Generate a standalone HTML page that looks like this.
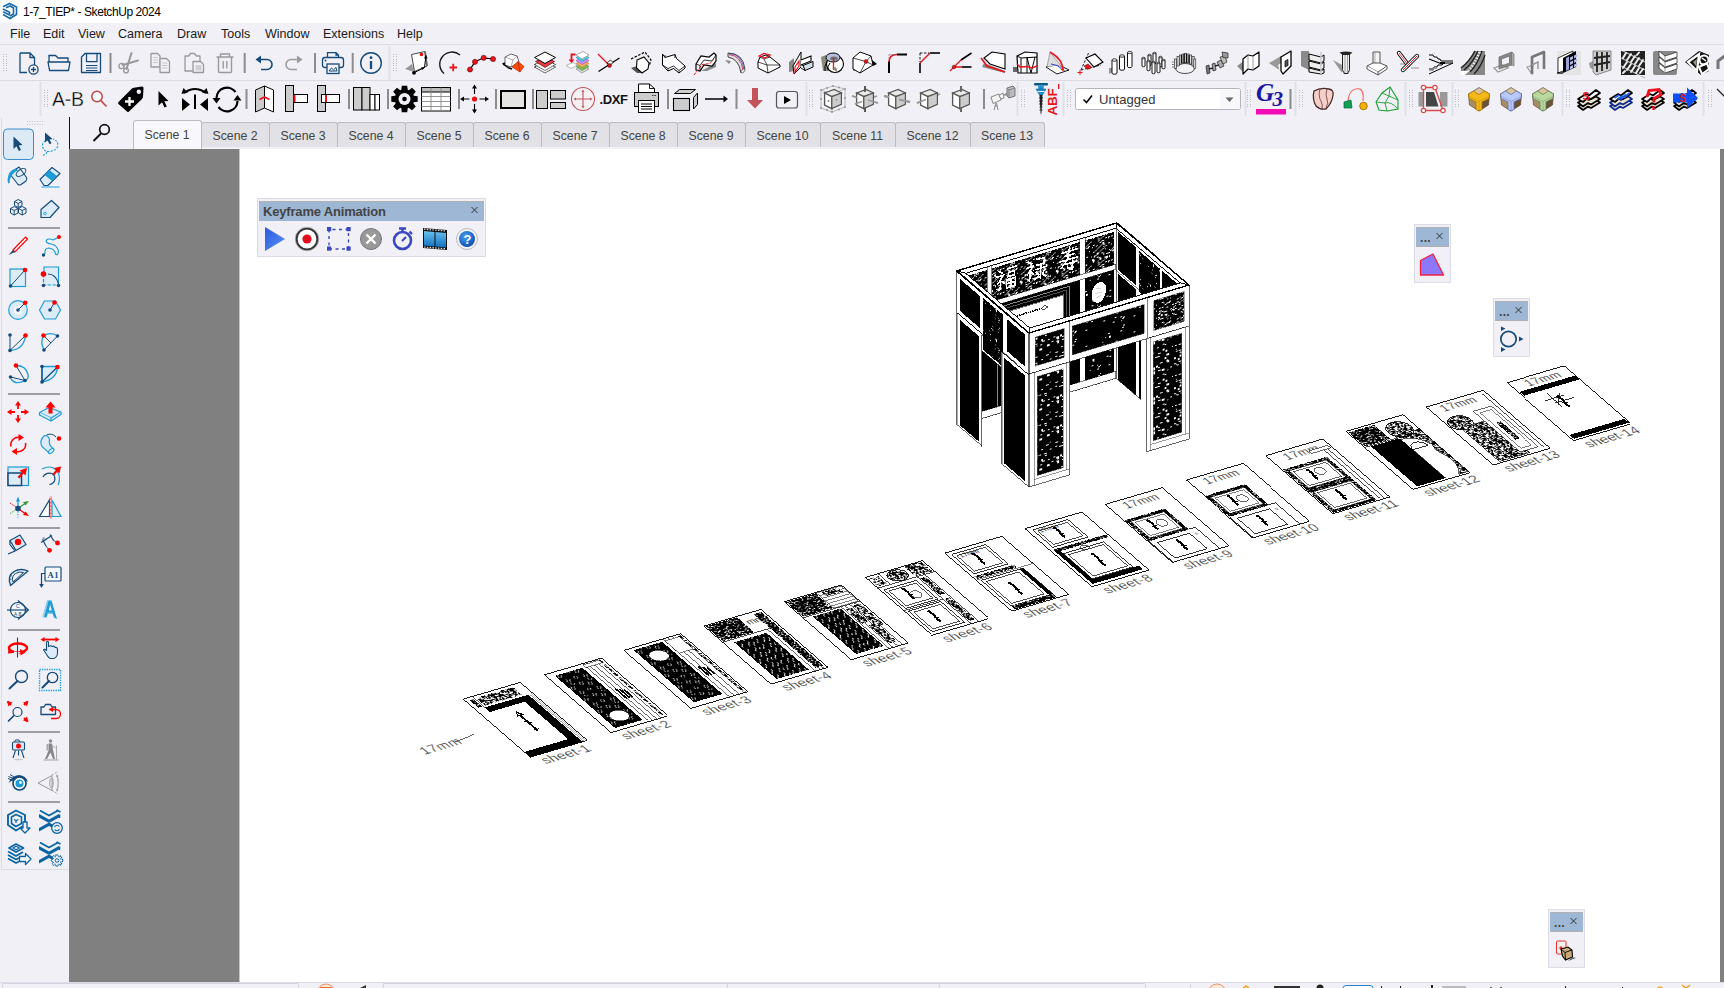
<!DOCTYPE html>
<html><head><meta charset="utf-8"><title>1-7_TIEP* - SketchUp 2024</title>
<style>
*{box-sizing:border-box;margin:0;padding:0}
html,body{width:1724px;height:988px;overflow:hidden;background:#f0f0f6;font-family:"Liberation Sans",sans-serif;}
.abs{position:absolute}
#title{position:absolute;left:0;top:0;width:1724px;height:23px;background:#fff}
#title .t{position:absolute;left:23px;top:5px;font-size:12px;color:#000;white-space:nowrap;letter-spacing:-0.42px}
#menu{position:absolute;left:0;top:23px;width:1724px;height:22px;background:#f0f0f6;border-bottom:1px solid #dcdce4}
#menu span{position:absolute;top:4px;font-size:12.5px;color:#1a1a1a;white-space:nowrap}
#tb1{position:absolute;left:0;top:45px;width:1724px;height:36px;background:#f0f0f6;border-bottom:1px solid #dadae2}
#tb2{position:absolute;left:0;top:81px;width:1724px;height:37px;background:#f0f0f6;border-bottom:1px solid #cbcbd0}
#tabs{position:absolute;left:70px;top:117px;width:1654px;height:32px;background:#f0f0f6}
.tab{position:absolute;top:5px;height:25px;background:#e1e1e6;border:1px solid #bcbcc4;border-bottom:none;border-radius:3px 3px 0 0;font-size:12.3px;color:#444;text-align:center;line-height:26px;white-space:nowrap}
.tab.act{top:3px;height:29px;background:#f8f8fc;line-height:28px;border-color:#bcbcc4}
#left{position:absolute;left:0;top:117px;width:69px;height:852px;background:#f0f0f6}
#vline{position:absolute;left:69px;top:117px;width:1.5px;height:32px;background:#111}
#gray{position:absolute;left:69px;top:149px;width:170px;height:833px;background:#808080;border-right:1px solid #c4c4c4;box-sizing:content-box}
#view{position:absolute;left:240px;top:149px;width:1480px;height:833px;background:#fff}
#rbar{position:absolute;left:1720px;top:149px;width:4px;height:833px;background:#808080}
#status{position:absolute;left:0;top:982px;width:1724px;height:6px;background:#f0f0f6}
.grip{position:absolute;width:5px;height:22px;background-image:radial-gradient(circle,#c4c4cc 0.6px,transparent 0.9px);background-size:2.5px 3px}
.sep{position:absolute;width:2px;background:#8a8a8a}
svg{position:absolute;overflow:visible}
</style></head><body>
<div id="title"><svg width="20" height="22" viewBox="0 0 20 22" style="left:0;top:0"><g fill="none" stroke="#1a6aa8" stroke-width="1.600" stroke-linejoin="round" stroke-linecap="round"><path d="M3.500 6.500L9.500 3.500L16.500 7V14.500L10 18.500"/><path d="M6.500 7.500L10 6L13.500 8V14L10.500 15.800"/><path d="M3.500 9.200L9.500 12.200V14M3.500 12L9.500 15M3.500 14.800L10 18.500"/></g></svg><span class="t">1-7_TIEP* - SketchUp 2024</span></div>
<div id="menu">
<span style="left:10px">File</span><span style="left:43px">Edit</span><span style="left:78px">View</span><span style="left:118px">Camera</span><span style="left:177px">Draw</span><span style="left:221px">Tools</span><span style="left:265px">Window</span><span style="left:323px">Extensions</span><span style="left:397px">Help</span>
</div>
<div id="tb1"></div>
<div id="tb2"></div>
<div id="left"></div>
<div id="vline"></div>
<div id="gray"></div>
<div id="view"></div>
<div id="rbar"></div>
<div id="status"></div>
<svg id="vsvg" width="1724" height="988" viewBox="0 0 1724 988" style="left:0;top:0" shape-rendering="crispEdges">
<defs>
<pattern id="spk" width="30" height="30" patternUnits="userSpaceOnUse"><rect width="30" height="30" fill="#000"/><rect x="9.7" y="4.5" width="1.4" height="1.4" fill="#fff"/><rect x="2.2" y="16.1" width="1.2" height="1.2" fill="#fff"/><rect x="1.7" y="15.2" width="0.9" height="0.9" fill="#fff"/><rect x="13.0" y="2.1" width="1.0" height="1.0" fill="#fff"/><rect x="12.7" y="24.8" width="1.0" height="1.0" fill="#fff"/><rect x="6.7" y="18.8" width="1.7" height="1.7" fill="#fff"/><rect x="17.3" y="11.9" width="1.7" height="1.7" fill="#fff"/><rect x="1.4" y="25.8" width="1.1" height="1.1" fill="#fff"/><rect x="4.3" y="3.5" width="1.1" height="1.1" fill="#fff"/><rect x="24.5" y="5.4" width="1.4" height="1.4" fill="#fff"/><rect x="19.2" y="11.2" width="1.3" height="1.3" fill="#fff"/><rect x="1.9" y="1.8" width="1.1" height="1.1" fill="#fff"/><rect x="20.4" y="12.8" width="1.2" height="1.2" fill="#fff"/><rect x="17.6" y="13.6" width="1.1" height="1.1" fill="#fff"/><rect x="23.8" y="21.0" width="1.1" height="1.1" fill="#fff"/><rect x="17.2" y="15.8" width="1.6" height="1.6" fill="#fff"/><rect x="21.9" y="8.6" width="1.7" height="1.7" fill="#fff"/><rect x="3.5" y="12.5" width="1.5" height="1.5" fill="#fff"/><rect x="4.6" y="14.7" width="0.9" height="0.9" fill="#fff"/><rect x="20.0" y="22.9" width="1.4" height="1.4" fill="#fff"/><rect x="26.3" y="9.4" width="1.5" height="1.5" fill="#fff"/><rect x="17.8" y="17.4" width="1.3" height="1.3" fill="#fff"/><rect x="25.2" y="28.3" width="1.3" height="1.3" fill="#fff"/><rect x="19.9" y="1.8" width="1.5" height="1.5" fill="#fff"/><rect x="19.4" y="29.8" width="1.6" height="1.6" fill="#fff"/><rect x="8.5" y="11.6" width="1.4" height="1.4" fill="#fff"/><rect x="0.7" y="13.9" width="1.0" height="1.0" fill="#fff"/><rect x="3.5" y="1.8" width="1.5" height="1.5" fill="#fff"/><rect x="3.9" y="7.4" width="1.2" height="1.2" fill="#fff"/><rect x="26.1" y="2.4" width="1.3" height="1.3" fill="#fff"/><rect x="16.5" y="26.5" width="1.6" height="1.6" fill="#fff"/><rect x="25.9" y="8.4" width="1.2" height="1.2" fill="#fff"/><rect x="10.8" y="26.5" width="1.7" height="1.7" fill="#fff"/><rect x="4.5" y="5.3" width="1.1" height="1.1" fill="#fff"/><rect x="7.0" y="14.5" width="1.4" height="1.4" fill="#fff"/><rect x="7.9" y="0.1" width="1.2" height="1.2" fill="#fff"/><rect x="11.1" y="17.0" width="1.7" height="1.7" fill="#fff"/><rect x="20.7" y="15.5" width="1.4" height="1.4" fill="#fff"/><rect x="20.3" y="1.6" width="1.6" height="1.6" fill="#fff"/><rect x="23.4" y="26.2" width="1.5" height="1.5" fill="#fff"/><rect x="11.8" y="12.0" width="1.0" height="1.0" fill="#fff"/><rect x="19.0" y="1.9" width="1.0" height="1.0" fill="#fff"/><rect x="6.3" y="4.9" width="1.2" height="1.2" fill="#fff"/><rect x="1.6" y="0.0" width="1.0" height="1.0" fill="#fff"/><rect x="3.0" y="10.9" width="0.9" height="0.9" fill="#fff"/><rect x="26.2" y="18.4" width="1.0" height="1.0" fill="#fff"/><rect x="7.6" y="10.4" width="1.2" height="1.2" fill="#fff"/><rect x="3.7" y="25.5" width="1.7" height="1.7" fill="#fff"/><rect x="14.0" y="14.5" width="1.0" height="1.0" fill="#fff"/><rect x="3.1" y="10.3" width="1.1" height="1.1" fill="#fff"/><rect x="24.9" y="4.8" width="0.9" height="0.9" fill="#fff"/><rect x="28.5" y="15.8" width="1.0" height="1.0" fill="#fff"/><rect x="16.3" y="0.8" width="1.3" height="1.3" fill="#fff"/><rect x="29.4" y="25.9" width="1.5" height="1.5" fill="#fff"/><rect x="7.8" y="11.0" width="1.0" height="1.0" fill="#fff"/><rect x="23.2" y="16.0" width="1.5" height="1.5" fill="#fff"/><rect x="9.9" y="6.7" width="1.5" height="1.5" fill="#fff"/><rect x="29.5" y="25.6" width="1.5" height="1.5" fill="#fff"/><rect x="24.5" y="22.2" width="1.1" height="1.1" fill="#fff"/><rect x="15.5" y="10.7" width="0.9" height="0.9" fill="#fff"/><rect x="0.8" y="8.4" width="1.1" height="1.1" fill="#fff"/><rect x="20.8" y="28.7" width="1.3" height="1.3" fill="#fff"/></pattern>
<pattern id="spk2" width="30" height="30" patternUnits="userSpaceOnUse"><rect width="30" height="30" fill="#000"/><rect x="28.1" y="29.6" width="1.3" height="1.3" fill="#fff"/><rect x="10.9" y="6.6" width="0.8" height="0.8" fill="#fff"/><rect x="5.9" y="6.1" width="1.1" height="1.1" fill="#fff"/><rect x="27.0" y="25.2" width="1.0" height="1.0" fill="#fff"/><rect x="19.6" y="24.0" width="0.8" height="0.8" fill="#fff"/><rect x="19.8" y="27.3" width="1.2" height="1.2" fill="#fff"/><rect x="22.5" y="14.3" width="0.8" height="0.8" fill="#fff"/><rect x="23.7" y="10.0" width="1.2" height="1.2" fill="#fff"/><rect x="29.1" y="11.9" width="0.9" height="0.9" fill="#fff"/><rect x="28.4" y="21.7" width="0.8" height="0.8" fill="#fff"/><rect x="3.8" y="4.5" width="1.2" height="1.2" fill="#fff"/><rect x="24.2" y="4.4" width="1.2" height="1.2" fill="#fff"/><rect x="29.4" y="19.7" width="0.9" height="0.9" fill="#fff"/><rect x="16.5" y="3.9" width="0.7" height="0.7" fill="#fff"/><rect x="29.1" y="19.5" width="1.0" height="1.0" fill="#fff"/><rect x="28.0" y="13.0" width="1.2" height="1.2" fill="#fff"/><rect x="24.8" y="6.3" width="0.9" height="0.9" fill="#fff"/><rect x="8.8" y="7.2" width="1.1" height="1.1" fill="#fff"/><rect x="7.8" y="12.6" width="0.8" height="0.8" fill="#fff"/><rect x="27.3" y="10.6" width="1.0" height="1.0" fill="#fff"/><rect x="17.5" y="27.1" width="1.0" height="1.0" fill="#fff"/><rect x="27.5" y="15.0" width="1.0" height="1.0" fill="#fff"/><rect x="15.7" y="0.6" width="1.0" height="1.0" fill="#fff"/><rect x="5.5" y="0.1" width="1.2" height="1.2" fill="#fff"/><rect x="5.2" y="14.2" width="1.1" height="1.1" fill="#fff"/><rect x="16.7" y="9.8" width="1.0" height="1.0" fill="#fff"/></pattern>
<pattern id="noise" width="20" height="20" patternUnits="userSpaceOnUse"><rect width="20" height="20" fill="#000"/><rect x="11.1" y="15.7" width="0.8" height="0.8" fill="#fff"/><rect x="11.2" y="5.0" width="0.9" height="0.9" fill="#fff"/><rect x="15.4" y="10.2" width="1.0" height="1.0" fill="#fff"/><rect x="15.2" y="18.2" width="1.0" height="1.0" fill="#fff"/><rect x="12.3" y="10.1" width="1.0" height="1.0" fill="#fff"/><rect x="13.9" y="9.0" width="1.0" height="1.0" fill="#fff"/><rect x="9.6" y="18.8" width="1.1" height="1.1" fill="#fff"/><rect x="17.5" y="18.8" width="0.9" height="0.9" fill="#fff"/><rect x="11.2" y="18.9" width="1.2" height="1.2" fill="#fff"/><rect x="2.7" y="2.4" width="1.0" height="1.0" fill="#fff"/><rect x="1.5" y="4.8" width="0.7" height="0.7" fill="#fff"/><rect x="13.4" y="15.7" width="1.2" height="1.2" fill="#fff"/><rect x="3.1" y="14.3" width="1.1" height="1.1" fill="#fff"/><rect x="2.9" y="17.7" width="1.3" height="1.3" fill="#fff"/><rect x="4.4" y="19.1" width="0.9" height="0.9" fill="#fff"/><rect x="9.7" y="19.8" width="1.2" height="1.2" fill="#fff"/><rect x="3.2" y="8.6" width="1.0" height="1.0" fill="#fff"/><rect x="6.8" y="3.9" width="0.9" height="0.9" fill="#fff"/><rect x="14.4" y="0.4" width="1.0" height="1.0" fill="#fff"/><rect x="8.8" y="0.4" width="0.9" height="0.9" fill="#fff"/><rect x="12.5" y="10.2" width="0.7" height="0.7" fill="#fff"/><rect x="19.7" y="15.8" width="1.3" height="1.3" fill="#fff"/><rect x="2.1" y="5.3" width="0.7" height="0.7" fill="#fff"/><rect x="15.6" y="5.4" width="0.8" height="0.8" fill="#fff"/><rect x="8.4" y="18.2" width="1.2" height="1.2" fill="#fff"/><rect x="5.2" y="3.0" width="1.3" height="1.3" fill="#fff"/><rect x="11.4" y="14.0" width="0.8" height="0.8" fill="#fff"/><rect x="1.2" y="13.8" width="1.0" height="1.0" fill="#fff"/><rect x="1.4" y="18.8" width="1.1" height="1.1" fill="#fff"/><rect x="16.0" y="1.7" width="1.2" height="1.2" fill="#fff"/><rect x="1.3" y="17.3" width="1.0" height="1.0" fill="#fff"/><rect x="6.8" y="11.1" width="1.3" height="1.3" fill="#fff"/><rect x="5.4" y="2.6" width="1.0" height="1.0" fill="#fff"/><rect x="4.8" y="2.2" width="0.8" height="0.8" fill="#fff"/><rect x="1.0" y="4.0" width="0.9" height="0.9" fill="#fff"/><rect x="6.1" y="15.2" width="0.9" height="0.9" fill="#fff"/><rect x="10.0" y="3.6" width="0.9" height="0.9" fill="#fff"/><rect x="0.4" y="5.0" width="0.7" height="0.7" fill="#fff"/><rect x="14.7" y="11.0" width="0.8" height="0.8" fill="#fff"/><rect x="9.5" y="18.7" width="0.8" height="0.8" fill="#fff"/><rect x="16.4" y="8.6" width="1.0" height="1.0" fill="#fff"/><rect x="16.7" y="7.9" width="1.0" height="1.0" fill="#fff"/><rect x="13.8" y="19.6" width="0.9" height="0.9" fill="#fff"/><rect x="16.6" y="14.1" width="1.1" height="1.1" fill="#fff"/><rect x="8.1" y="7.0" width="0.7" height="0.7" fill="#fff"/><rect x="2.6" y="1.4" width="1.1" height="1.1" fill="#fff"/><rect x="5.1" y="3.3" width="0.8" height="0.8" fill="#fff"/><rect x="16.8" y="17.4" width="1.1" height="1.1" fill="#fff"/><rect x="5.6" y="4.8" width="0.9" height="0.9" fill="#fff"/><rect x="9.2" y="3.2" width="1.0" height="1.0" fill="#fff"/><rect x="5.3" y="19.2" width="1.3" height="1.3" fill="#fff"/><rect x="10.9" y="4.9" width="1.3" height="1.3" fill="#fff"/><rect x="6.2" y="7.1" width="0.7" height="0.7" fill="#fff"/><rect x="7.6" y="9.5" width="1.0" height="1.0" fill="#fff"/><rect x="4.0" y="10.1" width="0.7" height="0.7" fill="#fff"/><rect x="5.3" y="1.8" width="0.9" height="0.9" fill="#fff"/><rect x="0.8" y="0.4" width="0.9" height="0.9" fill="#fff"/><rect x="4.7" y="11.7" width="1.0" height="1.0" fill="#fff"/><rect x="15.0" y="13.2" width="1.1" height="1.1" fill="#fff"/><rect x="17.6" y="7.8" width="0.9" height="0.9" fill="#fff"/><rect x="19.7" y="3.0" width="1.1" height="1.1" fill="#fff"/><rect x="12.9" y="0.9" width="1.2" height="1.2" fill="#fff"/><rect x="17.8" y="12.5" width="1.1" height="1.1" fill="#fff"/><rect x="16.2" y="2.8" width="1.0" height="1.0" fill="#fff"/><rect x="10.1" y="16.7" width="1.2" height="1.2" fill="#fff"/><rect x="16.5" y="11.7" width="1.2" height="1.2" fill="#fff"/><rect x="13.7" y="13.9" width="0.8" height="0.8" fill="#fff"/><rect x="0.6" y="2.7" width="0.9" height="0.9" fill="#fff"/><rect x="2.1" y="16.7" width="1.0" height="1.0" fill="#fff"/><rect x="12.6" y="12.5" width="1.1" height="1.1" fill="#fff"/><rect x="9.8" y="0.1" width="1.2" height="1.2" fill="#fff"/><rect x="15.0" y="10.1" width="1.0" height="1.0" fill="#fff"/><rect x="13.2" y="1.3" width="1.1" height="1.1" fill="#fff"/><rect x="5.0" y="1.5" width="0.9" height="0.9" fill="#fff"/><rect x="14.6" y="4.1" width="1.1" height="1.1" fill="#fff"/><rect x="19.5" y="9.9" width="0.9" height="0.9" fill="#fff"/><rect x="9.6" y="13.7" width="1.2" height="1.2" fill="#fff"/><rect x="12.3" y="12.9" width="0.7" height="0.7" fill="#fff"/><rect x="2.9" y="5.1" width="1.1" height="1.1" fill="#fff"/><rect x="6.1" y="11.4" width="0.7" height="0.7" fill="#fff"/></pattern>
<pattern id="noise3" width="20" height="20" patternUnits="userSpaceOnUse"><rect width="20" height="20" fill="#fff"/><rect x="1.2" y="5.4" width="1.3" height="1.3" fill="#000"/><rect x="13.8" y="13.5" width="1.0" height="1.0" fill="#000"/><rect x="10.3" y="9.3" width="1.2" height="1.2" fill="#000"/><rect x="2.4" y="17.9" width="1.0" height="1.0" fill="#000"/><rect x="19.6" y="18.7" width="0.8" height="0.8" fill="#000"/><rect x="9.2" y="16.4" width="1.6" height="1.6" fill="#000"/><rect x="9.0" y="5.4" width="1.0" height="1.0" fill="#000"/><rect x="18.9" y="4.2" width="1.3" height="1.3" fill="#000"/><rect x="2.8" y="10.5" width="1.6" height="1.6" fill="#000"/><rect x="2.7" y="16.4" width="1.2" height="1.2" fill="#000"/><rect x="17.7" y="14.1" width="1.0" height="1.0" fill="#000"/><rect x="18.0" y="9.7" width="0.8" height="0.8" fill="#000"/><rect x="0.1" y="9.8" width="1.2" height="1.2" fill="#000"/><rect x="6.0" y="2.8" width="1.1" height="1.1" fill="#000"/><rect x="6.3" y="16.8" width="0.8" height="0.8" fill="#000"/><rect x="15.0" y="16.8" width="0.9" height="0.9" fill="#000"/><rect x="18.5" y="14.3" width="1.5" height="1.5" fill="#000"/><rect x="5.8" y="7.4" width="1.1" height="1.1" fill="#000"/><rect x="20.0" y="11.8" width="1.1" height="1.1" fill="#000"/><rect x="8.6" y="5.5" width="0.8" height="0.8" fill="#000"/><rect x="2.0" y="16.7" width="1.0" height="1.0" fill="#000"/><rect x="18.7" y="5.0" width="1.0" height="1.0" fill="#000"/><rect x="10.2" y="3.8" width="1.1" height="1.1" fill="#000"/><rect x="19.1" y="17.7" width="1.4" height="1.4" fill="#000"/><rect x="12.6" y="18.3" width="1.6" height="1.6" fill="#000"/><rect x="11.0" y="14.4" width="0.8" height="0.8" fill="#000"/><rect x="14.6" y="9.0" width="1.4" height="1.4" fill="#000"/><rect x="12.9" y="5.7" width="0.8" height="0.8" fill="#000"/><rect x="18.5" y="2.5" width="1.2" height="1.2" fill="#000"/><rect x="6.9" y="6.0" width="1.4" height="1.4" fill="#000"/><rect x="19.5" y="5.2" width="1.3" height="1.3" fill="#000"/><rect x="6.0" y="11.1" width="1.1" height="1.1" fill="#000"/><rect x="3.3" y="3.2" width="1.0" height="1.0" fill="#000"/><rect x="18.1" y="9.9" width="1.0" height="1.0" fill="#000"/><rect x="18.1" y="19.9" width="1.2" height="1.2" fill="#000"/><rect x="2.8" y="3.8" width="0.9" height="0.9" fill="#000"/><rect x="6.8" y="1.8" width="1.0" height="1.0" fill="#000"/><rect x="5.2" y="11.4" width="1.5" height="1.5" fill="#000"/><rect x="15.0" y="8.3" width="1.1" height="1.1" fill="#000"/><rect x="10.5" y="7.5" width="1.1" height="1.1" fill="#000"/><rect x="1.2" y="5.6" width="1.6" height="1.6" fill="#000"/><rect x="2.5" y="10.1" width="1.3" height="1.3" fill="#000"/><rect x="17.3" y="4.3" width="1.0" height="1.0" fill="#000"/><rect x="5.0" y="8.0" width="1.2" height="1.2" fill="#000"/><rect x="19.1" y="17.0" width="1.5" height="1.5" fill="#000"/><rect x="0.4" y="0.6" width="1.4" height="1.4" fill="#000"/><rect x="17.9" y="9.5" width="1.3" height="1.3" fill="#000"/><rect x="0.0" y="7.8" width="1.5" height="1.5" fill="#000"/><rect x="16.5" y="17.1" width="1.6" height="1.6" fill="#000"/><rect x="5.0" y="2.2" width="0.9" height="0.9" fill="#000"/><rect x="10.4" y="13.6" width="1.6" height="1.6" fill="#000"/><rect x="14.4" y="12.9" width="1.4" height="1.4" fill="#000"/><rect x="9.1" y="11.0" width="0.8" height="0.8" fill="#000"/><rect x="15.6" y="4.7" width="1.5" height="1.5" fill="#000"/><rect x="12.9" y="6.1" width="0.9" height="0.9" fill="#000"/><rect x="5.0" y="12.7" width="1.4" height="1.4" fill="#000"/><rect x="2.2" y="1.4" width="1.2" height="1.2" fill="#000"/><rect x="11.7" y="7.8" width="1.0" height="1.0" fill="#000"/><rect x="12.0" y="0.2" width="1.0" height="1.0" fill="#000"/><rect x="9.2" y="19.2" width="1.3" height="1.3" fill="#000"/><rect x="17.7" y="9.5" width="1.0" height="1.0" fill="#000"/><rect x="4.9" y="19.2" width="1.4" height="1.4" fill="#000"/><rect x="6.1" y="0.4" width="1.2" height="1.2" fill="#000"/><rect x="13.5" y="8.4" width="1.0" height="1.0" fill="#000"/><rect x="13.3" y="18.5" width="1.0" height="1.0" fill="#000"/><rect x="0.7" y="6.8" width="1.1" height="1.1" fill="#000"/><rect x="13.7" y="4.0" width="1.4" height="1.4" fill="#000"/><rect x="14.8" y="10.1" width="1.0" height="1.0" fill="#000"/><rect x="19.4" y="6.2" width="1.5" height="1.5" fill="#000"/><rect x="4.6" y="4.4" width="1.4" height="1.4" fill="#000"/><rect x="5.9" y="19.0" width="1.2" height="1.2" fill="#000"/><rect x="3.7" y="4.5" width="1.1" height="1.1" fill="#000"/><rect x="13.3" y="19.0" width="0.9" height="0.9" fill="#000"/><rect x="7.9" y="4.3" width="1.6" height="1.6" fill="#000"/><rect x="2.8" y="1.0" width="0.8" height="0.8" fill="#000"/><rect x="7.9" y="18.0" width="1.5" height="1.5" fill="#000"/><rect x="14.7" y="20.0" width="1.5" height="1.5" fill="#000"/><rect x="6.6" y="3.7" width="1.5" height="1.5" fill="#000"/><rect x="14.9" y="0.6" width="1.3" height="1.3" fill="#000"/><rect x="7.6" y="7.5" width="1.1" height="1.1" fill="#000"/><rect x="3.4" y="0.1" width="1.0" height="1.0" fill="#000"/><rect x="7.0" y="19.1" width="0.9" height="0.9" fill="#000"/><rect x="19.3" y="4.1" width="1.1" height="1.1" fill="#000"/><rect x="16.4" y="16.4" width="1.1" height="1.1" fill="#000"/><rect x="1.0" y="9.5" width="1.1" height="1.1" fill="#000"/><rect x="18.4" y="3.9" width="1.1" height="1.1" fill="#000"/><rect x="17.9" y="0.6" width="1.1" height="1.1" fill="#000"/><rect x="16.2" y="15.3" width="0.8" height="0.8" fill="#000"/><rect x="0.7" y="1.3" width="1.5" height="1.5" fill="#000"/><rect x="5.1" y="14.9" width="1.5" height="1.5" fill="#000"/><rect x="6.8" y="5.4" width="1.6" height="1.6" fill="#000"/><rect x="12.3" y="5.2" width="1.4" height="1.4" fill="#000"/><rect x="6.3" y="5.5" width="0.8" height="0.8" fill="#000"/><rect x="15.1" y="18.3" width="1.3" height="1.3" fill="#000"/><rect x="18.9" y="0.5" width="1.0" height="1.0" fill="#000"/><rect x="9.5" y="19.1" width="1.6" height="1.6" fill="#000"/><rect x="7.7" y="5.0" width="1.1" height="1.1" fill="#000"/><rect x="9.9" y="18.6" width="0.9" height="0.9" fill="#000"/><rect x="16.1" y="14.8" width="1.5" height="1.5" fill="#000"/><rect x="15.5" y="12.1" width="1.1" height="1.1" fill="#000"/><rect x="6.4" y="7.2" width="1.4" height="1.4" fill="#000"/><rect x="1.6" y="3.9" width="1.4" height="1.4" fill="#000"/><rect x="4.9" y="1.3" width="0.8" height="0.8" fill="#000"/><rect x="11.1" y="6.5" width="1.6" height="1.6" fill="#000"/><rect x="17.7" y="19.8" width="1.0" height="1.0" fill="#000"/><rect x="1.7" y="1.9" width="1.2" height="1.2" fill="#000"/><rect x="14.2" y="8.9" width="1.0" height="1.0" fill="#000"/><rect x="8.3" y="12.4" width="1.3" height="1.3" fill="#000"/><rect x="15.0" y="16.9" width="1.3" height="1.3" fill="#000"/><rect x="2.4" y="16.8" width="1.0" height="1.0" fill="#000"/><rect x="11.3" y="7.5" width="1.4" height="1.4" fill="#000"/><rect x="4.0" y="4.9" width="1.0" height="1.0" fill="#000"/><rect x="3.1" y="17.7" width="1.3" height="1.3" fill="#000"/><rect x="6.5" y="7.9" width="1.6" height="1.6" fill="#000"/><rect x="10.1" y="4.6" width="1.4" height="1.4" fill="#000"/><rect x="13.1" y="19.8" width="0.9" height="0.9" fill="#000"/><rect x="9.5" y="16.4" width="1.5" height="1.5" fill="#000"/><rect x="18.3" y="0.8" width="1.0" height="1.0" fill="#000"/><rect x="2.4" y="3.8" width="1.6" height="1.6" fill="#000"/><rect x="11.7" y="18.6" width="1.1" height="1.1" fill="#000"/><rect x="17.3" y="9.0" width="1.0" height="1.0" fill="#000"/><rect x="15.6" y="18.9" width="0.9" height="0.9" fill="#000"/><rect x="11.9" y="12.4" width="1.0" height="1.0" fill="#000"/><rect x="7.4" y="2.8" width="1.0" height="1.0" fill="#000"/><rect x="5.1" y="12.0" width="1.3" height="1.3" fill="#000"/><rect x="4.1" y="0.2" width="1.1" height="1.1" fill="#000"/><rect x="13.6" y="3.7" width="1.0" height="1.0" fill="#000"/><rect x="4.1" y="15.9" width="1.2" height="1.2" fill="#000"/><rect x="1.3" y="2.0" width="1.1" height="1.1" fill="#000"/><rect x="11.0" y="12.8" width="0.9" height="0.9" fill="#000"/><rect x="3.3" y="13.9" width="1.1" height="1.1" fill="#000"/><rect x="5.7" y="6.2" width="1.6" height="1.6" fill="#000"/><rect x="6.2" y="11.3" width="1.1" height="1.1" fill="#000"/><rect x="8.3" y="17.3" width="1.6" height="1.6" fill="#000"/><rect x="7.3" y="3.9" width="1.4" height="1.4" fill="#000"/><rect x="4.1" y="0.1" width="1.5" height="1.5" fill="#000"/><rect x="8.5" y="16.4" width="1.1" height="1.1" fill="#000"/><rect x="17.7" y="9.2" width="0.9" height="0.9" fill="#000"/><rect x="0.3" y="11.0" width="1.3" height="1.3" fill="#000"/><rect x="18.2" y="1.8" width="1.3" height="1.3" fill="#000"/><rect x="7.4" y="10.1" width="0.9" height="0.9" fill="#000"/><rect x="5.7" y="10.4" width="1.5" height="1.5" fill="#000"/><rect x="2.2" y="9.8" width="1.4" height="1.4" fill="#000"/><rect x="19.3" y="3.9" width="0.9" height="0.9" fill="#000"/><rect x="18.9" y="19.5" width="1.2" height="1.2" fill="#000"/><rect x="1.1" y="18.5" width="1.1" height="1.1" fill="#000"/><rect x="18.1" y="12.4" width="1.5" height="1.5" fill="#000"/><rect x="3.2" y="15.7" width="1.0" height="1.0" fill="#000"/><rect x="8.1" y="16.9" width="1.5" height="1.5" fill="#000"/><rect x="3.7" y="4.4" width="1.1" height="1.1" fill="#000"/><rect x="10.4" y="7.7" width="0.9" height="0.9" fill="#000"/><rect x="4.9" y="14.5" width="1.5" height="1.5" fill="#000"/><rect x="0.8" y="11.2" width="1.4" height="1.4" fill="#000"/><rect x="0.8" y="16.8" width="0.9" height="0.9" fill="#000"/><rect x="12.0" y="11.0" width="1.3" height="1.3" fill="#000"/><rect x="6.1" y="8.4" width="1.3" height="1.3" fill="#000"/><rect x="8.5" y="13.2" width="1.2" height="1.2" fill="#000"/><rect x="8.8" y="0.5" width="1.3" height="1.3" fill="#000"/><rect x="9.8" y="4.7" width="1.4" height="1.4" fill="#000"/><rect x="15.6" y="9.2" width="0.9" height="0.9" fill="#000"/><rect x="9.5" y="2.1" width="0.9" height="0.9" fill="#000"/><rect x="8.6" y="1.8" width="1.2" height="1.2" fill="#000"/><rect x="10.2" y="0.8" width="1.3" height="1.3" fill="#000"/><rect x="1.6" y="14.7" width="1.4" height="1.4" fill="#000"/><rect x="10.2" y="1.1" width="1.2" height="1.2" fill="#000"/><rect x="7.6" y="19.0" width="0.9" height="0.9" fill="#000"/><rect x="17.1" y="19.9" width="1.4" height="1.4" fill="#000"/><rect x="16.3" y="3.9" width="1.6" height="1.6" fill="#000"/><rect x="9.8" y="19.1" width="1.5" height="1.5" fill="#000"/><rect x="3.3" y="15.8" width="1.5" height="1.5" fill="#000"/><rect x="1.3" y="7.0" width="1.4" height="1.4" fill="#000"/><rect x="3.2" y="17.9" width="1.0" height="1.0" fill="#000"/><rect x="16.3" y="2.9" width="1.2" height="1.2" fill="#000"/><rect x="18.4" y="4.2" width="1.0" height="1.0" fill="#000"/><rect x="10.1" y="6.4" width="0.8" height="0.8" fill="#000"/><rect x="3.6" y="3.2" width="1.5" height="1.5" fill="#000"/><rect x="13.6" y="17.9" width="0.9" height="0.9" fill="#000"/><rect x="15.7" y="2.3" width="1.2" height="1.2" fill="#000"/><rect x="12.7" y="7.2" width="1.5" height="1.5" fill="#000"/><rect x="11.1" y="11.6" width="1.5" height="1.5" fill="#000"/><rect x="2.1" y="19.9" width="1.3" height="1.3" fill="#000"/><rect x="7.9" y="16.0" width="1.0" height="1.0" fill="#000"/><rect x="19.8" y="11.5" width="1.1" height="1.1" fill="#000"/><rect x="15.3" y="8.8" width="0.9" height="0.9" fill="#000"/><rect x="14.9" y="1.0" width="1.5" height="1.5" fill="#000"/><rect x="5.1" y="12.8" width="1.6" height="1.6" fill="#000"/><rect x="11.7" y="13.3" width="1.1" height="1.1" fill="#000"/><rect x="0.0" y="0.7" width="0.9" height="0.9" fill="#000"/><rect x="12.3" y="8.6" width="1.2" height="1.2" fill="#000"/><rect x="17.9" y="2.6" width="1.0" height="1.0" fill="#000"/><rect x="13.1" y="0.4" width="0.8" height="0.8" fill="#000"/><rect x="7.1" y="2.1" width="1.1" height="1.1" fill="#000"/><rect x="4.5" y="11.7" width="1.3" height="1.3" fill="#000"/><rect x="4.1" y="12.5" width="1.2" height="1.2" fill="#000"/><rect x="2.7" y="18.7" width="1.0" height="1.0" fill="#000"/><rect x="3.0" y="1.9" width="1.3" height="1.3" fill="#000"/><rect x="17.4" y="15.6" width="1.1" height="1.1" fill="#000"/><rect x="5.3" y="0.2" width="1.3" height="1.3" fill="#000"/><rect x="11.2" y="7.0" width="1.3" height="1.3" fill="#000"/><rect x="8.9" y="18.7" width="1.4" height="1.4" fill="#000"/><rect x="5.0" y="18.1" width="0.8" height="0.8" fill="#000"/><rect x="10.6" y="8.1" width="1.0" height="1.0" fill="#000"/><rect x="1.2" y="15.6" width="0.8" height="0.8" fill="#000"/><rect x="11.0" y="18.8" width="0.9" height="0.9" fill="#000"/><rect x="4.0" y="12.2" width="1.2" height="1.2" fill="#000"/><rect x="12.8" y="16.3" width="0.9" height="0.9" fill="#000"/><rect x="6.2" y="6.0" width="0.8" height="0.8" fill="#000"/><rect x="17.8" y="15.7" width="1.4" height="1.4" fill="#000"/><rect x="0.1" y="16.9" width="1.4" height="1.4" fill="#000"/><rect x="9.3" y="14.8" width="1.2" height="1.2" fill="#000"/><rect x="4.5" y="2.1" width="1.0" height="1.0" fill="#000"/><rect x="0.8" y="6.7" width="1.4" height="1.4" fill="#000"/><rect x="13.9" y="16.9" width="1.4" height="1.4" fill="#000"/><rect x="5.3" y="11.1" width="1.1" height="1.1" fill="#000"/><rect x="15.8" y="10.5" width="1.0" height="1.0" fill="#000"/><rect x="12.8" y="19.3" width="1.0" height="1.0" fill="#000"/><rect x="17.6" y="0.3" width="1.0" height="1.0" fill="#000"/><rect x="4.7" y="14.9" width="1.6" height="1.6" fill="#000"/><rect x="14.9" y="6.5" width="1.5" height="1.5" fill="#000"/><rect x="6.6" y="4.8" width="1.5" height="1.5" fill="#000"/><rect x="12.6" y="13.9" width="1.3" height="1.3" fill="#000"/><rect x="19.6" y="9.4" width="1.5" height="1.5" fill="#000"/><rect x="14.0" y="17.2" width="1.1" height="1.1" fill="#000"/><rect x="14.5" y="11.4" width="1.0" height="1.0" fill="#000"/><rect x="4.2" y="12.5" width="0.9" height="0.9" fill="#000"/><rect x="18.2" y="2.9" width="0.8" height="0.8" fill="#000"/><rect x="2.1" y="18.6" width="1.1" height="1.1" fill="#000"/><rect x="2.8" y="0.6" width="0.8" height="0.8" fill="#000"/><rect x="13.9" y="12.7" width="1.4" height="1.4" fill="#000"/><rect x="14.7" y="1.3" width="1.3" height="1.3" fill="#000"/><rect x="7.3" y="16.4" width="1.5" height="1.5" fill="#000"/><rect x="17.8" y="1.3" width="1.5" height="1.5" fill="#000"/><rect x="18.3" y="18.9" width="0.9" height="0.9" fill="#000"/><rect x="4.1" y="2.2" width="0.8" height="0.8" fill="#000"/><rect x="17.0" y="16.2" width="1.3" height="1.3" fill="#000"/><rect x="16.5" y="12.6" width="1.0" height="1.0" fill="#000"/><rect x="2.0" y="2.0" width="1.4" height="1.4" fill="#000"/><rect x="4.1" y="6.4" width="1.1" height="1.1" fill="#000"/><rect x="0.4" y="5.1" width="1.0" height="1.0" fill="#000"/><rect x="14.3" y="7.4" width="1.1" height="1.1" fill="#000"/><rect x="19.3" y="10.1" width="1.5" height="1.5" fill="#000"/><rect x="12.4" y="0.6" width="1.1" height="1.1" fill="#000"/><rect x="8.7" y="15.5" width="1.1" height="1.1" fill="#000"/><rect x="14.1" y="10.8" width="1.0" height="1.0" fill="#000"/><rect x="17.2" y="1.8" width="1.5" height="1.5" fill="#000"/><rect x="3.4" y="0.0" width="1.0" height="1.0" fill="#000"/><rect x="15.2" y="19.6" width="0.8" height="0.8" fill="#000"/><rect x="9.8" y="9.8" width="1.4" height="1.4" fill="#000"/><rect x="3.7" y="9.9" width="1.1" height="1.1" fill="#000"/><rect x="16.6" y="5.2" width="1.6" height="1.6" fill="#000"/><rect x="5.7" y="4.3" width="1.4" height="1.4" fill="#000"/><rect x="10.0" y="2.2" width="1.3" height="1.3" fill="#000"/><rect x="1.6" y="15.8" width="1.4" height="1.4" fill="#000"/><rect x="15.7" y="12.6" width="1.1" height="1.1" fill="#000"/><rect x="8.0" y="7.9" width="1.5" height="1.5" fill="#000"/><rect x="1.7" y="17.8" width="0.8" height="0.8" fill="#000"/><rect x="4.1" y="5.3" width="1.5" height="1.5" fill="#000"/><rect x="10.0" y="7.6" width="1.5" height="1.5" fill="#000"/><rect x="4.7" y="9.2" width="1.2" height="1.2" fill="#000"/><rect x="15.1" y="15.1" width="1.3" height="1.3" fill="#000"/></pattern>
<pattern id="noise2" width="20" height="20" patternUnits="userSpaceOnUse"><rect width="20" height="20" fill="#fff"/><rect x="7.0" y="6.5" width="0.8" height="0.8" fill="#000"/><rect x="16.9" y="13.2" width="1.3" height="1.3" fill="#000"/><rect x="3.4" y="8.8" width="1.3" height="1.3" fill="#000"/><rect x="11.6" y="2.5" width="1.1" height="1.1" fill="#000"/><rect x="17.7" y="4.8" width="0.9" height="0.9" fill="#000"/><rect x="6.0" y="14.1" width="1.4" height="1.4" fill="#000"/><rect x="3.1" y="3.1" width="0.9" height="0.9" fill="#000"/><rect x="6.5" y="10.4" width="0.8" height="0.8" fill="#000"/><rect x="6.6" y="3.8" width="1.5" height="1.5" fill="#000"/><rect x="14.6" y="2.0" width="1.5" height="1.5" fill="#000"/><rect x="2.0" y="7.7" width="1.5" height="1.5" fill="#000"/><rect x="15.9" y="14.7" width="1.0" height="1.0" fill="#000"/><rect x="3.9" y="12.8" width="0.8" height="0.8" fill="#000"/><rect x="4.1" y="7.8" width="0.7" height="0.7" fill="#000"/><rect x="8.0" y="15.8" width="1.3" height="1.3" fill="#000"/><rect x="10.0" y="12.6" width="1.1" height="1.1" fill="#000"/><rect x="2.8" y="12.1" width="1.0" height="1.0" fill="#000"/><rect x="14.8" y="18.2" width="1.0" height="1.0" fill="#000"/><rect x="11.5" y="15.0" width="1.0" height="1.0" fill="#000"/><rect x="4.6" y="14.4" width="1.4" height="1.4" fill="#000"/><rect x="15.5" y="14.0" width="1.4" height="1.4" fill="#000"/><rect x="13.6" y="12.8" width="1.1" height="1.1" fill="#000"/><rect x="6.3" y="12.6" width="0.8" height="0.8" fill="#000"/><rect x="8.4" y="15.6" width="1.3" height="1.3" fill="#000"/><rect x="12.6" y="5.0" width="1.0" height="1.0" fill="#000"/><rect x="9.1" y="12.4" width="1.0" height="1.0" fill="#000"/><rect x="13.5" y="18.6" width="0.8" height="0.8" fill="#000"/><rect x="13.1" y="15.6" width="1.0" height="1.0" fill="#000"/><rect x="9.8" y="19.5" width="0.7" height="0.7" fill="#000"/><rect x="10.9" y="3.2" width="1.3" height="1.3" fill="#000"/><rect x="18.8" y="10.4" width="0.8" height="0.8" fill="#000"/><rect x="11.5" y="10.8" width="1.3" height="1.3" fill="#000"/><rect x="10.2" y="12.8" width="1.4" height="1.4" fill="#000"/><rect x="10.4" y="8.2" width="1.5" height="1.5" fill="#000"/><rect x="4.2" y="13.7" width="1.0" height="1.0" fill="#000"/><rect x="15.3" y="2.4" width="1.5" height="1.5" fill="#000"/><rect x="7.1" y="1.1" width="0.9" height="0.9" fill="#000"/><rect x="8.0" y="0.3" width="1.0" height="1.0" fill="#000"/><rect x="8.4" y="14.0" width="1.0" height="1.0" fill="#000"/><rect x="5.3" y="4.5" width="1.3" height="1.3" fill="#000"/><rect x="18.8" y="10.5" width="0.9" height="0.9" fill="#000"/><rect x="16.0" y="7.8" width="0.9" height="0.9" fill="#000"/><rect x="2.6" y="15.5" width="1.3" height="1.3" fill="#000"/><rect x="12.7" y="9.4" width="1.1" height="1.1" fill="#000"/><rect x="4.5" y="19.3" width="1.0" height="1.0" fill="#000"/><rect x="12.8" y="16.4" width="1.4" height="1.4" fill="#000"/><rect x="9.4" y="5.9" width="1.1" height="1.1" fill="#000"/><rect x="2.5" y="16.7" width="1.0" height="1.0" fill="#000"/><rect x="17.0" y="5.3" width="1.0" height="1.0" fill="#000"/><rect x="5.1" y="8.5" width="0.8" height="0.8" fill="#000"/><rect x="0.1" y="14.4" width="0.9" height="0.9" fill="#000"/><rect x="4.9" y="6.0" width="1.1" height="1.1" fill="#000"/><rect x="8.6" y="12.7" width="1.2" height="1.2" fill="#000"/><rect x="7.2" y="18.6" width="1.4" height="1.4" fill="#000"/><rect x="1.1" y="16.6" width="1.4" height="1.4" fill="#000"/><rect x="15.7" y="2.8" width="1.4" height="1.4" fill="#000"/><rect x="12.7" y="0.3" width="0.7" height="0.7" fill="#000"/><rect x="19.0" y="13.1" width="0.9" height="0.9" fill="#000"/><rect x="2.0" y="2.9" width="0.9" height="0.9" fill="#000"/><rect x="15.5" y="6.9" width="0.8" height="0.8" fill="#000"/><rect x="18.1" y="15.8" width="0.8" height="0.8" fill="#000"/><rect x="17.8" y="12.2" width="1.3" height="1.3" fill="#000"/><rect x="13.4" y="17.9" width="1.3" height="1.3" fill="#000"/><rect x="16.8" y="3.9" width="1.3" height="1.3" fill="#000"/><rect x="10.6" y="14.8" width="1.1" height="1.1" fill="#000"/><rect x="17.7" y="11.1" width="0.9" height="0.9" fill="#000"/><rect x="4.7" y="2.8" width="1.1" height="1.1" fill="#000"/><rect x="1.2" y="9.3" width="0.8" height="0.8" fill="#000"/><rect x="9.8" y="10.0" width="1.1" height="1.1" fill="#000"/><rect x="17.3" y="0.1" width="1.4" height="1.4" fill="#000"/><rect x="9.4" y="11.3" width="1.2" height="1.2" fill="#000"/><rect x="16.8" y="7.5" width="1.0" height="1.0" fill="#000"/><rect x="19.2" y="1.5" width="1.2" height="1.2" fill="#000"/><rect x="12.7" y="0.6" width="1.2" height="1.2" fill="#000"/><rect x="13.7" y="18.6" width="1.0" height="1.0" fill="#000"/><rect x="19.6" y="10.2" width="1.1" height="1.1" fill="#000"/><rect x="18.0" y="0.7" width="1.3" height="1.3" fill="#000"/><rect x="12.5" y="6.8" width="1.4" height="1.4" fill="#000"/><rect x="7.3" y="9.5" width="1.1" height="1.1" fill="#000"/><rect x="15.4" y="4.2" width="1.0" height="1.0" fill="#000"/><rect x="8.4" y="11.1" width="1.4" height="1.4" fill="#000"/><rect x="5.9" y="16.6" width="1.0" height="1.0" fill="#000"/><rect x="10.1" y="5.4" width="1.1" height="1.1" fill="#000"/><rect x="19.5" y="13.1" width="1.3" height="1.3" fill="#000"/><rect x="6.6" y="6.3" width="0.9" height="0.9" fill="#000"/><rect x="11.7" y="12.7" width="1.3" height="1.3" fill="#000"/><rect x="0.8" y="14.5" width="1.4" height="1.4" fill="#000"/><rect x="10.9" y="1.0" width="0.9" height="0.9" fill="#000"/><rect x="0.1" y="3.8" width="1.4" height="1.4" fill="#000"/><rect x="12.2" y="13.2" width="1.3" height="1.3" fill="#000"/><rect x="18.2" y="12.2" width="1.2" height="1.2" fill="#000"/><rect x="12.5" y="13.9" width="1.2" height="1.2" fill="#000"/><rect x="13.6" y="4.3" width="1.2" height="1.2" fill="#000"/><rect x="9.2" y="15.3" width="0.8" height="0.8" fill="#000"/><rect x="3.6" y="0.7" width="1.3" height="1.3" fill="#000"/><rect x="18.3" y="13.1" width="1.0" height="1.0" fill="#000"/><rect x="16.5" y="15.7" width="1.1" height="1.1" fill="#000"/><rect x="5.2" y="6.0" width="1.0" height="1.0" fill="#000"/><rect x="6.4" y="8.6" width="1.2" height="1.2" fill="#000"/><rect x="18.7" y="1.1" width="1.2" height="1.2" fill="#000"/><rect x="0.8" y="2.4" width="1.3" height="1.3" fill="#000"/><rect x="11.5" y="18.4" width="1.1" height="1.1" fill="#000"/><rect x="0.3" y="7.7" width="1.2" height="1.2" fill="#000"/><rect x="18.8" y="19.6" width="1.1" height="1.1" fill="#000"/><rect x="8.2" y="2.0" width="1.2" height="1.2" fill="#000"/><rect x="4.2" y="3.0" width="0.7" height="0.7" fill="#000"/><rect x="0.1" y="13.7" width="0.8" height="0.8" fill="#000"/><rect x="19.3" y="1.8" width="1.4" height="1.4" fill="#000"/><rect x="2.6" y="0.4" width="1.3" height="1.3" fill="#000"/><rect x="4.8" y="14.7" width="0.8" height="0.8" fill="#000"/><rect x="1.0" y="15.5" width="1.3" height="1.3" fill="#000"/><rect x="17.1" y="14.6" width="0.8" height="0.8" fill="#000"/><rect x="12.6" y="14.2" width="1.1" height="1.1" fill="#000"/><rect x="18.6" y="5.1" width="1.5" height="1.5" fill="#000"/><rect x="14.3" y="0.2" width="0.7" height="0.7" fill="#000"/><rect x="13.0" y="16.3" width="0.8" height="0.8" fill="#000"/><rect x="6.2" y="14.6" width="0.8" height="0.8" fill="#000"/><rect x="17.2" y="9.7" width="0.7" height="0.7" fill="#000"/><rect x="7.4" y="11.5" width="1.1" height="1.1" fill="#000"/><rect x="13.5" y="2.9" width="1.3" height="1.3" fill="#000"/><rect x="7.3" y="12.9" width="1.2" height="1.2" fill="#000"/><rect x="8.4" y="7.7" width="1.3" height="1.3" fill="#000"/><rect x="18.9" y="15.7" width="1.2" height="1.2" fill="#000"/><rect x="5.8" y="1.2" width="1.5" height="1.5" fill="#000"/><rect x="14.1" y="16.5" width="1.0" height="1.0" fill="#000"/><rect x="12.1" y="19.5" width="1.4" height="1.4" fill="#000"/><rect x="12.0" y="6.2" width="1.0" height="1.0" fill="#000"/><rect x="17.8" y="7.5" width="1.2" height="1.2" fill="#000"/><rect x="12.0" y="17.9" width="1.3" height="1.3" fill="#000"/><rect x="5.7" y="0.0" width="0.9" height="0.9" fill="#000"/><rect x="8.5" y="11.7" width="1.4" height="1.4" fill="#000"/><rect x="17.7" y="0.8" width="1.4" height="1.4" fill="#000"/><rect x="16.2" y="17.3" width="1.2" height="1.2" fill="#000"/><rect x="5.5" y="17.0" width="1.3" height="1.3" fill="#000"/><rect x="13.7" y="18.3" width="1.0" height="1.0" fill="#000"/><rect x="1.7" y="11.1" width="1.3" height="1.3" fill="#000"/><rect x="4.0" y="15.0" width="1.4" height="1.4" fill="#000"/><rect x="4.7" y="12.1" width="1.2" height="1.2" fill="#000"/><rect x="9.3" y="4.1" width="0.9" height="0.9" fill="#000"/><rect x="15.0" y="15.8" width="1.1" height="1.1" fill="#000"/><rect x="1.8" y="16.1" width="1.3" height="1.3" fill="#000"/><rect x="4.7" y="11.6" width="1.4" height="1.4" fill="#000"/><rect x="17.7" y="10.4" width="1.1" height="1.1" fill="#000"/><rect x="11.8" y="3.8" width="0.9" height="0.9" fill="#000"/><rect x="3.6" y="14.0" width="1.0" height="1.0" fill="#000"/><rect x="11.3" y="8.0" width="1.1" height="1.1" fill="#000"/><rect x="3.0" y="0.9" width="1.5" height="1.5" fill="#000"/><rect x="7.5" y="2.1" width="1.2" height="1.2" fill="#000"/><rect x="15.7" y="3.1" width="1.2" height="1.2" fill="#000"/><rect x="6.9" y="10.4" width="0.7" height="0.7" fill="#000"/></pattern>
<pattern id="hatch2" width="18" height="18" patternUnits="userSpaceOnUse"><rect width="18" height="18" fill="#000"/><path d="M2 6L4 2M4 6.500L6 2.500M9 9L11 5M11 9.500L13 5.500M12 17L14 13M14 17.500L16 13.500M3 15L4.500 12M5 15.500L6.500 12.500M13 3L14 1M15 3.500L16 1.500" stroke="#fff" stroke-width="0.7"/></pattern>
<pattern id="hatch" width="16" height="16" patternUnits="userSpaceOnUse"><rect width="16" height="16" fill="#000"/><path d="M1 7L5 1M6 8L9 3M10 15L14 9M2 15L5 10M11 6L14 1M7 14L8.500 11" stroke="#fff" stroke-width="0.9"/></pattern>
<pattern id="band" width="24" height="24" patternUnits="userSpaceOnUse"><rect width="24" height="24" fill="#000"/><rect x="0.8" y="23.8" width="1.2" height="1.2" fill="#fff"/><rect x="11.7" y="13.6" width="0.8" height="0.8" fill="#fff"/><rect x="18.7" y="10.2" width="1.3" height="1.3" fill="#fff"/><rect x="18.4" y="19.7" width="1.3" height="1.3" fill="#fff"/><rect x="6.1" y="0.9" width="0.7" height="0.7" fill="#fff"/><rect x="4.3" y="2.0" width="0.6" height="0.6" fill="#fff"/><rect x="13.4" y="20.9" width="0.9" height="0.9" fill="#fff"/><rect x="22.7" y="21.8" width="0.6" height="0.6" fill="#fff"/><rect x="14.4" y="9.5" width="0.7" height="0.7" fill="#fff"/><rect x="23.0" y="6.2" width="1.0" height="1.0" fill="#fff"/><rect x="15.4" y="23.0" width="1.1" height="1.1" fill="#fff"/><rect x="9.4" y="10.8" width="0.7" height="0.7" fill="#fff"/><rect x="23.2" y="23.8" width="0.8" height="0.8" fill="#fff"/><rect x="0.9" y="6.1" width="0.8" height="0.8" fill="#fff"/><rect x="21.7" y="21.7" width="1.2" height="1.2" fill="#fff"/><rect x="1.1" y="18.9" width="1.1" height="1.1" fill="#fff"/><rect x="15.5" y="23.7" width="0.6" height="0.6" fill="#fff"/><rect x="3.5" y="18.1" width="1.3" height="1.3" fill="#fff"/><rect x="16.2" y="7.2" width="1.0" height="1.0" fill="#fff"/><rect x="18.2" y="2.5" width="0.8" height="0.8" fill="#fff"/><rect x="6.2" y="3.0" width="0.9" height="0.9" fill="#fff"/><rect x="4.0" y="5.7" width="0.7" height="0.7" fill="#fff"/><rect x="16.3" y="0.3" width="1.1" height="1.1" fill="#fff"/><rect x="4.7" y="0.9" width="1.2" height="1.2" fill="#fff"/><rect x="5.3" y="22.4" width="1.2" height="1.2" fill="#fff"/><rect x="21.3" y="3.4" width="0.9" height="0.9" fill="#fff"/><rect x="2.3" y="22.3" width="1.2" height="1.2" fill="#fff"/><rect x="15.1" y="10.9" width="0.8" height="0.8" fill="#fff"/><rect x="19.8" y="11.5" width="1.0" height="1.0" fill="#fff"/><rect x="3.4" y="5.3" width="0.6" height="0.6" fill="#fff"/><rect x="17.1" y="13.3" width="0.7" height="0.7" fill="#fff"/><rect x="20.9" y="6.4" width="0.9" height="0.9" fill="#fff"/><rect x="3.7" y="6.5" width="1.2" height="1.2" fill="#fff"/><rect x="8.0" y="4.0" width="0.9" height="0.9" fill="#fff"/><rect x="7.6" y="21.7" width="0.7" height="0.7" fill="#fff"/><rect x="23.5" y="1.4" width="1.2" height="1.2" fill="#fff"/><rect x="16.0" y="5.1" width="0.9" height="0.9" fill="#fff"/><rect x="6.9" y="6.2" width="0.7" height="0.7" fill="#fff"/><rect x="8.7" y="23.8" width="1.3" height="1.3" fill="#fff"/><rect x="22.2" y="2.3" width="0.8" height="0.8" fill="#fff"/><rect x="21.5" y="1.4" width="1.1" height="1.1" fill="#fff"/><rect x="7.0" y="23.5" width="0.6" height="0.6" fill="#fff"/><rect x="19.4" y="8.2" width="0.7" height="0.7" fill="#fff"/><rect x="0.0" y="20.0" width="1.0" height="1.0" fill="#fff"/><rect x="4.5" y="10.4" width="1.2" height="1.2" fill="#fff"/><rect x="5.2" y="13.7" width="0.7" height="0.7" fill="#fff"/><rect x="4.3" y="18.5" width="1.1" height="1.1" fill="#fff"/><rect x="4.7" y="1.9" width="0.7" height="0.7" fill="#fff"/><rect x="14.6" y="11.9" width="0.8" height="0.8" fill="#fff"/><rect x="4.9" y="14.7" width="1.1" height="1.1" fill="#fff"/><rect x="19.5" y="14.0" width="0.7" height="0.7" fill="#fff"/><rect x="1.6" y="17.6" width="0.9" height="0.9" fill="#fff"/><rect x="17.3" y="1.3" width="1.2" height="1.2" fill="#fff"/><rect x="8.0" y="20.2" width="1.2" height="1.2" fill="#fff"/><rect x="11.8" y="0.4" width="1.2" height="1.2" fill="#fff"/><rect x="11.4" y="20.9" width="0.8" height="0.8" fill="#fff"/><rect x="4.5" y="20.0" width="0.9" height="0.9" fill="#fff"/><rect x="3.9" y="8.9" width="1.0" height="1.0" fill="#fff"/><rect x="0.1" y="12.5" width="0.9" height="0.9" fill="#fff"/><rect x="12.4" y="2.9" width="1.1" height="1.1" fill="#fff"/><rect x="19.6" y="20.8" width="0.8" height="0.8" fill="#fff"/><rect x="17.1" y="9.2" width="1.1" height="1.1" fill="#fff"/><rect x="1.5" y="20.9" width="1.3" height="1.3" fill="#fff"/><rect x="11.9" y="12.3" width="1.0" height="1.0" fill="#fff"/><rect x="12.9" y="0.5" width="1.3" height="1.3" fill="#fff"/><rect x="5.4" y="4.4" width="0.7" height="0.7" fill="#fff"/><rect x="6.0" y="19.6" width="0.6" height="0.6" fill="#fff"/><rect x="2.3" y="16.8" width="0.7" height="0.7" fill="#fff"/><rect x="0.4" y="14.4" width="1.0" height="1.0" fill="#fff"/><rect x="12.5" y="16.9" width="0.7" height="0.7" fill="#fff"/><rect x="20.9" y="17.2" width="0.6" height="0.6" fill="#fff"/><rect x="3.0" y="11.8" width="1.0" height="1.0" fill="#fff"/><rect x="6.7" y="2.9" width="0.9" height="0.9" fill="#fff"/><rect x="3.3" y="14.2" width="1.2" height="1.2" fill="#fff"/><rect x="3.5" y="13.7" width="1.1" height="1.1" fill="#fff"/><rect x="3.9" y="19.8" width="1.3" height="1.3" fill="#fff"/><rect x="9.3" y="10.1" width="1.2" height="1.2" fill="#fff"/><rect x="12.6" y="9.5" width="1.3" height="1.3" fill="#fff"/><rect x="18.6" y="8.1" width="0.8" height="0.8" fill="#fff"/><rect x="8.0" y="10.5" width="1.3" height="1.3" fill="#fff"/><rect x="19.3" y="21.9" width="1.2" height="1.2" fill="#fff"/><rect x="20.3" y="1.3" width="1.0" height="1.0" fill="#fff"/><rect x="23.0" y="22.4" width="0.8" height="0.8" fill="#fff"/><rect x="10.1" y="15.2" width="0.9" height="0.9" fill="#fff"/><rect x="12.7" y="1.7" width="0.9" height="0.9" fill="#fff"/><rect x="12.1" y="0.5" width="0.7" height="0.7" fill="#fff"/><rect x="23.3" y="18.6" width="1.3" height="1.3" fill="#fff"/><rect x="15.2" y="19.4" width="1.2" height="1.2" fill="#fff"/><rect x="21.2" y="0.8" width="1.0" height="1.0" fill="#fff"/><rect x="6.4" y="16.3" width="0.8" height="0.8" fill="#fff"/><rect x="13.0" y="22.2" width="1.0" height="1.0" fill="#fff"/><rect x="6.0" y="12.5" width="0.9" height="0.9" fill="#fff"/><rect x="22.8" y="6.9" width="0.8" height="0.8" fill="#fff"/><rect x="15.5" y="2.9" width="1.0" height="1.0" fill="#fff"/><rect x="22.9" y="12.3" width="0.8" height="0.8" fill="#fff"/><path d="M2 10L9 3M4 14L12 6M14 22L22 14M13 18L19 12M16 8L22 2M1 22L6 17" stroke="#fff" stroke-width="0.7"/></pattern>
</defs>
<g transform="matrix(1.5040 -0.4512 0 1 965.6 273.3)">
<rect x="0.00" y="0.00" width="100.00" height="150.00" fill="#fff" stroke="#000" stroke-width="0.6" vector-effect="non-scaling-stroke"/>
<rect x="1.00" y="3.00" width="99.00" height="33.00" fill="url(#band)" stroke="none" stroke-width="0.6" vector-effect="non-scaling-stroke"/>
<rect x="14.50" y="0.00" width="3.00" height="40.00" fill="#fff" stroke="#000" stroke-width="0.5" vector-effect="non-scaling-stroke"/>
<rect x="76.00" y="0.00" width="3.50" height="150.00" fill="#fff" stroke="#000" stroke-width="0.5" vector-effect="non-scaling-stroke"/>
<rect x="99.00" y="0.00" width="1.00" height="150.00" fill="#fff" stroke="none" stroke-width="0.6" vector-effect="non-scaling-stroke"/>
<rect x="0.00" y="36.00" width="100.00" height="5.00" fill="#fff" stroke="#000" stroke-width="0.5" vector-effect="non-scaling-stroke"/>
<rect x="0.00" y="41.00" width="76.00" height="109.00" fill="#000" stroke="none" stroke-width="0.6" vector-effect="non-scaling-stroke"/>
<rect x="79.50" y="41.00" width="19.50" height="109.00" fill="url(#spk2)" stroke="none" stroke-width="0.6" vector-effect="non-scaling-stroke"/>
<rect x="21.00" y="44.00" width="48.00" height="106.00" fill="#000" stroke="#aaa" stroke-width="0.8" vector-effect="non-scaling-stroke"/>
<rect x="24.00" y="47.00" width="43.00" height="103.00" fill="none" stroke="#888" stroke-width="0.6" vector-effect="non-scaling-stroke"/>
<rect x="28.60" y="51.00" width="36.40" height="99.00" fill="#fff" stroke="#777" stroke-width="1" vector-effect="non-scaling-stroke"/>
<path d="M34 58L50 58" stroke="#000" stroke-width="1.6" stroke-dasharray="1.5 0.8" vector-effect="non-scaling-stroke"/><path d="M50 58l2.5 -2l2.5 2l-2.5 2Z" fill="none" stroke="#000" stroke-width="0.7" vector-effect="non-scaling-stroke"/>
<path d="M89 49q4 1 4.5 8q0 8 -3.500 12q-3.500 1 -5.500 -4q-1.500 -6 0 -11q1.500 -5 4.500 -5Z" fill="#fff"/>
<path d="M87 54l3 2M86 59l5 1M87 64l3 -1" stroke="#bbb" stroke-width="0.6" vector-effect="non-scaling-stroke"/>
<rect x="0.00" y="143.00" width="100.00" height="7.00" fill="#fff" stroke="#000" stroke-width="0.5" vector-effect="non-scaling-stroke"/>
<rect x="36.00" y="128.00" width="3.00" height="22.00" fill="#fff" stroke="#000" stroke-width="0.4" vector-effect="non-scaling-stroke"/>
</g>
<g transform="translate(1007,277) rotate(-16.7) skewX(-20) scale(1.3)" stroke="#fff" stroke-width="1.25" fill="none" stroke-linecap="round"><path d="M-7 -6L-4 -4"/><path d="M-8 -2L-3 -2L-7 3"/><path d="M-5 0L-5 8"/><path d="M-4 2L-2 4"/><path d="M0 -6L7 -6"/><path d="M1 -3L6 -3L6 0L1 0Z"/><path d="M0 2L7 2L7 8L0 8Z"/><path d="M3.5 2L3.5 8"/><path d="M0 5L7 5"/></g>
<g transform="translate(1036.5,268) rotate(-16.7) skewX(-20) scale(1.3)" stroke="#fff" stroke-width="1.25" fill="none" stroke-linecap="round"><path d="M-7 -6L-4 -4"/><path d="M-8 -2L-3 -2L-7 3"/><path d="M-5 0L-5 8"/><path d="M-4 2L-2 4"/><path d="M1 -6L6 -6L6 -2L0 -2"/><path d="M-1 1L8 1"/><path d="M3.5 -2L3.5 8L2 7"/><path d="M0 3L2 5"/><path d="M7 3L5 5"/><path d="M0 8L2.5 5.5"/><path d="M5 5.5L8 8"/></g>
<g transform="translate(1069,258) rotate(-16.7) skewX(-20) scale(1.3)" stroke="#fff" stroke-width="1.25" fill="none" stroke-linecap="round"><path d="M-6 -5L6 -5"/><path d="M-4 -2L4 -2"/><path d="M-7 1L7 1"/><path d="M0 -8L-1 1L-6 6"/><path d="M-3 4L6 4"/><path d="M3 2L3 9L1 8"/><path d="M-1 6L0 7.5"/></g>
<g transform="matrix(0.6815 0.5828 0 1 1116.0 228.2)">
<rect x="0.00" y="0.00" width="100.00" height="150.00" fill="#fff" stroke="#000" stroke-width="0.6" vector-effect="non-scaling-stroke"/>
<rect x="3.00" y="2.00" width="27.00" height="38.00" fill="#000" stroke="none" stroke-width="0.6" vector-effect="non-scaling-stroke"/>
<rect x="3.00" y="44.00" width="27.00" height="106.00" fill="#000" stroke="none" stroke-width="0.6" vector-effect="non-scaling-stroke"/>
<rect x="34.00" y="3.00" width="30.00" height="41.00" fill="url(#spk2)" stroke="none" stroke-width="0.6" vector-effect="non-scaling-stroke"/>
<rect x="34.00" y="48.00" width="6.00" height="102.00" fill="#000" stroke="none" stroke-width="0.6" vector-effect="non-scaling-stroke"/>
<rect x="67.00" y="3.00" width="30.00" height="37.00" fill="#000" stroke="none" stroke-width="0.6" vector-effect="non-scaling-stroke"/>
<line x1="0.00" y1="42.00" x2="100.00" y2="42.00" stroke="#000" stroke-width="0.5" vector-effect="non-scaling-stroke"/>
<rect x="36.00" y="47.00" width="64.00" height="113.00" fill="#fff" stroke="none" stroke-width="0.6" vector-effect="non-scaling-stroke"/>
<line x1="36.00" y1="47.00" x2="36.00" y2="150.00" stroke="#000" stroke-width="0.7" vector-effect="non-scaling-stroke"/>
</g>
<g transform="matrix(0.7250 0.6200 0 1 956.5 271.0)">
<rect x="0.00" y="0.00" width="100.00" height="42.00" fill="#fff" stroke="#000" stroke-width="0.6" vector-effect="non-scaling-stroke"/>
<rect x="5.00" y="5.00" width="27.00" height="32.00" fill="#000" stroke="none" stroke-width="0.6" vector-effect="non-scaling-stroke"/>
<rect x="37.00" y="4.00" width="27.00" height="52.00" fill="url(#spk2)" stroke="none" stroke-width="0.6" vector-effect="non-scaling-stroke"/>
<rect x="69.00" y="5.00" width="26.00" height="32.00" fill="#000" stroke="none" stroke-width="0.6" vector-effect="non-scaling-stroke"/>
<rect x="35.00" y="42.00" width="30.00" height="16.00" fill="#fff" stroke="#000" stroke-width="0.6" vector-effect="non-scaling-stroke"/>
<rect x="37.00" y="4.00" width="27.00" height="52.00" fill="url(#spk2)" stroke="none" stroke-width="0.6" vector-effect="non-scaling-stroke"/>
<rect x="0.00" y="42.00" width="35.00" height="112.00" fill="#fff" stroke="#000" stroke-width="0.6" vector-effect="non-scaling-stroke"/>
<rect x="5.00" y="46.00" width="26.00" height="105.50" fill="#000" stroke="none" stroke-width="0.6" vector-effect="non-scaling-stroke"/>
<line x1="2.00" y1="42.00" x2="2.00" y2="154.00" stroke="#999" stroke-width="0.8" vector-effect="non-scaling-stroke"/>
<rect x="62.00" y="42.00" width="38.00" height="112.00" fill="#fff" stroke="#000" stroke-width="0.6" vector-effect="non-scaling-stroke"/>
<rect x="66.00" y="46.00" width="28.00" height="105.50" fill="#000" stroke="none" stroke-width="0.6" vector-effect="non-scaling-stroke"/>
<line x1="64.00" y1="42.00" x2="64.00" y2="154.00" stroke="#999" stroke-width="0.8" vector-effect="non-scaling-stroke"/>
<line x1="0.00" y1="42.00" x2="35.00" y2="42.00" stroke="#000" stroke-width="0.7" vector-effect="non-scaling-stroke"/>
<line x1="62.00" y1="42.00" x2="100.00" y2="42.00" stroke="#000" stroke-width="0.7" vector-effect="non-scaling-stroke"/>
</g>
<g transform="matrix(1.6000 -0.4800 0 1 1029.0 333.0)">
<rect x="0.00" y="0.00" width="100.00" height="41.00" fill="#fff" stroke="#000" stroke-width="0.6" vector-effect="non-scaling-stroke"/>
<rect x="4.00" y="6.00" width="18.00" height="29.00" fill="url(#spk)" stroke="#555" stroke-width="0.5" vector-effect="non-scaling-stroke"/>
<rect x="27.00" y="6.00" width="45.00" height="29.00" fill="url(#spk2)" stroke="#555" stroke-width="0.5" vector-effect="non-scaling-stroke"/>
<rect x="78.00" y="5.00" width="19.00" height="30.00" fill="url(#noise)" stroke="#555" stroke-width="0.5" vector-effect="non-scaling-stroke"/>
<line x1="25.00" y1="0.00" x2="25.00" y2="41.00" stroke="#000" stroke-width="0.5" vector-effect="non-scaling-stroke"/>
<line x1="74.00" y1="0.00" x2="74.00" y2="41.00" stroke="#000" stroke-width="0.5" vector-effect="non-scaling-stroke"/>
<rect x="0.00" y="41.00" width="25.50" height="113.00" fill="#fff" stroke="#000" stroke-width="0.6" vector-effect="non-scaling-stroke"/>
<rect x="5.00" y="46.00" width="16.50" height="99.00" fill="url(#spk)" stroke="#555" stroke-width="0.5" vector-effect="non-scaling-stroke"/>
<line x1="3.20" y1="41.00" x2="3.20" y2="154.00" stroke="#000" stroke-width="0.4" vector-effect="non-scaling-stroke"/>
<line x1="23.20" y1="41.00" x2="23.20" y2="148.00" stroke="#000" stroke-width="0.4" vector-effect="non-scaling-stroke"/>
<line x1="3.20" y1="148.00" x2="25.50" y2="148.00" stroke="#000" stroke-width="0.4" vector-effect="non-scaling-stroke"/>
<rect x="73.50" y="41.00" width="26.50" height="113.00" fill="#fff" stroke="#000" stroke-width="0.6" vector-effect="non-scaling-stroke"/>
<rect x="77.50" y="46.00" width="18.00" height="99.00" fill="url(#spk)" stroke="#555" stroke-width="0.5" vector-effect="non-scaling-stroke"/>
<line x1="76.00" y1="41.00" x2="76.00" y2="154.00" stroke="#000" stroke-width="0.4" vector-effect="non-scaling-stroke"/>
<line x1="97.50" y1="41.00" x2="97.50" y2="148.00" stroke="#000" stroke-width="0.4" vector-effect="non-scaling-stroke"/>
<line x1="76.00" y1="148.00" x2="100.00" y2="148.00" stroke="#000" stroke-width="0.4" vector-effect="non-scaling-stroke"/>
</g>
<polygon points="956.5,271.0 1116.5,223.0 1116.0,228.2 965.6,273.3" fill="#fff" stroke="#000" stroke-width="0.9" />
<polygon points="1116.5,223.0 1189.0,285.0 1179.9,282.7 1116.0,228.2" fill="#fff" stroke="#000" stroke-width="0.9" />
<polygon points="956.5,271.0 1029.0,333.0 1029.5,327.8 965.6,273.3" fill="#fff" stroke="#000" stroke-width="0.9" />
<polygon points="1029.0,333.0 1189.0,285.0 1179.9,282.7 1029.5,327.8" fill="#fff" stroke="#000" stroke-width="0.9" />
<polygon points="956.5,271.0 1116.5,223.0 1189.0,285.0 1029.0,333.0" fill="none" stroke="#000" stroke-width="1.4" />
<g transform="matrix(0.9500 -0.2783 0.7444 0.6444 463.3 699.1)">
<rect x="0.00" y="0.00" width="60.00" height="90.00" fill="#fff" stroke="#000" stroke-width="0.9" vector-effect="non-scaling-stroke"/>
<rect x="11.00" y="3.00" width="39.00" height="12.00" fill="url(#noise3)" stroke="none" stroke-width="0.6" vector-effect="non-scaling-stroke"/>
<rect x="4.00" y="3.00" width="4.00" height="12.00" fill="url(#noise)" stroke="none" stroke-width="0.6" vector-effect="non-scaling-stroke"/>
<line x1="9.50" y1="0.00" x2="9.50" y2="17.00" stroke="#000" stroke-width="0.6" vector-effect="non-scaling-stroke"/>
<rect x="9.00" y="17.00" width="46.00" height="73.00" fill="#000" stroke="none" stroke-width="0.6" vector-effect="non-scaling-stroke"/>
<rect x="0.00" y="82.00" width="55.00" height="8.00" fill="#000" stroke="none" stroke-width="0.6" vector-effect="non-scaling-stroke"/>
<rect x="0.60" y="24.00" width="45.40" height="58.00" fill="#fff" stroke="none" stroke-width="0.6" vector-effect="non-scaling-stroke"/>
<line x1="56.50" y1="17.00" x2="56.50" y2="90.00" stroke="#777" stroke-width="0.7" vector-effect="non-scaling-stroke"/>
<line x1="58.30" y1="17.00" x2="58.30" y2="90.00" stroke="#999" stroke-width="0.6" vector-effect="non-scaling-stroke"/>
<path d="M30 38L30 62" stroke="#000" stroke-width="1.800" vector-effect="non-scaling-stroke"/><path d="M27 47L33 50M28 60L33 60" stroke="#000" stroke-width="1" vector-effect="non-scaling-stroke"/><path d="M30 33L27.500 38H32.500Z" fill="#fff" stroke="#000" stroke-width="1.200" vector-effect="non-scaling-stroke"/>
</g>
<g transform="matrix(0.9500 -0.2783 0.7444 0.6444 463.3 699.1)">
<text x="6.0" y="103.5" font-size="14" fill="#303030" stroke="#fff" stroke-width="0.22" letter-spacing="0.35" font-family="Liberation Sans,sans-serif">sheet-1</text>
</g>
<g transform="matrix(0.9500 -0.2783 0.7444 0.6444 463.3 699.1)">
<text x="-81" y="51.5" font-size="14" fill="#303030" stroke="#fff" stroke-width="0.22" letter-spacing="0.5" font-family="Liberation Sans,sans-serif">17mm</text>
<path d="M-46 47L-30 45.5L-24 44.5" stroke="#555" stroke-width="0.9" fill="none" vector-effect="non-scaling-stroke"/>
</g>
<g transform="matrix(0.9500 -0.2783 0.7444 0.6444 543.5 674.8)">
<rect x="0.00" y="0.00" width="60.00" height="90.00" fill="#fff" stroke="#000" stroke-width="0.9" vector-effect="non-scaling-stroke"/>
<rect x="8.00" y="5.00" width="29.00" height="81.00" fill="url(#hatch2)" stroke="none" stroke-width="0.6" vector-effect="non-scaling-stroke"/>
<ellipse cx="22.5" cy="73" rx="9" ry="7.5" fill="#fff" stroke="#000" stroke-width="0.6" vector-effect="non-scaling-stroke"/>
<line x1="40.00" y1="0.00" x2="40.00" y2="90.00" stroke="#000" stroke-width="0.6" vector-effect="non-scaling-stroke"/>
<line x1="44.50" y1="0.00" x2="44.50" y2="90.00" stroke="#000" stroke-width="0.6" vector-effect="non-scaling-stroke"/>
<line x1="49.00" y1="0.00" x2="49.00" y2="90.00" stroke="#000" stroke-width="0.6" vector-effect="non-scaling-stroke"/>
<line x1="53.50" y1="0.00" x2="53.50" y2="90.00" stroke="#000" stroke-width="0.6" vector-effect="non-scaling-stroke"/>
<rect x="56.00" y="1.00" width="2.50" height="88.00" fill="url(#noise3)" stroke="none" stroke-width="0.6" vector-effect="non-scaling-stroke"/>
<rect x="40.00" y="2.00" width="17.00" height="4.00" fill="#fff" stroke="#000" stroke-width="0.5" vector-effect="non-scaling-stroke"/>
<path d="M44 40L44 56M47 42L47 56M50 44L50 56" stroke="#000" stroke-width="1.6" vector-effect="non-scaling-stroke"/>
</g>
<g transform="matrix(0.9500 -0.2783 0.7444 0.6444 543.5 674.8)">
<text x="6.0" y="103.5" font-size="14" fill="#303030" stroke="#fff" stroke-width="0.22" letter-spacing="0.35" font-family="Liberation Sans,sans-serif">sheet-2</text>
</g>
<g transform="matrix(0.9500 -0.2783 0.7444 0.6444 623.8 650.4)">
<rect x="0.00" y="0.00" width="60.00" height="90.00" fill="#fff" stroke="#000" stroke-width="0.9" vector-effect="non-scaling-stroke"/>
<rect x="8.00" y="3.00" width="30.00" height="81.00" fill="url(#hatch2)" stroke="none" stroke-width="0.6" vector-effect="non-scaling-stroke"/>
<ellipse cx="23" cy="18" rx="9" ry="7.5" fill="#fff" stroke="#000" stroke-width="0.6" vector-effect="non-scaling-stroke"/>
<line x1="41.00" y1="0.00" x2="41.00" y2="90.00" stroke="#000" stroke-width="0.6" vector-effect="non-scaling-stroke"/>
<line x1="46.00" y1="0.00" x2="46.00" y2="90.00" stroke="#000" stroke-width="0.6" vector-effect="non-scaling-stroke"/>
<line x1="51.00" y1="0.00" x2="51.00" y2="90.00" stroke="#000" stroke-width="0.6" vector-effect="non-scaling-stroke"/>
<rect x="55.50" y="1.00" width="3.00" height="88.00" fill="url(#noise3)" stroke="none" stroke-width="0.6" vector-effect="non-scaling-stroke"/>
<rect x="41.00" y="3.00" width="15.00" height="19.00" fill="#fff" stroke="#000" stroke-width="0.5" vector-effect="non-scaling-stroke"/>
<path d="M44 44L44 58M47 46L47 58M50 48L50 58" stroke="#000" stroke-width="1.6" vector-effect="non-scaling-stroke"/>
</g>
<g transform="matrix(0.9500 -0.2783 0.7444 0.6444 623.8 650.4)">
<text x="6.0" y="103.5" font-size="14" fill="#303030" stroke="#fff" stroke-width="0.22" letter-spacing="0.35" font-family="Liberation Sans,sans-serif">sheet-3</text>
</g>
<g transform="matrix(0.9500 -0.2783 0.7444 0.6444 704.0 626.1)">
<rect x="0.00" y="0.00" width="60.00" height="90.00" fill="#fff" stroke="#000" stroke-width="0.9" vector-effect="non-scaling-stroke"/>
<rect x="1.00" y="1.00" width="33.00" height="23.00" fill="url(#noise)" stroke="none" stroke-width="0.6" vector-effect="non-scaling-stroke"/>
<text x="37" y="14" font-size="10" fill="#333" font-family="Liberation Sans,sans-serif">mm</text>
<line x1="0.00" y1="25.00" x2="60.00" y2="25.00" stroke="#000" stroke-width="0.7" vector-effect="non-scaling-stroke"/>
<rect x="9.00" y="29.00" width="34.00" height="57.00" fill="url(#hatch)" stroke="none" stroke-width="0.6" vector-effect="non-scaling-stroke"/>
<line x1="47.00" y1="25.00" x2="47.00" y2="90.00" stroke="#000" stroke-width="0.6" vector-effect="non-scaling-stroke"/>
<line x1="52.00" y1="25.00" x2="52.00" y2="90.00" stroke="#000" stroke-width="0.6" vector-effect="non-scaling-stroke"/>
<line x1="56.00" y1="25.00" x2="56.00" y2="90.00" stroke="#000" stroke-width="0.6" vector-effect="non-scaling-stroke"/>
<rect x="50.00" y="3.00" width="8.00" height="83.00" fill="url(#noise)" stroke="none" stroke-width="0.6" vector-effect="non-scaling-stroke"/>
</g>
<g transform="matrix(0.9500 -0.2783 0.7444 0.6444 704.0 626.1)">
<text x="6.0" y="103.5" font-size="14" fill="#303030" stroke="#fff" stroke-width="0.22" letter-spacing="0.35" font-family="Liberation Sans,sans-serif">sheet-4</text>
</g>
<g transform="matrix(0.9500 -0.2783 0.7444 0.6444 784.3 601.7)">
<rect x="0.00" y="0.00" width="60.00" height="90.00" fill="#fff" stroke="#000" stroke-width="0.9" vector-effect="non-scaling-stroke"/>
<rect x="1.00" y="1.00" width="31.00" height="23.00" fill="url(#noise)" stroke="none" stroke-width="0.6" vector-effect="non-scaling-stroke"/>
<rect x="33.00" y="1.00" width="26.00" height="23.00" fill="#fff" stroke="#000" stroke-width="0.5" vector-effect="non-scaling-stroke"/>
<line x1="33.00" y1="5.00" x2="59.00" y2="5.00" stroke="#000" stroke-width="0.5" vector-effect="non-scaling-stroke"/>
<line x1="33.00" y1="9.00" x2="59.00" y2="9.00" stroke="#000" stroke-width="0.5" vector-effect="non-scaling-stroke"/>
<line x1="33.00" y1="13.00" x2="59.00" y2="13.00" stroke="#000" stroke-width="0.5" vector-effect="non-scaling-stroke"/>
<line x1="33.00" y1="17.00" x2="59.00" y2="17.00" stroke="#000" stroke-width="0.5" vector-effect="non-scaling-stroke"/>
<line x1="33.00" y1="21.00" x2="59.00" y2="21.00" stroke="#000" stroke-width="0.5" vector-effect="non-scaling-stroke"/>
<rect x="38.00" y="2.00" width="18.00" height="6.00" fill="url(#noise3)" stroke="none" stroke-width="0.6" vector-effect="non-scaling-stroke"/>
<line x1="0.00" y1="25.00" x2="60.00" y2="25.00" stroke="#000" stroke-width="0.7" vector-effect="non-scaling-stroke"/>
<rect x="9.00" y="27.00" width="29.00" height="58.00" fill="url(#hatch)" stroke="none" stroke-width="0.6" vector-effect="non-scaling-stroke"/>
<line x1="40.00" y1="25.00" x2="40.00" y2="90.00" stroke="#000" stroke-width="0.6" vector-effect="non-scaling-stroke"/>
<line x1="44.00" y1="25.00" x2="44.00" y2="90.00" stroke="#000" stroke-width="0.6" vector-effect="non-scaling-stroke"/>
<line x1="49.00" y1="25.00" x2="49.00" y2="90.00" stroke="#000" stroke-width="0.6" vector-effect="non-scaling-stroke"/>
<line x1="54.00" y1="25.00" x2="54.00" y2="90.00" stroke="#000" stroke-width="0.6" vector-effect="non-scaling-stroke"/>
<rect x="41.00" y="30.00" width="7.00" height="22.00" fill="url(#noise3)" stroke="none" stroke-width="0.6" vector-effect="non-scaling-stroke"/>
<rect x="45.00" y="56.00" width="8.00" height="28.00" fill="url(#noise3)" stroke="none" stroke-width="0.6" vector-effect="non-scaling-stroke"/>
<rect x="50.00" y="28.00" width="8.00" height="32.00" fill="url(#noise3)" stroke="none" stroke-width="0.6" vector-effect="non-scaling-stroke"/>
</g>
<g transform="matrix(0.9500 -0.2783 0.7444 0.6444 784.3 601.7)">
<text x="6.0" y="103.5" font-size="14" fill="#303030" stroke="#fff" stroke-width="0.22" letter-spacing="0.35" font-family="Liberation Sans,sans-serif">sheet-5</text>
</g>
<g transform="matrix(0.9500 -0.2783 0.7444 0.6444 864.5 577.4)">
<rect x="0.00" y="0.00" width="60.00" height="90.00" fill="#fff" stroke="#000" stroke-width="0.9" vector-effect="non-scaling-stroke"/>
<line x1="0.00" y1="17.00" x2="60.00" y2="17.00" stroke="#000" stroke-width="0.7" vector-effect="non-scaling-stroke"/>
<line x1="14.00" y1="0.00" x2="14.00" y2="17.00" stroke="#000" stroke-width="0.7" vector-effect="non-scaling-stroke"/>
<rect x="2.00" y="3.00" width="10.00" height="12.00" fill="url(#noise2)" stroke="none" stroke-width="0.6" vector-effect="non-scaling-stroke"/>
<ellipse cx="28" cy="9" rx="10" ry="7.5" fill="url(#noise3)" stroke="#000" stroke-width="0.8" vector-effect="non-scaling-stroke"/>
<rect x="41.00" y="1.00" width="18.00" height="15.00" fill="url(#noise3)" stroke="none" stroke-width="0.6" vector-effect="non-scaling-stroke"/>
<line x1="42.00" y1="17.00" x2="42.00" y2="90.00" stroke="#000" stroke-width="0.7" vector-effect="non-scaling-stroke"/>
<line x1="50.00" y1="17.00" x2="50.00" y2="90.00" stroke="#000" stroke-width="0.7" vector-effect="non-scaling-stroke"/>
<rect x="43.00" y="20.00" width="6.00" height="26.00" fill="url(#noise3)" stroke="none" stroke-width="0.6" vector-effect="non-scaling-stroke"/>
<rect x="43.00" y="52.00" width="6.00" height="34.00" fill="url(#noise3)" stroke="none" stroke-width="0.6" vector-effect="non-scaling-stroke"/>
<rect x="4.00" y="21.00" width="34.00" height="29.00" fill="#fff" stroke="#000" stroke-width="0.8" vector-effect="non-scaling-stroke"/>
<rect x="7.00" y="24.00" width="28.00" height="23.00" fill="none" stroke="#000" stroke-width="0.7" vector-effect="non-scaling-stroke"/>
<path d="M20 28.0q1.500 3.5 0 7.0t0 7.0" fill="none" stroke="#000" stroke-width="2" vector-effect="non-scaling-stroke"/>
<path d="M18 35L22.5 36.5" stroke="#000" stroke-width="1" vector-effect="non-scaling-stroke"/>
<circle cx="20" cy="26.5" r="1.700" fill="#000"/>
<ellipse cx="25" cy="37" rx="5" ry="5" fill="none" stroke="#000" stroke-width="0.6" vector-effect="non-scaling-stroke"/>
<rect x="4.00" y="54.00" width="34.00" height="32.00" fill="#fff" stroke="#000" stroke-width="0.8" vector-effect="non-scaling-stroke"/>
<rect x="7.00" y="57.00" width="28.00" height="26.00" fill="none" stroke="#000" stroke-width="0.7" vector-effect="non-scaling-stroke"/>
<path d="M20 63.0q1.500 3.5 0 7.0t0 7.0" fill="none" stroke="#000" stroke-width="2" vector-effect="non-scaling-stroke"/>
<path d="M18 70L22.5 71.5" stroke="#000" stroke-width="1" vector-effect="non-scaling-stroke"/>
<circle cx="20" cy="61.5" r="1.700" fill="#000"/>
<line x1="0.00" y1="52.00" x2="42.00" y2="52.00" stroke="#000" stroke-width="0.7" vector-effect="non-scaling-stroke"/>
</g>
<g transform="matrix(0.9500 -0.2783 0.7444 0.6444 864.5 577.4)">
<text x="6.0" y="103.5" font-size="14" fill="#303030" stroke="#fff" stroke-width="0.22" letter-spacing="0.35" font-family="Liberation Sans,sans-serif">sheet-6</text>
</g>
<g transform="matrix(0.9500 -0.2783 0.7444 0.6444 944.8 553.1)">
<rect x="0.00" y="0.00" width="60.00" height="90.00" fill="#fff" stroke="#000" stroke-width="0.9" vector-effect="non-scaling-stroke"/>
<rect x="4.00" y="4.00" width="36.00" height="30.00" fill="#fff" stroke="#000" stroke-width="0.8" vector-effect="non-scaling-stroke"/>
<rect x="7.00" y="7.00" width="30.00" height="24.00" fill="none" stroke="#000" stroke-width="0.7" vector-effect="non-scaling-stroke"/>
<path d="M22 12.0q1.500 3.5 0 7.0t0 7.0" fill="none" stroke="#000" stroke-width="2" vector-effect="non-scaling-stroke"/>
<path d="M20 19L24.5 20.5" stroke="#000" stroke-width="1" vector-effect="non-scaling-stroke"/>
<circle cx="22" cy="10.5" r="1.700" fill="#000"/>
<text x="9" y="11" font-size="7" fill="#000" font-family="Liberation Sans,sans-serif">17mm</text>
<rect x="2.00" y="37.00" width="42.00" height="4.00" fill="url(#noise)" stroke="none" stroke-width="0.6" vector-effect="non-scaling-stroke"/>
<rect x="4.00" y="44.00" width="44.00" height="40.00" fill="#fff" stroke="#000" stroke-width="0.8" vector-effect="non-scaling-stroke"/>
<rect x="44.00" y="44.00" width="4.00" height="40.00" fill="#000" stroke="none" stroke-width="0.6" vector-effect="non-scaling-stroke"/>
<rect x="7.00" y="47.00" width="34.00" height="34.00" fill="none" stroke="#000" stroke-width="0.7" vector-effect="non-scaling-stroke"/>
<path d="M24 58.0q1.500 4.0 0 8.0t0 8.0" fill="none" stroke="#000" stroke-width="2" vector-effect="non-scaling-stroke"/>
<path d="M22 66L26.5 67.5" stroke="#000" stroke-width="1" vector-effect="non-scaling-stroke"/>
<circle cx="24" cy="56.5" r="1.700" fill="#000"/>
<rect x="4.00" y="84.00" width="44.00" height="5.00" fill="url(#noise)" stroke="none" stroke-width="0.6" vector-effect="non-scaling-stroke"/>
<line x1="0.00" y1="42.00" x2="60.00" y2="42.00" stroke="#000" stroke-width="0.5" vector-effect="non-scaling-stroke"/>
</g>
<g transform="matrix(0.9500 -0.2783 0.7444 0.6444 944.8 553.1)">
<text x="6.0" y="103.5" font-size="14" fill="#303030" stroke="#fff" stroke-width="0.22" letter-spacing="0.35" font-family="Liberation Sans,sans-serif">sheet-7</text>
</g>
<g transform="matrix(0.9500 -0.2783 0.7444 0.6444 1025.0 528.7)">
<rect x="0.00" y="0.00" width="60.00" height="90.00" fill="#fff" stroke="#000" stroke-width="0.9" vector-effect="non-scaling-stroke"/>
<rect x="5.00" y="4.00" width="37.00" height="27.00" fill="#fff" stroke="#000" stroke-width="0.8" vector-effect="non-scaling-stroke"/>
<rect x="8.00" y="7.00" width="31.00" height="21.00" fill="none" stroke="#000" stroke-width="0.7" vector-effect="non-scaling-stroke"/>
<path d="M24 11.0q1.500 3.0 0 6.0t0 6.0" fill="none" stroke="#000" stroke-width="2" vector-effect="non-scaling-stroke"/>
<path d="M22 17L26.5 18.5" stroke="#000" stroke-width="1" vector-effect="non-scaling-stroke"/>
<circle cx="24" cy="9.5" r="1.700" fill="#000"/>
<text x="9" y="10" font-size="7" fill="#000" font-family="Liberation Sans,sans-serif">17mm</text>
<rect x="3.00" y="34.00" width="55.00" height="4.00" fill="url(#noise)" stroke="none" stroke-width="0.6" vector-effect="non-scaling-stroke"/>
<rect x="3.00" y="38.00" width="4.50" height="48.00" fill="#000" stroke="none" stroke-width="0.6" vector-effect="non-scaling-stroke"/>
<rect x="7.50" y="42.00" width="42.50" height="39.00" fill="#fff" stroke="#000" stroke-width="0.8" vector-effect="non-scaling-stroke"/>
<rect x="10.50" y="45.00" width="36.50" height="33.00" fill="none" stroke="#000" stroke-width="0.7" vector-effect="non-scaling-stroke"/>
<path d="M30 54.0q1.500 4.0 0 8.0t0 8.0" fill="none" stroke="#000" stroke-width="2" vector-effect="non-scaling-stroke"/>
<path d="M28 62L32.5 63.5" stroke="#000" stroke-width="1" vector-effect="non-scaling-stroke"/>
<circle cx="30" cy="52.5" r="1.700" fill="#000"/>
<ellipse cx="30" cy="42" rx="4" ry="3" fill="none" stroke="#000" stroke-width="0.6" vector-effect="non-scaling-stroke"/>
<rect x="3.00" y="81.50" width="53.00" height="5.50" fill="#000" stroke="none" stroke-width="0.6" vector-effect="non-scaling-stroke"/>
</g>
<g transform="matrix(0.9500 -0.2783 0.7444 0.6444 1025.0 528.7)">
<text x="6.0" y="103.5" font-size="14" fill="#303030" stroke="#fff" stroke-width="0.22" letter-spacing="0.35" font-family="Liberation Sans,sans-serif">sheet-8</text>
</g>
<g transform="matrix(0.9500 -0.2783 0.7444 0.6444 1105.3 504.4)">
<rect x="0.00" y="0.00" width="60.00" height="90.00" fill="#fff" stroke="#000" stroke-width="0.9" vector-effect="non-scaling-stroke"/>
<text x="13" y="12.5" font-size="12.5" fill="#222" stroke="#fff" stroke-width="0.22" letter-spacing="0.3" font-family="Liberation Sans,sans-serif">17mm</text>
<rect x="1.00" y="57.00" width="49.00" height="33.00" fill="#fff" stroke="#000" stroke-width="0.8" vector-effect="non-scaling-stroke"/>
<rect x="6.00" y="62.00" width="34.00" height="24.00" fill="none" stroke="#000" stroke-width="0.8" vector-effect="non-scaling-stroke"/>
<rect x="1.00" y="25.00" width="42.00" height="32.50" fill="url(#noise)" stroke="none" stroke-width="0.6" vector-effect="non-scaling-stroke"/>
<rect x="4.50" y="28.50" width="35.00" height="25.50" fill="#fff" stroke="#000" stroke-width="0.5" vector-effect="non-scaling-stroke"/>
<rect x="7.00" y="31.00" width="30.00" height="20.50" fill="none" stroke="#000" stroke-width="0.5" vector-effect="non-scaling-stroke"/>
<path d="M19 35.0q1.500 3.0 0 6.0t0 6.0" fill="none" stroke="#000" stroke-width="2" vector-effect="non-scaling-stroke"/>
<path d="M17 41L21.5 42.5" stroke="#000" stroke-width="1" vector-effect="non-scaling-stroke"/>
<circle cx="19" cy="33.5" r="1.700" fill="#000"/>
<ellipse cx="28" cy="40.5" rx="5" ry="5" fill="none" stroke="#000" stroke-width="0.6" vector-effect="non-scaling-stroke"/>
<path d="M24 68.0q1.500 3.0 0 6.0t0 6.0" fill="none" stroke="#000" stroke-width="2" vector-effect="non-scaling-stroke"/>
<path d="M22 74L26.5 75.5" stroke="#000" stroke-width="1" vector-effect="non-scaling-stroke"/>
<circle cx="24" cy="66.5" r="1.700" fill="#000"/>
<text x="44" y="66" font-size="4" font-family="Liberation Sans,sans-serif" fill="#000">5</text>
</g>
<g transform="matrix(0.9500 -0.2783 0.7444 0.6444 1105.3 504.4)">
<text x="6.0" y="103.5" font-size="14" fill="#303030" stroke="#fff" stroke-width="0.22" letter-spacing="0.35" font-family="Liberation Sans,sans-serif">sheet-9</text>
</g>
<g transform="matrix(0.9500 -0.2783 0.7444 0.6444 1185.5 480.0)">
<rect x="0.00" y="0.00" width="60.00" height="90.00" fill="#fff" stroke="#000" stroke-width="0.9" vector-effect="non-scaling-stroke"/>
<text x="13" y="12.5" font-size="12.5" fill="#222" stroke="#fff" stroke-width="0.22" letter-spacing="0.3" font-family="Liberation Sans,sans-serif">17mm</text>
<rect x="1.00" y="57.00" width="49.00" height="33.00" fill="#fff" stroke="#000" stroke-width="0.8" vector-effect="non-scaling-stroke"/>
<rect x="6.00" y="62.00" width="34.00" height="24.00" fill="none" stroke="#000" stroke-width="0.8" vector-effect="non-scaling-stroke"/>
<rect x="1.00" y="25.00" width="42.00" height="32.50" fill="url(#noise)" stroke="none" stroke-width="0.6" vector-effect="non-scaling-stroke"/>
<rect x="4.50" y="28.50" width="35.00" height="25.50" fill="#fff" stroke="#000" stroke-width="0.5" vector-effect="non-scaling-stroke"/>
<rect x="7.00" y="31.00" width="30.00" height="20.50" fill="none" stroke="#000" stroke-width="0.5" vector-effect="non-scaling-stroke"/>
<path d="M19 35.0q1.500 3.0 0 6.0t0 6.0" fill="none" stroke="#000" stroke-width="2" vector-effect="non-scaling-stroke"/>
<path d="M17 41L21.5 42.5" stroke="#000" stroke-width="1" vector-effect="non-scaling-stroke"/>
<circle cx="19" cy="33.5" r="1.700" fill="#000"/>
<ellipse cx="28" cy="40.5" rx="5" ry="5" fill="none" stroke="#000" stroke-width="0.6" vector-effect="non-scaling-stroke"/>
<path d="M24 68.0q1.500 3.0 0 6.0t0 6.0" fill="none" stroke="#000" stroke-width="2" vector-effect="non-scaling-stroke"/>
<path d="M22 74L26.5 75.5" stroke="#000" stroke-width="1" vector-effect="non-scaling-stroke"/>
<circle cx="24" cy="66.5" r="1.700" fill="#000"/>
<text x="44" y="66" font-size="4" font-family="Liberation Sans,sans-serif" fill="#000">5</text>
</g>
<g transform="matrix(0.9500 -0.2783 0.7444 0.6444 1185.5 480.0)">
<text x="6.0" y="103.5" font-size="14" fill="#303030" stroke="#fff" stroke-width="0.22" letter-spacing="0.1" font-family="Liberation Sans,sans-serif">sheet-10</text>
</g>
<g transform="matrix(0.9500 -0.2783 0.7444 0.6444 1265.8 455.7)">
<rect x="0.00" y="0.00" width="60.00" height="90.00" fill="#fff" stroke="#000" stroke-width="0.9" vector-effect="non-scaling-stroke"/>
<text x="13" y="12.5" font-size="12.5" fill="#222" stroke="#fff" stroke-width="0.22" letter-spacing="0.3" font-family="Liberation Sans,sans-serif">17mm</text>
<rect x="38.00" y="9.00" width="20.00" height="4.00" fill="#fff" stroke="#000" stroke-width="0.6" vector-effect="non-scaling-stroke"/>
<line x1="51.00" y1="13.00" x2="51.00" y2="88.00" stroke="#000" stroke-width="0.7" vector-effect="non-scaling-stroke"/>
<line x1="55.00" y1="13.00" x2="55.00" y2="88.00" stroke="#000" stroke-width="0.7" vector-effect="non-scaling-stroke"/>
<rect x="1.00" y="22.00" width="46.00" height="33.00" fill="url(#noise)" stroke="none" stroke-width="0.6" vector-effect="non-scaling-stroke"/>
<rect x="4.50" y="25.50" width="39.00" height="26.50" fill="#fff" stroke="#000" stroke-width="0.5" vector-effect="non-scaling-stroke"/>
<rect x="7.00" y="28.00" width="34.00" height="21.50" fill="none" stroke="#000" stroke-width="0.6" vector-effect="non-scaling-stroke"/>
<rect x="1.00" y="55.00" width="46.00" height="34.00" fill="url(#noise)" stroke="none" stroke-width="0.6" vector-effect="non-scaling-stroke"/>
<rect x="4.50" y="58.00" width="39.00" height="28.00" fill="#fff" stroke="#000" stroke-width="0.5" vector-effect="non-scaling-stroke"/>
<rect x="7.00" y="60.50" width="34.00" height="23.00" fill="none" stroke="#000" stroke-width="0.6" vector-effect="non-scaling-stroke"/>
<path d="M20 32.5q1.500 3.0 0 6.0t0 6.0" fill="none" stroke="#000" stroke-width="2" vector-effect="non-scaling-stroke"/>
<path d="M18 38.5L22.5 40.0" stroke="#000" stroke-width="1" vector-effect="non-scaling-stroke"/>
<circle cx="20" cy="31.0" r="1.700" fill="#000"/>
<ellipse cx="29" cy="36" rx="5" ry="5" fill="none" stroke="#000" stroke-width="0.6" vector-effect="non-scaling-stroke"/>
<path d="M24 66.0q1.500 3.0 0 6.0t0 6.0" fill="none" stroke="#000" stroke-width="2" vector-effect="non-scaling-stroke"/>
<path d="M22 72L26.5 73.5" stroke="#000" stroke-width="1" vector-effect="non-scaling-stroke"/>
<circle cx="24" cy="64.5" r="1.700" fill="#000"/>
</g>
<g transform="matrix(0.9500 -0.2783 0.7444 0.6444 1265.8 455.7)">
<text x="6.0" y="103.5" font-size="14" fill="#303030" stroke="#fff" stroke-width="0.22" letter-spacing="0.1" font-family="Liberation Sans,sans-serif">sheet-11</text>
</g>
<g transform="matrix(0.9500 -0.2783 0.7444 0.6444 1346.0 431.4)">
<rect x="0.00" y="0.00" width="60.00" height="90.00" fill="#fff" stroke="#000" stroke-width="0.9" vector-effect="non-scaling-stroke"/>
<rect x="1.00" y="2.00" width="27.00" height="22.00" fill="url(#noise)" stroke="none" stroke-width="0.6" vector-effect="non-scaling-stroke"/>
<rect x="6.00" y="26.00" width="30.00" height="62.00" fill="#000" stroke="none" stroke-width="0.6" vector-effect="non-scaling-stroke"/>
<line x1="0.00" y1="25.00" x2="36.00" y2="25.00" stroke="#000" stroke-width="0.7" vector-effect="non-scaling-stroke"/>
<path d="M36 44A8 8 0 0 1 52 44Z" fill="#fff" stroke="#000" stroke-width="0.8" vector-effect="non-scaling-stroke"/>
<line x1="36.00" y1="44.00" x2="36.00" y2="88.00" stroke="#000" stroke-width="0.6" vector-effect="non-scaling-stroke"/>
<path d="M34 28Q50 26 56 44Q52 52 57 62Q60 76 50 88L60 88L60 22L34 22Z" fill="url(#noise3)" stroke="#000" stroke-width="0.6" vector-effect="non-scaling-stroke"/>
<ellipse cx="44" cy="16" rx="12" ry="11" fill="url(#noise3)" stroke="#000" stroke-width="0.8" vector-effect="non-scaling-stroke"/>
</g>
<g transform="matrix(0.9500 -0.2783 0.7444 0.6444 1346.0 431.4)">
<text x="6.0" y="103.5" font-size="14" fill="#303030" stroke="#fff" stroke-width="0.22" letter-spacing="0.1" font-family="Liberation Sans,sans-serif">sheet-12</text>
</g>
<g transform="matrix(0.9500 -0.2783 0.7444 0.6444 1426.3 407.0)">
<rect x="0.00" y="0.00" width="60.00" height="90.00" fill="#fff" stroke="#000" stroke-width="0.9" vector-effect="non-scaling-stroke"/>
<text x="10" y="11.5" font-size="12.5" fill="#222" stroke="#fff" stroke-width="0.22" letter-spacing="0.3" font-family="Liberation Sans,sans-serif">17mm</text>
<ellipse cx="12.5" cy="30" rx="11.5" ry="10" fill="url(#noise3)" stroke="#000" stroke-width="0.8" vector-effect="non-scaling-stroke"/>
<rect x="8.00" y="36.00" width="32.00" height="52.00" fill="url(#noise3)" stroke="#000" stroke-width="0.6" vector-effect="non-scaling-stroke"/>
<rect x="33.00" y="21.00" width="19.00" height="63.00" fill="#fff" stroke="#000" stroke-width="0.6" vector-effect="non-scaling-stroke"/>
<rect x="37.00" y="25.00" width="11.00" height="55.00" fill="#fff" stroke="#000" stroke-width="0.5" vector-effect="non-scaling-stroke"/>
<rect x="40.50" y="42.00" width="5.00" height="26.00" fill="url(#noise)" stroke="none" stroke-width="0.6" vector-effect="non-scaling-stroke"/>
<line x1="56.00" y1="4.00" x2="56.00" y2="86.00" stroke="#000" stroke-width="0.7" vector-effect="non-scaling-stroke"/>
</g>
<g transform="matrix(0.9500 -0.2783 0.7444 0.6444 1426.3 407.0)">
<text x="6.0" y="103.5" font-size="14" fill="#303030" stroke="#fff" stroke-width="0.22" letter-spacing="0.1" font-family="Liberation Sans,sans-serif">sheet-13</text>
</g>
<g transform="matrix(0.9500 -0.2783 0.7444 0.6444 1506.5 382.7)">
<rect x="0.00" y="0.00" width="60.00" height="90.00" fill="#fff" stroke="#000" stroke-width="0.9" vector-effect="non-scaling-stroke"/>
<text x="14" y="12" font-size="12.5" fill="#222" stroke="#fff" stroke-width="0.22" letter-spacing="0.3" font-family="Liberation Sans,sans-serif">17mm</text>
<rect x="2.00" y="15.00" width="58.00" height="6.00" fill="#000" stroke="none" stroke-width="0.6" vector-effect="non-scaling-stroke"/>
<path d="M28 35.0q1.500 3.5 0 7.0t0 7.0" fill="none" stroke="#000" stroke-width="2" vector-effect="non-scaling-stroke"/>
<path d="M26 42L30.5 43.5" stroke="#000" stroke-width="1" vector-effect="non-scaling-stroke"/>
<circle cx="28" cy="33.5" r="1.700" fill="#000"/>
<path d="M14 34L34 34M22 26L22 46M20 40L40 40M32 30L20 44" stroke="#000" stroke-width="0.8" fill="none" vector-effect="non-scaling-stroke"/>
<rect x="2.00" y="82.00" width="58.00" height="6.00" fill="#000" stroke="none" stroke-width="0.6" vector-effect="non-scaling-stroke"/>
</g>
<g transform="matrix(0.9500 -0.2783 0.7444 0.6444 1506.5 382.7)">
<text x="6.0" y="103.5" font-size="14" fill="#303030" stroke="#fff" stroke-width="0.22" letter-spacing="0.1" font-family="Liberation Sans,sans-serif">sheet-14</text>
</g>
</svg>
<svg width="1724" height="150" viewBox="0 0 1724 150" style="left:0;top:0">
<rect x="3" y="54" width="1" height="1" fill="#bcbcc8"/><rect x="6" y="54" width="1" height="1" fill="#bcbcc8"/><rect x="3" y="56" width="1" height="1" fill="#bcbcc8"/><rect x="6" y="56" width="1" height="1" fill="#bcbcc8"/><rect x="3" y="59" width="1" height="1" fill="#bcbcc8"/><rect x="6" y="59" width="1" height="1" fill="#bcbcc8"/><rect x="3" y="61" width="1" height="1" fill="#bcbcc8"/><rect x="6" y="61" width="1" height="1" fill="#bcbcc8"/><rect x="3" y="63" width="1" height="1" fill="#bcbcc8"/><rect x="6" y="63" width="1" height="1" fill="#bcbcc8"/><rect x="3" y="65" width="1" height="1" fill="#bcbcc8"/><rect x="6" y="65" width="1" height="1" fill="#bcbcc8"/><rect x="3" y="68" width="1" height="1" fill="#bcbcc8"/><rect x="6" y="68" width="1" height="1" fill="#bcbcc8"/><rect x="3" y="70" width="1" height="1" fill="#bcbcc8"/><rect x="6" y="70" width="1" height="1" fill="#bcbcc8"/>
<g transform="translate(28,63)"><path d="M-8 -10H2L6.5 -5.5V3M-1 9.5H-8V-10M2 -10V-5.5H6.5" fill="none" stroke="#154a7a" stroke-width="1.3"/><circle cx="5.5" cy="6.5" r="4.6" fill="#f0f0f6" stroke="#154a7a" stroke-width="1.3"/><path d="M5.5 4V9M3 6.5H8" stroke="#154a7a" stroke-width="1.3"/></g>
<g transform="translate(59,63)"><path d="M-10 -1V-7.5H-3.5L-1 -5H9V-1" fill="none" stroke="#154a7a" stroke-width="1.3"/><path d="M-11 -1H11L9.5 7.5H-9.5Z" fill="none" stroke="#154a7a" stroke-width="1.3" stroke-linejoin="round"/></g>
<g transform="translate(91,63)"><path d="M-9.5 -6L-6 -9.5H9.5V9.5H-9.5Z" fill="none" stroke="#154a7a" stroke-width="1.3" stroke-linejoin="round"/><path d="M-4.5 -9.5V-1.5H6V-9.5" fill="none" stroke="#154a7a" stroke-width="1.25"/><path d="M-5 2.5H6.5M-5 5H6.5M-5 7.5H6.5" stroke="#154a7a" stroke-width="1.1"/></g>
<g transform="translate(128.5,63)"><path d="M3 -10L-2 6M9.5 -2.5L-6 2" stroke="#9a9a9a" stroke-width="2" stroke-linecap="round"/><circle cx="-7" cy="3" r="2.6" fill="none" stroke="#9a9a9a" stroke-width="1.4"/><circle cx="-2.5" cy="7.5" r="2.4" fill="none" stroke="#9a9a9a" stroke-width="1.4"/></g>
<g transform="translate(160.5,63)"><path d="M-9.500 -9.5H-3L-0.5 -7V4H-9.5Z" fill="#f0f0f6" stroke="#9a9a9a" stroke-width="1.3" stroke-linejoin="round"/><path d="M-0.5 -4.5H6L9 -1.5V9.5H-0.5Z" fill="#f0f0f6" stroke="#9a9a9a" stroke-width="1.3" stroke-linejoin="round"/><path d="M-7.500 -5.5H-2.5M-7.500 -3H-2.5M-7.500 -0.5H-2.5M1.500 0H7M1.500 2.500H7M1.500 5H7" stroke="#c4c4c4" stroke-width="0.9"/></g>
<g transform="translate(193.5,63)"><path d="M-8.500 -7H-5L-3 -9.5H1L3 -7H6.5V8H-8.500Z" fill="#f0f0f6" stroke="#9a9a9a" stroke-width="1.3" stroke-linejoin="round"/><path d="M-0.5 -1.5H7L10 1.5V9.5H-0.5Z" fill="#f0f0f6" stroke="#9a9a9a" stroke-width="1.3" stroke-linejoin="round"/><rect x="2" y="2" width="6" height="5.5" fill="#d0d0d0"/></g>
<g transform="translate(225,63)"><path d="M-8.500 -6H8.500M-4.500 -6V-9H4.500V-6" fill="none" stroke="#9a9a9a" stroke-width="1.4"/><path d="M-6.5 -6V8.500Q-6.5 9.500 -5.5 9.500H5.500Q6.500 9.500 6.500 8.500V-6" fill="none" stroke="#9a9a9a" stroke-width="1.4"/><path d="M-1.800 -2V5.5M1.800 -2V5.5" stroke="#9a9a9a" stroke-width="1.4"/></g>
<g transform="translate(263.5,63)"><path d="M-3 -3.5H3.500A5 5 0 0 1 3.500 6.500H-2.500" fill="none" stroke="#154a7a" stroke-width="1.6"/><path d="M-8 -3.5L-2.500 -7.500V0.5Z" fill="#154a7a"/></g>
<g transform="translate(294.5,63)"><path d="M3 -3.5H-3.500A5 5 0 0 0 -3.500 6.500H2.500" fill="none" stroke="#9a9a9a" stroke-width="1.5"/><path d="M8 -3.5L2.500 -7.500V0.5Z" fill="#9a9a9a"/></g>
<g transform="translate(333,63)"><path d="M-5.500 -5.500V-10.500H3L5.500 -8V-5.500M3 -10.500V-8H5.500" fill="none" stroke="#154a7a" stroke-width="1.25"/><rect x="-10.500" y="-5.500" width="21" height="10" rx="2.500" fill="none" stroke="#154a7a" stroke-width="1.3"/><rect x="-6" y="1" width="12" height="9.500" fill="#f0f0f6" stroke="#154a7a" stroke-width="1.3"/><path d="M-4 8L-1.500 5L0.5 6.800L3 4.500L4 8Z" fill="none" stroke="#154a7a" stroke-width="1"/><circle cx="-7.500" cy="-2.500" r="0.9" fill="#154a7a"/></g>
<g transform="translate(371,63)"><circle cx="0" cy="0" r="10.300" fill="none" stroke="#154a7a" stroke-width="1.4"/><path d="M0 -2V6" stroke="#154a7a" stroke-width="2.300"/><circle cx="0" cy="-5.300" r="1.400" fill="#154a7a"/></g>
<rect x="109.5" y="53" width="2" height="20" fill="#8c8c8c"/>
<rect x="243.7" y="53" width="2" height="20" fill="#8c8c8c"/>
<rect x="314" y="53" width="2" height="20" fill="#8c8c8c"/>
<rect x="351.7" y="53" width="2" height="20" fill="#8c8c8c"/>
<rect x="388.5" y="46" width="2" height="34" fill="#e0e0e9"/>
<rect x="393" y="54" width="1" height="1" fill="#bcbcc8"/><rect x="396" y="54" width="1" height="1" fill="#bcbcc8"/><rect x="393" y="56" width="1" height="1" fill="#bcbcc8"/><rect x="396" y="56" width="1" height="1" fill="#bcbcc8"/><rect x="393" y="59" width="1" height="1" fill="#bcbcc8"/><rect x="396" y="59" width="1" height="1" fill="#bcbcc8"/><rect x="393" y="61" width="1" height="1" fill="#bcbcc8"/><rect x="396" y="61" width="1" height="1" fill="#bcbcc8"/><rect x="393" y="63" width="1" height="1" fill="#bcbcc8"/><rect x="396" y="63" width="1" height="1" fill="#bcbcc8"/><rect x="393" y="65" width="1" height="1" fill="#bcbcc8"/><rect x="396" y="65" width="1" height="1" fill="#bcbcc8"/><rect x="393" y="68" width="1" height="1" fill="#bcbcc8"/><rect x="396" y="68" width="1" height="1" fill="#bcbcc8"/><rect x="393" y="70" width="1" height="1" fill="#bcbcc8"/><rect x="396" y="70" width="1" height="1" fill="#bcbcc8"/>
<g transform="translate(417,63)"><path d="M-12 6L-5 1L-3 9Z" fill="#999"/><path d="M-5.500 -8.500L8 -11.500L10 3L-2.500 8.500Z" fill="#fff" stroke="#333" stroke-width="0.900"/><path d="M8 -11.500L10 3" stroke="#666" stroke-width="1.800"/><circle cx="4.500" cy="-8.500" r="1.800" fill="#d00"/><path d="M-2.500 9.500L7.500 4.500L8.800 -6" fill="none" stroke="#000" stroke-width="1"/><path d="M9 -8.500L7 -4.500H10.500Z M7.500 4.500l-3.300 -0.300l1.300 2.800Z" fill="#000"/><circle cx="-3" cy="9.800" r="1.900" fill="#000"/></g>
<g transform="translate(449,63)"><path d="M-5 10.500A11.300 11.300 0 0 1 11 -8" fill="none" stroke="#111" stroke-width="1.300"/><path d="M0.500 4.500H8M4.200 0.800V8.300" stroke="#e8141c" stroke-width="1.800"/></g>
<g transform="translate(481,63)"><path d="M-11 6.500L-6 -1.200L2.700 -5.200L12 -4" fill="none" stroke="#000" stroke-width="1.200"/><circle cx="-11" cy="6.500" r="2.600" fill="#e8141c" stroke="#400" stroke-width="0.500"/><circle cx="-6" cy="-1.200" r="2.600" fill="#e8141c" stroke="#400" stroke-width="0.500"/><circle cx="2.700" cy="-5.200" r="2.600" fill="#e8141c" stroke="#400" stroke-width="0.500"/><circle cx="12" cy="-4" r="2.600" fill="#e8141c" stroke="#400" stroke-width="0.500"/></g>
<g transform="translate(513,63)"><path d="M-8 -6L-2 -9L4 -7L6 -1L-2 4L-8 2Z" fill="#fff" stroke="#444" stroke-width="0.8"/><path d="M-8 -6L0 -3L4 -7M0 -3L-2 4" stroke="#777" stroke-width="0.6" fill="none"/><path d="M-1 4L5 -1.500L11 3.500L7 9Z" fill="#ff4a00" stroke="#a02000" stroke-width="0.6"/><path d="M5 -1.500L7 9" stroke="#a02000" stroke-width="0.6"/><path d="M-10 1L-4 5L-1 6" stroke="#000" stroke-width="1.400" fill="none"/><path d="M-11 0l3.500 -.5l-1.500 3Z" fill="#000"/></g>
<g transform="translate(545,63)"><path d="M-10.500 4L0 -1L10.500 4L0 10Z" fill="#fff" stroke="#000" stroke-width="0.9" stroke-dasharray="1.500 0.8"/><path d="M-10.500 1.500L0 -3.500L10.500 1.500L0 7.500Z" fill="#fff" stroke="#000" stroke-width="0.9" stroke-dasharray="1.500 0.8"/><path d="M-9.500 -1.500L0 -6L9.500 -1.500L0 4.500Z" fill="#e83a44" stroke="#600" stroke-width="0.7"/><path d="M-10.500 -5.500L0 -11L10.500 -5.500L0 0.5Z" fill="#fff" stroke="#000" stroke-width="1"/></g>
<g transform="translate(577,63)"><path d="M-1 6L6 2.500L12 6L5 10Z" fill="#ddd" stroke="#888" stroke-width="0.7"/><path d="M-1 3.500L6 0L12 3.500L5 7.500Z" fill="#7cba5c" stroke="#4a8a3a" stroke-width="0.6"/><path d="M-1 0.5L6 -3L12 0.5L5 4.500Z" fill="#f2b25c" stroke="#b07a30" stroke-width="0.6"/><path d="M-1 -2.500L6 -6L12 -2.500L5 1.500Z" fill="#d48af0" stroke="#9050b0" stroke-width="0.6"/><path d="M-1 -5.500L6 -9L12 -5.500L5 -1.500Z" fill="#4cd0ec" stroke="#2090b0" stroke-width="0.6"/><path d="M-1 -8L6 -11.500L12 -8L5 -4Z" fill="#fff" stroke="#888" stroke-width="0.7"/><path d="M-11 2.500L-4 -0.500L0.500 2L-6 5.500Z" fill="#fff" stroke="#999" stroke-width="0.7"/><path d="M-1.500 -8.500H-5.500V-3" fill="none" stroke="#e01020" stroke-width="1.800"/><path d="M-8.500 -3.500H-2.500L-5.500 0Z" fill="#e01020"/></g>
<g transform="translate(609,63)"><path d="M-10.500 8.500L10.500 -5" stroke="#000" stroke-width="1.300"/><path d="M-11 -9L0.500 2.500" stroke="#e8141c" stroke-width="1.300"/><path d="M-2 0L1.500 -3L4 -0.5L1 2.500Z" fill="#fff" stroke="#000" stroke-width="0.8"/><circle cx="0.500" cy="2.500" r="1.900" fill="#e8141c" stroke="#000" stroke-width="0.5"/></g>
<g transform="translate(641,63)"><path d="M-10 5L-4 3L2 10L-4 10Z" fill="#555"/><path d="M-10 -4L4 -11L10 -3L8.500 2" fill="none" stroke="#000" stroke-width="1.200" stroke-dasharray="2.500 1.500"/><path d="M-4 -3L3 -6L8 0L7 6L1 10L-4.500 5Z" fill="#fff" stroke="#000" stroke-width="1.100"/></g>
<g transform="translate(673,63)"><path d="M-10.500 -9V2L-5 8L0.500 5.500L6 10L12 5V3L3.500 -4.500L2 -8.500L-8 -5.500Z" fill="#fff" stroke="#000" stroke-width="1"/><path d="M-10.500 2L-5 5.500L0.500 3L6 7.500L12 3" fill="none" stroke="#000" stroke-width="0.8"/><path d="M2 -8.500V-5M-8 -5.500V-8" stroke="#000" stroke-width="0.8"/><path d="M-5 5.500V8M6 7.500V10" stroke="#000" stroke-width="0.7"/></g>
<g transform="translate(705,63)"><path d="M-4 8L2 8L11 4L11 0Z" fill="#888"/><path d="M-9 1L-4 -7L4 -6L9 -10L11 -8V-2L7 3L-1 2L-5 8L-9 7Z" fill="#fff" stroke="#000" stroke-width="1.200"/><path d="M-9 1L-5 2.500L-5 8M-5 2.500L-1 -3L7 -2L11 -8" fill="none" stroke="#000" stroke-width="0.8"/><path d="M-11 12L-3 1.500L5 0.500L9 -4" fill="none" stroke="#e8141c" stroke-width="1" stroke-dasharray="3 1.200"/></g>
<g transform="translate(737,63)"><path d="M-12 -3L-6 -2L-8 1Z" fill="#888"/><path d="M-9 -10Q6 -10 8 6L4 10Q2 -4 -9 -6Z" fill="#ddd" stroke="#333" stroke-width="0.9"/><path d="M-8 -8.500Q4 -7.500 6 7" fill="none" stroke="#d03060" stroke-width="0.9"/><path d="M-8 -9.500Q5 -9 7 6.500" fill="none" stroke="#4040c0" stroke-width="0.7"/><ellipse cx="6" cy="8" rx="2.300" ry="1.300" fill="#fff" stroke="#333" stroke-width="0.7" transform="rotate(-45 6 8)"/></g>
<g transform="translate(769,63)"><path d="M-11 -1L-9 -6L-3 -8L1 -6L11 2L11 4L-1 10L-11 5Z" fill="#fff" stroke="#000" stroke-width="1"/><path d="M-11 -1L-2 2L11 2M-2 2L-1 10M-9 -6L-5 -4L1 -6M-5 -4L-2 2" fill="none" stroke="#000" stroke-width="0.7"/><path d="M-10 -7L-5 -9.500L1 -8L-4 -5Z" fill="none" stroke="#e8141c" stroke-width="1.200"/></g>
<g transform="translate(801,63)"><path d="M-12 -1L-7 -5V8L-12 9Z" fill="#888"/><path d="M-8 3L0 -11V4L-7 11Z" fill="#fff" stroke="#000" stroke-width="1"/><path d="M0 -3L10 -7V-2L0 2" fill="#fff" stroke="#000" stroke-width="1.100"/><path d="M2 2.500L12 -1.500V4L4 7.500Z" fill="#cfe0e8" stroke="#000" stroke-width="1"/><path d="M0 2L2 2.500L4 7.500L0 5" fill="#fff" stroke="#000" stroke-width="0.9"/><path d="M-6 4L-2 -2V3L-6 9Z" fill="none" stroke="#e8141c" stroke-width="1.200"/></g>
<g transform="translate(833,63)"><path d="M-12 -6L-7 -8L-4 2L2 4L4 10L-2 8L-10 8Z" fill="#8a8a78"/><circle cx="2" cy="1" r="8.500" fill="#fff" stroke="#000" stroke-width="1.100"/><ellipse cx="0" cy="-5.500" rx="7" ry="4.500" fill="#b8c0e0" stroke="#000" stroke-width="1"/><ellipse cx="1" cy="-4.500" rx="4" ry="2" fill="#777"/><path d="M-6 -2Q-9 4 -8 8M-3 0Q-6 4 -5 7" fill="none" stroke="#000" stroke-width="1"/><path d="M0.500 -6V7" stroke="#e8141c" stroke-width="1.300"/><path d="M-1 5L3 4L5 10Z" fill="#8a8a78"/></g>
<g transform="translate(865,63)"><path d="M-12 8L-12 4L-8 8Z" fill="#999"/><path d="M-12 -5L-5 -11L6 -7L8 2L-5 10L-12 6Z" fill="#fff" stroke="#000" stroke-width="1"/><path d="M-12 -5L1 -1.500L6 -7M1 -1.500L-5 10M1 -1.500L8 2" fill="none" stroke="#000" stroke-width="0.7"/><path d="M7 -3L12 1L8 3Z" fill="#000"/><circle cx="1" cy="-1.500" r="1.900" fill="#e8141c" stroke="#500" stroke-width="0.5"/></g>
<g transform="translate(897,63)"><path d="M-8 10V-2" stroke="#000" stroke-width="2"/><path d="M0 -8.500H10" stroke="#000" stroke-width="2"/><path d="M-8 -1Q-8 -8.500 0 -8.500" fill="none" stroke="#e8141c" stroke-width="1.600"/><path d="M-8 -8.500H-2M-8 -8.500V-3" stroke="#777" stroke-width="0.7" stroke-dasharray="1.500 1"/></g>
<g transform="translate(929,63)"><path d="M-9 10V0" stroke="#000" stroke-width="1.600"/><path d="M1 -10H11" stroke="#000" stroke-width="1.600"/><path d="M-9 0L1 -10" stroke="#e8141c" stroke-width="1.400"/><path d="M-9 -10H0M-9 -10V-1" stroke="#000" stroke-width="0.9" stroke-dasharray="2.500 1.500"/></g>
<g transform="translate(961,63)"><path d="M0 -3L10.500 -10" stroke="#000" stroke-width="1.600"/><path d="M1 4H10.500" stroke="#000" stroke-width="1.600"/><path d="M-11 8L0 -3M-7 4H1" stroke="#e8141c" stroke-width="1.300"/><circle cx="-7" cy="4" r="1.800" fill="#e8141c" stroke="#500" stroke-width="0.5"/></g>
<g transform="translate(993,63)"><path d="M-11 4L-9 0L12 8V10Z" fill="#888"/><path d="M-9 -5L-1 -11L12 -9V6L-3 1Z" fill="#fff" stroke="#000" stroke-width="1.100"/><path d="M-12 -5L-6 3L12 9" fill="none" stroke="#e8141c" stroke-width="1.700"/></g>
<g transform="translate(1025,63)"><path d="M-12 4H-8V9H-12Z" fill="#666"/><path d="M-8 -7L0 -11L12 -10V10H-7Z" fill="#fff" stroke="#000" stroke-width="1.200"/><path d="M-8 -7L-4 -5L12 -6M-4 -5V10M2 -5.500V10M2 -5.500L6 10L10 -6" fill="none" stroke="#000" stroke-width="1"/><path d="M-8 1L-5 4L2 3.500L7 5L12 3" fill="none" stroke="#e8141c" stroke-width="1.500"/></g>
<g transform="translate(1057,63)"><path d="M-11 4L-2 0L12 7L0 11Z" fill="#fff" stroke="#000" stroke-width="0.9"/><path d="M-7 -11L-10 4L1 2L8 8Z" fill="#ddd" stroke="#777" stroke-width="0.6"/><path d="M-7 -11Q6 -4 6 8" fill="none" stroke="#e8141c" stroke-width="1.500"/><path d="M-6 1Q2 2 5 7" fill="none" stroke="#3040e0" stroke-width="1"/></g>
<g transform="translate(1089,63)"><path d="M-8 7L0 -11M-8 7L12 2" stroke="#000" stroke-width="0.9" stroke-dasharray="2.500 1.500"/><path d="M-3 -5L6 -9L14 -1L5 4Z" fill="#fff" stroke="#000" stroke-width="1.100"/><path d="M-5 3L-1 1L3 4.500L-1.500 6.500Z" fill="#e8141c" stroke="#600" stroke-width="0.5"/><path d="M-11.500 9.500H-6.500M-9 7V12" stroke="#e8141c" stroke-width="1"/></g>
<g transform="translate(1121,63)"><path d="M-12 5H-8V9L-12 11Z" fill="#999"/><path d="M-9 -3v13a2.5 1.25 0 0 0 5 0v-13" fill="#fff" stroke="#111" stroke-width="1"/><ellipse cx="-6.5" cy="-3" rx="2.5" ry="1.25" fill="#eee" stroke="#111" stroke-width="0.8"/><path d="M-1.5 -7v13a2.5 1.25 0 0 0 5 0v-13" fill="#fff" stroke="#111" stroke-width="1"/><ellipse cx="1.0" cy="-7" rx="2.5" ry="1.25" fill="#eee" stroke="#111" stroke-width="0.8"/><path d="M6.5 -10.5v14a2.25 1.125 0 0 0 4.5 0v-14" fill="#fff" stroke="#111" stroke-width="1"/><ellipse cx="8.75" cy="-10.5" rx="2.25" ry="1.125" fill="#eee" stroke="#111" stroke-width="0.8"/></g>
<g transform="translate(1153,63)"><path d="M-11 -5v8a1.5 0.75 0 0 0 3 0v-8" fill="#fff" stroke="#111" stroke-width="1"/><ellipse cx="-9.5" cy="-5" rx="1.5" ry="0.75" fill="#eee" stroke="#111" stroke-width="0.8"/><path d="M-5 -8v10a1.5 0.75 0 0 0 3 0v-10" fill="#fff" stroke="#111" stroke-width="1"/><ellipse cx="-3.5" cy="-8" rx="1.5" ry="0.75" fill="#eee" stroke="#111" stroke-width="0.8"/><path d="M0 -10v10a1.5 0.75 0 0 0 3 0v-10" fill="#fff" stroke="#111" stroke-width="1"/><ellipse cx="1.5" cy="-10" rx="1.5" ry="0.75" fill="#eee" stroke="#111" stroke-width="0.8"/><path d="M6 -6v9a1.5 0.75 0 0 0 3 0v-9" fill="#fff" stroke="#111" stroke-width="1"/><ellipse cx="7.5" cy="-6" rx="1.5" ry="0.75" fill="#eee" stroke="#111" stroke-width="0.8"/><path d="M9 -3v8a1.5 0.75 0 0 0 3 0v-8" fill="#fff" stroke="#111" stroke-width="1"/><ellipse cx="10.5" cy="-3" rx="1.5" ry="0.75" fill="#eee" stroke="#111" stroke-width="0.8"/><path d="M-6 -2v9a1.5 0.75 0 0 0 3 0v-9" fill="#fff" stroke="#111" stroke-width="1"/><ellipse cx="-4.5" cy="-2" rx="1.5" ry="0.75" fill="#eee" stroke="#111" stroke-width="0.8"/><path d="M-1 -1v11a1.5 0.75 0 0 0 3 0v-11" fill="#fff" stroke="#111" stroke-width="1"/><ellipse cx="0.5" cy="-1" rx="1.5" ry="0.75" fill="#eee" stroke="#111" stroke-width="0.8"/><path d="M4 0v9a1.5 0.75 0 0 0 3 0v-9" fill="#fff" stroke="#111" stroke-width="1"/><ellipse cx="5.5" cy="0" rx="1.5" ry="0.75" fill="#eee" stroke="#111" stroke-width="0.8"/></g>
<g transform="translate(1185,63)"><ellipse cx="0" cy="5.500" rx="9.500" ry="5" fill="#f4f4f6" stroke="#222" stroke-width="0.800"/><g stroke="#222" stroke-width="0.600" fill="#ddd"><rect x="-10.500" y="-4" width="2.200" height="9.500"/><rect x="-8" y="-6.500" width="2.200" height="9.500"/><rect x="-5.500" y="-8" width="2.200" height="9"/><rect x="-3" y="-9" width="2.200" height="9"/><rect x="-0.500" y="-9.500" width="2.200" height="9"/><rect x="2" y="-9" width="2.200" height="9"/><rect x="4.500" y="-8" width="2.200" height="9"/><rect x="7" y="-6.500" width="2.200" height="9.500"/><rect x="8.800" y="-4" width="2" height="9.500"/></g><path d="M-3.500 -8V0M-1 -9V0M1.500 -9V0M4 -8V0" stroke="#111" stroke-width="1.300"/><path d="M-13 -1H-10.500M-13 1.500H-10.500M-13 4H-10.500" stroke="#777" stroke-width="1.100"/></g>
<g transform="translate(1217,63)"><path d="M-11 3L-8 2L-7 10L-10 11Z" fill="#777" stroke="#222" stroke-width="0.7"/><path d="M-5 1L-2 0L-1 7L-4 8Z" fill="#999" stroke="#222" stroke-width="0.7"/><path d="M0 -1L4 -3L7 3L3 5Z" fill="#aaa" stroke="#222" stroke-width="0.7"/><path d="M3 -6L8 -7L10 -1L6 1Z" fill="#bbb" stroke="#222" stroke-width="0.7"/><path d="M5 -11L11 -10L11 -5L6 -5.500Z" fill="#999" stroke="#222" stroke-width="0.7"/><path d="M-8 6L-4 5M-2 3L2 2" stroke="#222" stroke-width="1.500"/></g>
<g transform="translate(1249,63)"><path d="M-12 3L-5 -2V10Z" fill="#8a8a8a"/><path d="M-6 -4L-1 -8L4 -7L10 -11V3L4 7L-1 6L-6 11Z" fill="#fff" stroke="#000" stroke-width="1.200" stroke-linejoin="round"/><path d="M-1 -8V6M4 -7V7" stroke="#888" stroke-width="0.8"/></g>
<g transform="translate(1281,63)"><path d="M-12 0L0 -7V8Z" fill="#999"/><path d="M-3 2L0 0L2 8L-1 9Z" fill="#f0f0f6"/><path d="M0 -6L10 -12V3L2 11L0 8Z" fill="#fff" stroke="#000" stroke-width="1.300" stroke-linejoin="round"/><path d="M4 -2L7 -3.500V2.500L4 4Z" fill="#555" stroke="#000" stroke-width="0.7"/></g>
<g transform="translate(1313,63)"><path d="M-12 -12H-4L-2 8L-12 3Z" fill="#8a8a8a"/><path d="M-4 -9L8 -6L11 -8V-2L8 0L-4 -3Z" fill="#eee" stroke="#000" stroke-width="1"/><path d="M-4 -2L8 1L11 -1V5L8 7L-4 4Z" fill="#eee" stroke="#000" stroke-width="1"/><path d="M-4 5L8 8L11 6V10L8 11L-4 9Z" fill="#eee" stroke="#000" stroke-width="1"/><path d="M8 -11V11" stroke="#ccc" stroke-width="1.500"/></g>
<g transform="translate(1345,63)"><path d="M-12 -3L-3 2V10Z" fill="#999"/><path d="M-5.500 -10.500Q1 -12.500 7.500 -10.500L4.500 -8H-2.500Z" fill="#222"/><path d="M-2.500 -8.500H4.500V6.500Q4.500 9 3 9V10.500H-1V9Q-2.500 9 -2.500 6.500Z" fill="#eee" stroke="#222" stroke-width="1"/><path d="M0 -8V10M2.500 -8V9" stroke="#888" stroke-width="0.800"/></g>
<g transform="translate(1377,63)"><path d="M-4 -11H3V1H-4Z" fill="#f4f4f4" stroke="#444" stroke-width="0.9"/><path d="M-2 -11V1" stroke="#999" stroke-width="0.7"/><path d="M-10 3L-4 0H3L10 3L1 9Z" fill="#fff" stroke="#444" stroke-width="0.9"/><path d="M-10 3V6L1 12V9M1 12L10 6V3" fill="#fff" stroke="#444" stroke-width="0.9"/></g>
<g transform="translate(1409,63)"><path d="M-9 1H-2M2 5H10" stroke="#888" stroke-width="0.9"/><path d="M-10 -10L-1 2" stroke="#000" stroke-width="4.400" stroke-linecap="round"/><path d="M-10 -10L-1 2" stroke="#fff" stroke-width="2.600" stroke-linecap="round"/><path d="M-10 -10L-1 2" stroke="#e8141c" stroke-width="0.800"/><path d="M8 -7L-6 7" stroke="#000" stroke-width="4.400" stroke-linecap="round"/><path d="M8 -7L-6 7" stroke="#fff" stroke-width="2.600" stroke-linecap="round"/><path d="M8 -7L-6 7" stroke="#e8141c" stroke-width="1"/></g>
<g transform="translate(1441,63)"><path d="M-12 -8H-8L-7 -6H-4L-3 -4H-1L0 -2H12" fill="none" stroke="#000" stroke-width="1"/><path d="M-12 -4L1 1" stroke="#000" stroke-width="1.100"/><path d="M-1 0H4" stroke="#000" stroke-width="2"/><path d="M-12 11L12 0H3L1 2H-3L-4 4H-7L-8 6H-12" fill="none" stroke="#000" stroke-width="1"/><path d="M-12 7H-8L-7 5H-4" stroke="#888" stroke-width="1.400" fill="none"/></g>
<g transform="translate(1473,63)"><path d="M-12 10L-12 4Q-4 -2 1 -12H12V12H-12Z" fill="#888"/><path d="M-12 5Q-3 -2 2 -12M-9 7Q0 0 5 -12M-3 9Q4 2 9 -12M1 11Q8 4 12 -8" fill="none" stroke="#222" stroke-width="1.400"/><path d="M-5 8Q2 1 7 -12" fill="none" stroke="#eee" stroke-width="2.400" stroke-dasharray="1.500 1.500"/><path d="M-12 8H-4L-8 12H-12Z" fill="#fff"/></g>
<g transform="translate(1505,63)"><path d="M-11 5L-2 2L3 5L-7 9Z" fill="none" stroke="#999" stroke-width="1.300"/><path d="M-6 -6L7 -11V2L-6 6Z M-3.500 -4L4.500 -7V0L-3.500 3Z" fill="#888" fill-rule="evenodd" stroke="#666" stroke-width="0.7"/><path d="M7 -11L9 -9V3L7 2" fill="#aaa" stroke="#666" stroke-width="0.6"/></g>
<g transform="translate(1537,63)"><path d="M-10 4L-4 2L-5 11Z" fill="none" stroke="#999" stroke-width="1.200"/><path d="M-5 11V-6L7 -11V6" fill="none" stroke="#777" stroke-width="2.600" stroke-linejoin="round"/><path d="M-5 2L1 -1V6" fill="none" stroke="#999" stroke-width="1.500"/></g>
<g transform="translate(1569,63)"><rect x="-12" y="-12" width="24" height="24" fill="#e4e4e4"/><path d="M-11 10V-5L4 -12V4Z" fill="#fff" stroke="#000" stroke-width="0.8"/><path d="M-6 10V-5L7 -12V4Z" fill="#000"/><path d="M-3 8V-5L0 -6.500V6.500Z" fill="#9aa4d8"/><path d="M1 -5.500L4 -7V-4L1 -2.500ZM1 -1L4 -2.500V0.500L1 2ZM1 3.500L4 2V5L1 6.500ZM5 -7.500L8 -9V-6L5 -4.500ZM5 -3L8 -4.500V-1.500L5 0ZM5 1.500L8 0V3L5 4.500Z" fill="#b0b8e4"/><path d="M-12 10H-6" stroke="#000" stroke-width="1.200"/></g>
<g transform="translate(1601,63)"><path d="M-12 0L-8 -2V6L-11 5Z" fill="#999"/><path d="M-8 -12H10V7L-5 12L-8 9Z" fill="#ccc" stroke="#777" stroke-width="0.8"/><path d="M-4 -11V9M1 -11V8M6 -11V6" stroke="#222" stroke-width="1.800"/><path d="M-7 -5L9 -7M-7 2L9 -1" stroke="#222" stroke-width="1.800"/></g>
<g transform="translate(1633,63)"><rect x="-12" y="-12" width="24" height="24" fill="#222"/><path d="M-12 -5L12 7M-12 3L12 15M-12 -13L12 -1" stroke="#bbb" stroke-width="1.300"/><g stroke="#eee" stroke-width="2" stroke-linecap="round"><path d="M-10 -5L-7 -10M-6 -3L-2 -9M-2 -1L2 -7M2 1L6 -5M6 3L10 -3M-10 5L-6 -1M-6 7L-2 1M-2 9L2 3M3 10L6 5M7 10L10 6M-10 10L-8 8M4 -8L6 -10.500"/></g><rect x="-12.500" y="-12.500" width="25" height="25" fill="none" stroke="#f0f0f6" stroke-width="1"/></g>
<g transform="translate(1665,63)"><rect x="-12" y="-12" width="24" height="24" rx="2" fill="#888"/><path d="M-6 -12L0 -7L12 -11V-6L0 -2L-6 -7Z" fill="#fff" stroke="#222" stroke-width="0.7"/><path d="M-6 -6L0 -1L12 -5V0L0 4L-6 -1Z" fill="#fff" stroke="#222" stroke-width="0.7"/><path d="M-6 0L0 5L12 1V6L0 10L-6 5Z" fill="#fff" stroke="#222" stroke-width="0.7"/><path d="M0 -7V-2M0 -1V4M0 5V10" stroke="#999" stroke-width="1"/></g>
<g transform="translate(1697,63)"><path d="M-12 -1L2 -12L12 -8V8L4 12Z" fill="#111"/><path d="M-9 -1L2 -9L0 8Z" fill="none" stroke="#fff" stroke-width="2.200"/><path d="M-4 -1L0 -4L-1 3Z" fill="#998"/><circle cx="7" cy="-3" r="4.500" fill="none" stroke="#fff" stroke-width="2"/><path d="M2 4L10 0L12 6L5 11Z" fill="none" stroke="#fff" stroke-width="2"/><path d="M5 -5L9 -2" stroke="#fff" stroke-width="1.500"/></g>
<g transform="translate(1722,63)"><path d="M-4 6V-2L4 -8" fill="none" stroke="#777" stroke-width="3"/></g>
<rect x="39.5" y="82" width="2" height="34" fill="#e0e0e9"/>
<rect x="44" y="90" width="1" height="1" fill="#bcbcc8"/><rect x="47" y="90" width="1" height="1" fill="#bcbcc8"/><rect x="44" y="92" width="1" height="1" fill="#bcbcc8"/><rect x="47" y="92" width="1" height="1" fill="#bcbcc8"/><rect x="44" y="95" width="1" height="1" fill="#bcbcc8"/><rect x="47" y="95" width="1" height="1" fill="#bcbcc8"/><rect x="44" y="97" width="1" height="1" fill="#bcbcc8"/><rect x="47" y="97" width="1" height="1" fill="#bcbcc8"/><rect x="44" y="99" width="1" height="1" fill="#bcbcc8"/><rect x="47" y="99" width="1" height="1" fill="#bcbcc8"/><rect x="44" y="101" width="1" height="1" fill="#bcbcc8"/><rect x="47" y="101" width="1" height="1" fill="#bcbcc8"/><rect x="44" y="104" width="1" height="1" fill="#bcbcc8"/><rect x="47" y="104" width="1" height="1" fill="#bcbcc8"/><rect x="44" y="106" width="1" height="1" fill="#bcbcc8"/><rect x="47" y="106" width="1" height="1" fill="#bcbcc8"/>
<g transform="translate(67,99)"><text x="-15" y="7" font-size="19.500" font-family="Liberation Sans,sans-serif" fill="#000" stroke="#f0f0f6" stroke-width="0.35" letter-spacing="-0.3">A-B</text></g>
<g transform="translate(99,99)"><circle cx="-2" cy="-2.500" r="5.200" fill="#fff" stroke="#c2444a" stroke-width="1.500"/><path d="M1.800 1.500L7.500 7.500" stroke="#c2444a" stroke-width="1.700"/></g>
<g transform="translate(131,99)"><path d="M-12.500 3L0 -9.500Q1 -11 3 -11.300L11 -12.500Q12.800 -12.500 12.500 -10.500L12 -2.500Q12 -1 10.500 0.500L-2 12.500Q-3 13.500 -4 12.500L-12.500 5Q-13.500 4 -12.500 3Z" fill="#000"/><circle cx="7.800" cy="-7.300" r="2.200" fill="#f0f0f6"/><path d="M-1.500 -2V7M-6 2.500H3" stroke="#fff" stroke-width="2.300"/></g>
<g transform="translate(163,99)"><path d="M-4.500 -8L-4.500 6.500L-1 3.200L1.500 8.500L3.800 7.500L1.300 2.300L5.500 2Z" fill="#000"/></g>
<g transform="translate(195,99)"><path d="M-11 -6Q0 -14 11 -6" fill="none" stroke="#000" stroke-width="2"/><path d="M-13.500 -5L-11.500 -11L-7 -6.500Z M13.500 -5L11.500 -11L7 -6.500Z" fill="#000"/><path d="M0 -4.500V10" stroke="#000" stroke-width="2"/><path d="M-13 -1L-5 5.500L-13 12Z M13 -1L5 5.500L13 12Z" fill="#000"/></g>
<g transform="translate(227,99)"><path d="M-10.500 -1A10.500 10.500 0 0 1 8.500 -7" fill="none" stroke="#000" stroke-width="2.200"/><path d="M10.500 2A10.500 10.500 0 0 1 -8.500 8" fill="none" stroke="#000" stroke-width="2.200"/><path d="M-14.500 -1H-6.500L-10.500 4.500Z M14.500 1.500H6.500L10.500 -4Z" fill="#000"/></g>
<g transform="translate(264.5,99)"><path d="M-9 -9L0 -13V9L-9 13Z" fill="#ccc" stroke="#000" stroke-width="1"/><path d="M0 -13L9 -9V13L0 9Z" fill="#fff" stroke="#000" stroke-width="1"/><path d="M-5 0.500L0 -2L5 0.500" fill="none" stroke="#e8141c" stroke-width="1.800"/></g>
<g transform="translate(296,98.5)"><rect x="-10.500" y="-13" width="8" height="26" fill="#ccc" stroke="#000" stroke-width="1"/><rect x="-2.500" y="-4" width="14" height="8" fill="#fff" stroke="#000" stroke-width="1"/><rect x="-2.500" y="-3.500" width="2" height="7" fill="#e8141c"/></g>
<g transform="translate(328,98.5)"><rect x="-10.500" y="-13" width="8" height="26" fill="#ccc" stroke="#000" stroke-width="1"/><rect x="-6.500" y="-4" width="18" height="8" fill="#fff" stroke="#000" stroke-width="1"/><rect x="-3" y="-3.500" width="2" height="7" fill="#e8141c"/></g>
<g transform="translate(366.5,98.5)"><rect x="-13" y="-11" width="8.500" height="22.500" fill="#ccc" stroke="#000" stroke-width="1"/><rect x="-4.500" y="-11" width="8" height="22.500" fill="#ccc" stroke="#000" stroke-width="1"/><rect x="3.500" y="-4" width="5" height="15.500" fill="#fff" stroke="#000" stroke-width="1"/><rect x="8.500" y="-4" width="4.500" height="15.500" fill="#fff" stroke="#000" stroke-width="1"/></g>
<g transform="translate(404.5,99)"><path d="M13.2 -2.7L13.2 2.7L9.3 3.2L8.8 4.3L11.3 7.5L7.5 11.3L4.3 8.8L3.2 9.3L2.7 13.2L-2.7 13.2L-3.2 9.3L-4.3 8.8L-7.5 11.3L-11.3 7.5L-8.8 4.3L-9.3 3.2L-13.2 2.7L-13.2 -2.7L-9.3 -3.2L-8.8 -4.3L-11.3 -7.5L-7.5 -11.3L-4.3 -8.8L-3.2 -9.3L-2.7 -13.2L2.7 -13.2L3.2 -9.3L4.3 -8.8L7.5 -11.3L11.3 -7.5L8.8 -4.3L9.3 -3.2Z" fill="#000"/><circle r="6" fill="#f0f0f6"/><circle r="2.300" fill="#000"/></g>
<g transform="translate(436,99)"><rect x="-14.500" y="-11.500" width="29" height="23.500" fill="#fff" stroke="#000" stroke-width="1"/><rect x="-14" y="-11" width="28" height="4" fill="#bbb"/><path d="M-14.500 -7H14.500" stroke="#000" stroke-width="1"/><path d="M-14.500 -2.500H14.500M-14.500 2.500H14.500M-14.500 7.500H14.500M-5 -11.500V12M5 -11.500V12" stroke="#888" stroke-width="0.9"/></g>
<g transform="translate(474.5,99)"><path d="M0 -11V-5M0 5V11M-11 0H-5M5 0H11" stroke="#000" stroke-width="1.100"/><path d="M0 -14.500L-2.500 -10.500H2.500ZM0 14.500L-2.500 10.500H2.500ZM-14.500 0L-10.500 -2.500V2.500ZM14.500 0L10.500 -2.500V2.500Z" fill="#000"/><circle r="2.600" fill="#e8141c"/></g>
<g transform="translate(513,99.5)"><rect x="-12" y="-8.500" width="24" height="17" fill="#e4e4e4" stroke="#000" stroke-width="2"/></g>
<g transform="translate(551.5,99.5)"><rect x="-15" y="-9" width="11" height="18" fill="#ccc" stroke="#000" stroke-width="1"/><rect x="-1" y="-9" width="15" height="8.500" fill="#ccc" stroke="#000" stroke-width="1"/><rect x="-1" y="3" width="15" height="6" fill="#ccc" stroke="#000" stroke-width="1"/></g>
<g transform="translate(583,99)"><circle r="11.500" fill="#f6f2f4" stroke="#c0565c" stroke-width="1.100"/><path d="M0 -8V8M-8 0H8" stroke="#c0565c" stroke-width="1.100"/><path d="M0 -9.500L-1.500 -7H1.500ZM0 9.500L-1.500 7H1.500ZM-9.500 0L-7 -1.500V1.500ZM9.500 0L7 -1.500V1.500Z" fill="#c0565c"/></g>
<g transform="translate(614,99)"><text x="-14.500" y="5" font-size="13" font-weight="bold" font-family="Liberation Sans,sans-serif" fill="#111" letter-spacing="-0.4">.DXF</text></g>
<g transform="translate(646.5,98.5)"><path d="M-8 -6V-14.500H3L8 -10V-6" fill="#fff" stroke="#000" stroke-width="1"/><path d="M3 -14.500V-10H8" fill="none" stroke="#000" stroke-width="0.9"/><rect x="-12" y="-6" width="24" height="14" fill="#ccc" stroke="#000" stroke-width="1"/><rect x="-8" y="2" width="16" height="12" fill="#fff" stroke="#000" stroke-width="1"/><path d="M-5.500 5.500H5.500M-5.500 8H5.500M-5.500 10.500H5.500" stroke="#000" stroke-width="1"/><path d="M5.500 -3H7M8 -3H9.500" stroke="#333" stroke-width="1"/></g>
<g transform="translate(685.5,99.5)"><rect x="-12" y="-1" width="16" height="12" fill="#ccc" stroke="#000" stroke-width="1.100"/><path d="M-11 -6L-6 -10H10L5 -6Z" fill="#ccc" stroke="#000" stroke-width="1"/><path d="M8 -2L12 -6.500V5L8 9.500Z" fill="#ccc" stroke="#000" stroke-width="1"/></g>
<g transform="translate(716.5,99)"><path d="M-11.500 0H8" stroke="#000" stroke-width="1.500"/><path d="M11.500 0L7 -3.500V3.500Z" fill="#000"/></g>
<g transform="translate(755,99)"><path d="M-3 -11H3V1H8L0 9.500L-8 1H-3Z" fill="#c4525a"/></g>
<g transform="translate(787,99.5)"><rect x="-10.500" y="-8" width="21" height="16.500" rx="2.500" fill="none" stroke="#555" stroke-width="1.200"/><path d="M-3 -3.500L4 0.500L-3 4.500Z" fill="#000"/></g>
<g transform="translate(833,99)"><g stroke="#aaa" stroke-width="0.8" fill="none"><path d="M-12 -9L0 -13L12 -10V8L-1 13L-12 9Z M-12 -9L-1 -5L12 -10M-1 -5V13"/></g><g fill="#999"><circle cx="-12" cy="-9" r="1"/><circle cx="0" cy="-13" r="1"/><circle cx="12" cy="-10" r="1"/><circle cx="12" cy="8" r="1"/><circle cx="-1" cy="13" r="1"/><circle cx="-12" cy="9" r="1"/><circle cx="-12" cy="0" r="1"/><circle cx="12" cy="-1" r="1"/><circle cx="-6" cy="11" r="1"/><circle cx="6" cy="10.500" r="1"/><circle cx="-6" cy="-11" r="1"/><circle cx="6" cy="-11.500" r="1"/></g><g transform="scale(1.2)"><path d="M-7 -5L1 -8L7 -5L-1 -2Z" fill="#e8e8e8" stroke="#555" stroke-width="1"/><path d="M-7 -5V5L-1 8V-2Z" fill="#fff" stroke="#555" stroke-width="1.100"/><path d="M-1 -2L7 -5V4.500L-1 8Z" fill="#ccc" stroke="#555" stroke-width="1"/></g><circle cx="-4.500" cy="2" r="0.900" fill="#777"/><circle cx="3.500" cy="1" r="1" fill="#999"/></g>
<g transform="translate(865,99)"><path d="M0 -13V13" stroke="#555" stroke-width="1.800"/><path d="M-13 -3L13 4M-10 5L12 -3" stroke="#999" stroke-width="1.800"/><g transform="scale(1.2)"><path d="M-7 -5L1 -8L7 -5L-1 -2Z" fill="#e8e8e8" stroke="#555" stroke-width="1"/><path d="M-7 -5V5L-1 8V-2Z" fill="#fff" stroke="#555" stroke-width="1.100"/><path d="M-1 -2L7 -5V4.500L-1 8Z" fill="#ccc" stroke="#555" stroke-width="1"/></g><path d="M0 -13V-7M0 9V13" stroke="#555" stroke-width="1.800"/><path d="M-13 -3L-8 -1.500M-10 5L-3 2.500M3 1L13 4" stroke="#999" stroke-width="1.800"/></g>
<g transform="translate(897,99)"><path d="M-13 -3L13 3" stroke="#999" stroke-width="1.800"/><g transform="scale(1.2)"><path d="M-7 -5L1 -8L7 -5L-1 -2Z" fill="#e8e8e8" stroke="#555" stroke-width="1"/><path d="M-7 -5V5L-1 8V-2Z" fill="#fff" stroke="#555" stroke-width="1.100"/><path d="M-1 -2L7 -5V4.500L-1 8Z" fill="#ccc" stroke="#555" stroke-width="1"/></g><path d="M-13 -3L-8 -1.800M2 0.500L13 3" stroke="#999" stroke-width="1.800"/></g>
<g transform="translate(929,99)"><path d="M-12 4L11 -5" stroke="#999" stroke-width="1.800"/><g transform="scale(1.2)"><path d="M-7 -5L1 -8L7 -5L-1 -2Z" fill="#e8e8e8" stroke="#555" stroke-width="1"/><path d="M-7 -5V5L-1 8V-2Z" fill="#fff" stroke="#555" stroke-width="1.100"/><path d="M-1 -2L7 -5V4.500L-1 8Z" fill="#ccc" stroke="#555" stroke-width="1"/></g><path d="M-12 4L-3 0.500" stroke="#999" stroke-width="1.800"/></g>
<g transform="translate(961,99)"><path d="M0 -13V13" stroke="#666" stroke-width="1.800"/><g transform="scale(1.2)"><path d="M-7 -5L1 -8L7 -5L-1 -2Z" fill="#e8e8e8" stroke="#555" stroke-width="1"/><path d="M-7 -5V5L-1 8V-2Z" fill="#fff" stroke="#555" stroke-width="1.100"/><path d="M-1 -2L7 -5V4.500L-1 8Z" fill="#ccc" stroke="#555" stroke-width="1"/></g><path d="M0 -13V-7M0 8.500V13" stroke="#666" stroke-width="1.800"/></g>
<g transform="translate(1000,99)"><g stroke="#888" fill="#f4f4f4" stroke-width="1"><path d="M-9 -2L-1 -5L1 1L-7 4.500Z"/><path d="M-1 -3.500L3 -6L4 -1L1 0Z"/><path d="M-4 4L-6 11M-3.500 4L-2 11M-4 6V8"/></g><path d="M4 -4L9 -6" stroke="#888" stroke-width="1"/><path d="M4 -4L6.500 -6.500V-3Z" fill="#888"/><path d="M7 -11L13 -13L15 -11V-3L9 -1L7 -3Z" fill="#bbb" stroke="#777" stroke-width="1"/><path d="M7 -11L9 -9L15 -11M9 -9V-1" stroke="#777" stroke-width="0.800" fill="none"/></g>
<g transform="translate(1045,99)"><rect x="-11" y="-16" width="14" height="2.500" rx="1" fill="#0a5a8a"/><path d="M-7 -13.500H-1L-1.500 -10H-6.500Z" fill="#1e90d0"/><path d="M-9 -10H1L-2.500 -4H-5.500Z" fill="#1e90d0" stroke="#0a4a7a" stroke-width="0.500"/><path d="M-7.500 -7.500H-0.500" stroke="#fff" stroke-width="0.900"/><path d="M-5.500 -4H-2.500L-3.500 13.500L-4 16L-4.500 13.500Z" fill="#222"/><path d="M-6 -1H-2M-6 2H-2M-6 5H-2M-5.500 8H-2.500M-5.500 11H-2.500" stroke="#222" stroke-width="0.900"/><text transform="translate(12,16.500) rotate(-90)" font-size="13.500" font-weight="bold" font-family="Liberation Sans,sans-serif" fill="#e8141c" letter-spacing="-0.3">ABF</text><rect x="13" y="-15" width="1.300" height="5" fill="#e8141c"/></g>
<g transform="translate(1270.5,99)"><text x="-14.500" y="2" font-size="25" font-weight="bold" font-style="italic" font-family="Liberation Serif,serif" fill="#1a18a0">G</text><text x="2" y="7" font-size="21" font-weight="bold" font-style="italic" font-family="Liberation Serif,serif" fill="#1a18a0">3</text><rect x="-14.500" y="10" width="30" height="5.500" fill="#f20cb4"/></g>
<g transform="translate(1323,99)"><path d="M-9 -8Q-2 -12 6 -10Q11 -9 10 -4Q9 4 3 10Q-3 11 -7 7Q-11 0 -9 -8Z" fill="#f4d0c8" stroke="#4a2a2a" stroke-width="1.300"/><path d="M-3 -10Q-5 -2 -2 2Q0 6 -1 10M4 -10Q2 -4 4 0Q6 4 3 9" fill="none" stroke="#6a3a3a" stroke-width="0.800"/></g>
<g transform="translate(1355,99)"><path d="M-7 3Q-6 -12 5 -10Q9 -8 8 2" fill="none" stroke="#f06050" stroke-width="1.100"/><path d="M-11 3L-4 1L-3 9L-11 9Z" fill="#10a050" stroke="#064" stroke-width="0.700"/><circle cx="8.500" cy="7" r="3.800" fill="#f4b400" stroke="#a06000" stroke-width="0.800"/></g>
<g transform="translate(1387,99)"><path d="M-11 3L-5 -6L3 -12L11 1L11 10L0 12L-8 11Z" fill="none" stroke="#18a030" stroke-width="1.100"/><path d="M-5 -6L2 -3L11 1M2 -3L3 -12M-11 3L-2 4L2 -3M-2 4L0 12M-2 4Q4 2 11 10" fill="none" stroke="#18a030" stroke-width="0.900"/></g>
<g transform="translate(1432,99)"><rect x="-13.500" y="-7" width="5" height="14.500" fill="#999"/><rect x="8" y="-7" width="7.500" height="14.500" fill="#999"/><path d="M-6 -7H2L6.500 7.500H-6Z" fill="#444"/><path d="M-8.500 -11.500H3L11 11.500H-8.500Z" fill="none" stroke="#d84848" stroke-width="1.300"/><g fill="#fff" stroke="#d84848" stroke-width="1.200"><circle cx="-8.500" cy="-11.500" r="2.200"/><circle cx="3" cy="-11.500" r="2.200"/><circle cx="11" cy="11.500" r="2.200"/><circle cx="-8.500" cy="11.500" r="2.200"/></g></g>
<g transform="translate(1479,99)"><path d="M-10.500 -5L0 -11.500L10.500 -5L0 0Z" fill="#dcc49c" stroke="#5a4a30" stroke-width="0.700"/><path d="M-10.500 -5L0 0V12L-9.500 6Z" fill="#a88c64" stroke="#5a4a30" stroke-width="0.700"/><path d="M0 0L10.500 -5L9.500 6L0 12Z" fill="#6a5238" stroke="#5a4a30" stroke-width="0.700"/><path d="M-10.500 -5L-5.500 -8L0 -4.500L5.500 -8L10.500 -5L10 -0.500L3 3V10.500L0 12L-3 10.500V3L-10 -0.500Z" fill="#f4b818" stroke="#a07000" stroke-width="0.700" stroke-linejoin="round"/><path d="M-10.200 -2.500L0 2.500L10.200 -2.500M0 2.500V11.500" fill="none" stroke="#a07000" stroke-width="0.600" opacity="0.6"/></g>
<g transform="translate(1511,99)"><path d="M-10.500 -5L0 -11.500L10.500 -5L0 0Z" fill="#dcc49c" stroke="#5a4a30" stroke-width="0.700"/><path d="M-10.500 -5L0 0V12L-9.500 6Z" fill="#a88c64" stroke="#5a4a30" stroke-width="0.700"/><path d="M0 0L10.500 -5L9.500 6L0 12Z" fill="#6a5238" stroke="#5a4a30" stroke-width="0.700"/><path d="M-10.500 -5L-5.500 -8L0 -4.500L5.500 -8L10.500 -5L10 -0.500L3 3V10.500L0 12L-3 10.500V3L-10 -0.500Z" fill="#b8c8f8" stroke="#5868a8" stroke-width="0.700" stroke-linejoin="round"/><path d="M-10.200 -2.500L0 2.500L10.200 -2.500M0 2.500V11.500" fill="none" stroke="#5868a8" stroke-width="0.600" opacity="0.6"/></g>
<g transform="translate(1543,99)"><path d="M-10.500 -5L0 -11.500L10.500 -5L0 0Z" fill="#dcc49c" stroke="#5a4a30" stroke-width="0.700"/><path d="M-10.500 -5L0 0V12L-9.500 6Z" fill="#a88c64" stroke="#5a4a30" stroke-width="0.700"/><path d="M0 0L10.500 -5L9.500 6L0 12Z" fill="#6a5238" stroke="#5a4a30" stroke-width="0.700"/><path d="M-10.500 -5L-5.500 -8L0 -4.500L5.500 -8L10.500 -5L10 -0.500L3 3V10.500L0 12L-3 10.500V3L-10 -0.500Z" fill="#b8d8a0" stroke="#5a7a48" stroke-width="0.700" stroke-linejoin="round"/><path d="M-10.200 -2.500L0 2.500L10.200 -2.500M0 2.500V11.500" fill="none" stroke="#5a7a48" stroke-width="0.600" opacity="0.6"/></g>
<g transform="translate(1589,99)"><path d="M-11 7L-3 3L0 4.5L7 1L11 3.5L2 9L-1 7.5L-6 11Z" fill="#ece4cc" stroke="#000" stroke-width="1.700" stroke-linejoin="round"/><path d="M-11 3.5L-3 -0.5L0 1.0L7 -2.5L11 0.0L2 5.5L-1 4.0L-6 7.5Z" fill="#ece4cc" stroke="#000" stroke-width="1.700" stroke-linejoin="round"/><path d="M-11 0L-3 -5L0 -3.500L7 -9L11 -6L2 0L-1 -1.500L-6 3Z" fill="#fff" stroke="#000" stroke-width="1.700" stroke-linejoin="round"/><text x="-6.500" y="0.500" font-size="10.500" font-weight="bold" font-family="Liberation Sans,sans-serif" fill="#e8141c">S</text></g>
<g transform="translate(1621,99)"><path d="M-11 7L-3 3L0 4.5L7 1L11 3.5L2 9L-1 7.5L-6 11Z" fill="#ece4cc" stroke="#0a2a90" stroke-width="1.700" stroke-linejoin="round"/><path d="M-11 3.5L-3 -0.5L0 1.0L7 -2.5L11 0.0L2 5.5L-1 4.0L-6 7.5Z" fill="#ece4cc" stroke="#0a2a90" stroke-width="1.700" stroke-linejoin="round"/><path d="M-11 0L-3 -5L0 -3.500L7 -9L11 -6L2 0L-1 -1.500L-6 3Z" fill="#fff" stroke="#000" stroke-width="1.700" stroke-linejoin="round"/><path d="M-6.500 -1L-2 -4M-3.500 0.500L2 -3.500M0 0L5 -4.500M3 -1.500L8.500 -6" stroke="#2060e0" stroke-width="2"/></g>
<g transform="translate(1653,99)"><path d="M-11 7L-3 3L0 4.5L7 1L11 3.5L2 9L-1 7.5L-6 11Z" fill="#ece4cc" stroke="#000" stroke-width="1.700" stroke-linejoin="round"/><path d="M-11 3.5L-3 -0.5L0 1.0L7 -2.5L11 0.0L2 5.5L-1 4.0L-6 7.5Z" fill="#ece4cc" stroke="#000" stroke-width="1.700" stroke-linejoin="round"/><path d="M-11 0L-3 -5L0 -3.500L7 -9L11 -6L2 0L-1 -1.500L-6 3Z" fill="#fff" stroke="#000" stroke-width="1.700" stroke-linejoin="round"/><path d="M-6 -2L-4 -8.500L6 -9.500L8 -4.500L1 -0.500L1 3.500" fill="none" stroke="#f01020" stroke-width="2.800" stroke-linejoin="miter"/><path d="M0.500 7V11" stroke="#f01020" stroke-width="2.400"/></g>
<g transform="translate(1685,99)"><path d="M-11 7L-3 3L0 4.5L7 1L11 3.5L2 9L-1 7.5L-6 11Z" fill="#ece4cc" stroke="#000" stroke-width="1.700" stroke-linejoin="round"/><path d="M-11 3.5L-3 -0.5L0 1.0L7 -2.5L11 0.0L2 5.5L-1 4.0L-6 7.5Z" fill="#ece4cc" stroke="#000" stroke-width="1.700" stroke-linejoin="round"/><path d="M-11 0L-3 -5L0 -3.500L7 -9L11 -6L2 0L-1 -1.500L-6 3Z" fill="#fff" stroke="#000" stroke-width="1.700" stroke-linejoin="round"/><path d="M-12 -5.500H2V-11.500L13 -1L2 9.500V3.500H-12Z" fill="#0a50f8"/><text x="-5.500" y="2.500" font-size="10" font-weight="bold" font-family="Liberation Sans,sans-serif" fill="#e8141c">S</text></g>
<g transform="translate(1722,99)"><path d="M-5 -10L6 1" stroke="#222" stroke-width="1.300"/></g>
<rect x="245.5" y="89" width="2" height="20" fill="#8c8c8c"/>
<rect x="348" y="89" width="2" height="20" fill="#8c8c8c"/>
<rect x="387" y="89" width="2" height="20" fill="#8c8c8c"/>
<rect x="458" y="89" width="2" height="20" fill="#8c8c8c"/>
<rect x="495" y="89" width="2" height="20" fill="#8c8c8c"/>
<rect x="532" y="89" width="2" height="20" fill="#8c8c8c"/>
<rect x="667" y="89" width="2" height="20" fill="#8c8c8c"/>
<rect x="735.5" y="89" width="2" height="20" fill="#8c8c8c"/>
<rect x="983" y="89" width="2" height="20" fill="#8c8c8c"/>
<rect x="1289.5" y="89" width="2" height="20" fill="#8c8c8c"/>
<rect x="809" y="90" width="1" height="1" fill="#bcbcc8"/><rect x="812" y="90" width="1" height="1" fill="#bcbcc8"/><rect x="809" y="92" width="1" height="1" fill="#bcbcc8"/><rect x="812" y="92" width="1" height="1" fill="#bcbcc8"/><rect x="809" y="95" width="1" height="1" fill="#bcbcc8"/><rect x="812" y="95" width="1" height="1" fill="#bcbcc8"/><rect x="809" y="97" width="1" height="1" fill="#bcbcc8"/><rect x="812" y="97" width="1" height="1" fill="#bcbcc8"/><rect x="809" y="99" width="1" height="1" fill="#bcbcc8"/><rect x="812" y="99" width="1" height="1" fill="#bcbcc8"/><rect x="809" y="101" width="1" height="1" fill="#bcbcc8"/><rect x="812" y="101" width="1" height="1" fill="#bcbcc8"/><rect x="809" y="104" width="1" height="1" fill="#bcbcc8"/><rect x="812" y="104" width="1" height="1" fill="#bcbcc8"/><rect x="809" y="106" width="1" height="1" fill="#bcbcc8"/><rect x="812" y="106" width="1" height="1" fill="#bcbcc8"/>
<rect x="1021" y="90" width="1" height="1" fill="#bcbcc8"/><rect x="1024" y="90" width="1" height="1" fill="#bcbcc8"/><rect x="1021" y="92" width="1" height="1" fill="#bcbcc8"/><rect x="1024" y="92" width="1" height="1" fill="#bcbcc8"/><rect x="1021" y="95" width="1" height="1" fill="#bcbcc8"/><rect x="1024" y="95" width="1" height="1" fill="#bcbcc8"/><rect x="1021" y="97" width="1" height="1" fill="#bcbcc8"/><rect x="1024" y="97" width="1" height="1" fill="#bcbcc8"/><rect x="1021" y="99" width="1" height="1" fill="#bcbcc8"/><rect x="1024" y="99" width="1" height="1" fill="#bcbcc8"/><rect x="1021" y="101" width="1" height="1" fill="#bcbcc8"/><rect x="1024" y="101" width="1" height="1" fill="#bcbcc8"/><rect x="1021" y="104" width="1" height="1" fill="#bcbcc8"/><rect x="1024" y="104" width="1" height="1" fill="#bcbcc8"/><rect x="1021" y="106" width="1" height="1" fill="#bcbcc8"/><rect x="1024" y="106" width="1" height="1" fill="#bcbcc8"/>
<rect x="1067" y="90" width="1" height="1" fill="#bcbcc8"/><rect x="1070" y="90" width="1" height="1" fill="#bcbcc8"/><rect x="1067" y="92" width="1" height="1" fill="#bcbcc8"/><rect x="1070" y="92" width="1" height="1" fill="#bcbcc8"/><rect x="1067" y="95" width="1" height="1" fill="#bcbcc8"/><rect x="1070" y="95" width="1" height="1" fill="#bcbcc8"/><rect x="1067" y="97" width="1" height="1" fill="#bcbcc8"/><rect x="1070" y="97" width="1" height="1" fill="#bcbcc8"/><rect x="1067" y="99" width="1" height="1" fill="#bcbcc8"/><rect x="1070" y="99" width="1" height="1" fill="#bcbcc8"/><rect x="1067" y="101" width="1" height="1" fill="#bcbcc8"/><rect x="1070" y="101" width="1" height="1" fill="#bcbcc8"/><rect x="1067" y="104" width="1" height="1" fill="#bcbcc8"/><rect x="1070" y="104" width="1" height="1" fill="#bcbcc8"/><rect x="1067" y="106" width="1" height="1" fill="#bcbcc8"/><rect x="1070" y="106" width="1" height="1" fill="#bcbcc8"/>
<rect x="1247" y="90" width="1" height="1" fill="#bcbcc8"/><rect x="1250" y="90" width="1" height="1" fill="#bcbcc8"/><rect x="1247" y="92" width="1" height="1" fill="#bcbcc8"/><rect x="1250" y="92" width="1" height="1" fill="#bcbcc8"/><rect x="1247" y="95" width="1" height="1" fill="#bcbcc8"/><rect x="1250" y="95" width="1" height="1" fill="#bcbcc8"/><rect x="1247" y="97" width="1" height="1" fill="#bcbcc8"/><rect x="1250" y="97" width="1" height="1" fill="#bcbcc8"/><rect x="1247" y="99" width="1" height="1" fill="#bcbcc8"/><rect x="1250" y="99" width="1" height="1" fill="#bcbcc8"/><rect x="1247" y="101" width="1" height="1" fill="#bcbcc8"/><rect x="1250" y="101" width="1" height="1" fill="#bcbcc8"/><rect x="1247" y="104" width="1" height="1" fill="#bcbcc8"/><rect x="1250" y="104" width="1" height="1" fill="#bcbcc8"/><rect x="1247" y="106" width="1" height="1" fill="#bcbcc8"/><rect x="1250" y="106" width="1" height="1" fill="#bcbcc8"/>
<rect x="1299" y="90" width="1" height="1" fill="#bcbcc8"/><rect x="1302" y="90" width="1" height="1" fill="#bcbcc8"/><rect x="1299" y="92" width="1" height="1" fill="#bcbcc8"/><rect x="1302" y="92" width="1" height="1" fill="#bcbcc8"/><rect x="1299" y="95" width="1" height="1" fill="#bcbcc8"/><rect x="1302" y="95" width="1" height="1" fill="#bcbcc8"/><rect x="1299" y="97" width="1" height="1" fill="#bcbcc8"/><rect x="1302" y="97" width="1" height="1" fill="#bcbcc8"/><rect x="1299" y="99" width="1" height="1" fill="#bcbcc8"/><rect x="1302" y="99" width="1" height="1" fill="#bcbcc8"/><rect x="1299" y="101" width="1" height="1" fill="#bcbcc8"/><rect x="1302" y="101" width="1" height="1" fill="#bcbcc8"/><rect x="1299" y="104" width="1" height="1" fill="#bcbcc8"/><rect x="1302" y="104" width="1" height="1" fill="#bcbcc8"/><rect x="1299" y="106" width="1" height="1" fill="#bcbcc8"/><rect x="1302" y="106" width="1" height="1" fill="#bcbcc8"/>
<rect x="1409" y="90" width="1" height="1" fill="#bcbcc8"/><rect x="1412" y="90" width="1" height="1" fill="#bcbcc8"/><rect x="1409" y="92" width="1" height="1" fill="#bcbcc8"/><rect x="1412" y="92" width="1" height="1" fill="#bcbcc8"/><rect x="1409" y="95" width="1" height="1" fill="#bcbcc8"/><rect x="1412" y="95" width="1" height="1" fill="#bcbcc8"/><rect x="1409" y="97" width="1" height="1" fill="#bcbcc8"/><rect x="1412" y="97" width="1" height="1" fill="#bcbcc8"/><rect x="1409" y="99" width="1" height="1" fill="#bcbcc8"/><rect x="1412" y="99" width="1" height="1" fill="#bcbcc8"/><rect x="1409" y="101" width="1" height="1" fill="#bcbcc8"/><rect x="1412" y="101" width="1" height="1" fill="#bcbcc8"/><rect x="1409" y="104" width="1" height="1" fill="#bcbcc8"/><rect x="1412" y="104" width="1" height="1" fill="#bcbcc8"/><rect x="1409" y="106" width="1" height="1" fill="#bcbcc8"/><rect x="1412" y="106" width="1" height="1" fill="#bcbcc8"/>
<rect x="1455" y="90" width="1" height="1" fill="#bcbcc8"/><rect x="1458" y="90" width="1" height="1" fill="#bcbcc8"/><rect x="1455" y="92" width="1" height="1" fill="#bcbcc8"/><rect x="1458" y="92" width="1" height="1" fill="#bcbcc8"/><rect x="1455" y="95" width="1" height="1" fill="#bcbcc8"/><rect x="1458" y="95" width="1" height="1" fill="#bcbcc8"/><rect x="1455" y="97" width="1" height="1" fill="#bcbcc8"/><rect x="1458" y="97" width="1" height="1" fill="#bcbcc8"/><rect x="1455" y="99" width="1" height="1" fill="#bcbcc8"/><rect x="1458" y="99" width="1" height="1" fill="#bcbcc8"/><rect x="1455" y="101" width="1" height="1" fill="#bcbcc8"/><rect x="1458" y="101" width="1" height="1" fill="#bcbcc8"/><rect x="1455" y="104" width="1" height="1" fill="#bcbcc8"/><rect x="1458" y="104" width="1" height="1" fill="#bcbcc8"/><rect x="1455" y="106" width="1" height="1" fill="#bcbcc8"/><rect x="1458" y="106" width="1" height="1" fill="#bcbcc8"/>
<rect x="1566" y="90" width="1" height="1" fill="#bcbcc8"/><rect x="1569" y="90" width="1" height="1" fill="#bcbcc8"/><rect x="1566" y="92" width="1" height="1" fill="#bcbcc8"/><rect x="1569" y="92" width="1" height="1" fill="#bcbcc8"/><rect x="1566" y="95" width="1" height="1" fill="#bcbcc8"/><rect x="1569" y="95" width="1" height="1" fill="#bcbcc8"/><rect x="1566" y="97" width="1" height="1" fill="#bcbcc8"/><rect x="1569" y="97" width="1" height="1" fill="#bcbcc8"/><rect x="1566" y="99" width="1" height="1" fill="#bcbcc8"/><rect x="1569" y="99" width="1" height="1" fill="#bcbcc8"/><rect x="1566" y="101" width="1" height="1" fill="#bcbcc8"/><rect x="1569" y="101" width="1" height="1" fill="#bcbcc8"/><rect x="1566" y="104" width="1" height="1" fill="#bcbcc8"/><rect x="1569" y="104" width="1" height="1" fill="#bcbcc8"/><rect x="1566" y="106" width="1" height="1" fill="#bcbcc8"/><rect x="1569" y="106" width="1" height="1" fill="#bcbcc8"/>
<rect x="1708" y="90" width="1" height="1" fill="#bcbcc8"/><rect x="1711" y="90" width="1" height="1" fill="#bcbcc8"/><rect x="1708" y="92" width="1" height="1" fill="#bcbcc8"/><rect x="1711" y="92" width="1" height="1" fill="#bcbcc8"/><rect x="1708" y="95" width="1" height="1" fill="#bcbcc8"/><rect x="1711" y="95" width="1" height="1" fill="#bcbcc8"/><rect x="1708" y="97" width="1" height="1" fill="#bcbcc8"/><rect x="1711" y="97" width="1" height="1" fill="#bcbcc8"/><rect x="1708" y="99" width="1" height="1" fill="#bcbcc8"/><rect x="1711" y="99" width="1" height="1" fill="#bcbcc8"/><rect x="1708" y="101" width="1" height="1" fill="#bcbcc8"/><rect x="1711" y="101" width="1" height="1" fill="#bcbcc8"/><rect x="1708" y="104" width="1" height="1" fill="#bcbcc8"/><rect x="1711" y="104" width="1" height="1" fill="#bcbcc8"/><rect x="1708" y="106" width="1" height="1" fill="#bcbcc8"/><rect x="1711" y="106" width="1" height="1" fill="#bcbcc8"/>
<rect x="805.5" y="82" width="2" height="34" fill="#e0e0e9"/>
<rect x="1016.5" y="82" width="2" height="34" fill="#e0e0e9"/>
<rect x="1062.5" y="82" width="2" height="34" fill="#e0e0e9"/>
<rect x="1244.5" y="82" width="2" height="34" fill="#e0e0e9"/>
<rect x="1294.5" y="82" width="2" height="34" fill="#e0e0e9"/>
<rect x="1404.5" y="82" width="2" height="34" fill="#e0e0e9"/>
<rect x="1451.5" y="82" width="2" height="34" fill="#e0e0e9"/>
<rect x="1561.5" y="82" width="2" height="34" fill="#e0e0e9"/>
<rect x="1702.5" y="82" width="2" height="34" fill="#e0e0e9"/>
<rect x="1075.500" y="88.500" width="165" height="21" rx="2" fill="#fff" stroke="#b4b4bc" stroke-width="1"/>
<path d="M1083.500 99.500L1086.500 102.500L1092 95.500" fill="none" stroke="#000" stroke-width="1.500"/>
<text x="1099" y="104" font-size="13" font-family="Liberation Sans,sans-serif" fill="#333">Untagged</text>
<rect x="1220" y="89.500" width="20" height="19" fill="#f8f8fa"/><path d="M1225.500 97.500H1233.500L1229.500 102Z" fill="#666"/>
</svg>
<div id="tabs">
<svg width="40" height="32" style="left:12px;top:0"><circle cx="22.500" cy="12.500" r="4.800" fill="none" stroke="#111" stroke-width="1.700"/><path d="M19 16.500L11.500 24" stroke="#111" stroke-width="2"/></svg>
<div class="tab act" style="left:62.5px;width:69.0px">Scene 1</div>
<div class="tab" style="left:130.5px;width:69.0px">Scene 2</div>
<div class="tab" style="left:198.5px;width:69.0px">Scene 3</div>
<div class="tab" style="left:266.5px;width:69.0px">Scene 4</div>
<div class="tab" style="left:334.5px;width:69.0px">Scene 5</div>
<div class="tab" style="left:402.5px;width:69.0px">Scene 6</div>
<div class="tab" style="left:470.5px;width:69.0px">Scene 7</div>
<div class="tab" style="left:538.5px;width:69.0px">Scene 8</div>
<div class="tab" style="left:606.5px;width:69.0px">Scene 9</div>
<div class="tab" style="left:674.5px;width:76.0px">Scene 10</div>
<div class="tab" style="left:749.5px;width:76.0px">Scene 11</div>
<div class="tab" style="left:824.5px;width:76.0px">Scene 12</div>
<div class="tab" style="left:899.5px;width:75.0px">Scene 13</div>
</div>
<svg width="70" height="880" viewBox="0 117 70 880" style="left:0;top:117px">
<rect x="1" y="118" width="1" height="752" fill="#dcdce6"/><rect x="1" y="869" width="68" height="1" fill="#dcdce6"/>
<rect x="27.0" y="121" width="1" height="1" fill="#c2c2cc"/><rect x="27.0" y="124" width="1" height="1" fill="#c2c2cc"/>
<rect x="29.5" y="121" width="1" height="1" fill="#c2c2cc"/><rect x="29.5" y="124" width="1" height="1" fill="#c2c2cc"/>
<rect x="32.0" y="121" width="1" height="1" fill="#c2c2cc"/><rect x="32.0" y="124" width="1" height="1" fill="#c2c2cc"/>
<rect x="34.5" y="121" width="1" height="1" fill="#c2c2cc"/><rect x="34.5" y="124" width="1" height="1" fill="#c2c2cc"/>
<rect x="37.0" y="121" width="1" height="1" fill="#c2c2cc"/><rect x="37.0" y="124" width="1" height="1" fill="#c2c2cc"/>
<rect x="39.5" y="121" width="1" height="1" fill="#c2c2cc"/><rect x="39.5" y="124" width="1" height="1" fill="#c2c2cc"/>
<rect x="42.0" y="121" width="1" height="1" fill="#c2c2cc"/><rect x="42.0" y="124" width="1" height="1" fill="#c2c2cc"/>
<rect x="3.500" y="129" width="30" height="30.500" rx="4" fill="#dceaf8" stroke="#3a8ccc" stroke-width="1"/>
<g transform="translate(18,144)"><path d="M-4.500 -7.500V5L-1.500 2.300L0.800 7L3 6L0.800 1.500L4.500 1Z" fill="#154a7a"/></g>
<g transform="translate(50,144)"><path d="M-1 -4Q-8 -3 -7.500 2Q-7 6 -3 7.500Q-3.500 11 -8.500 11.500M-3 7.500Q4 8 7.500 3Q9 -3 3 -5" fill="none" stroke="#1e9cd8" stroke-width="1.100" stroke-dasharray="2.200 1.300"/><path d="M-5 -11.500V-1.500L-2.500 -3.700L-0.500 0.300L1.500 -0.700L-0.500 -4.500L2.500 -5Z" fill="#154a7a"/></g>
<g transform="translate(18,176.5)"><path d="M-7 -4L1 -9.500L8.500 1Q9.500 3 8 4.500L3 8Q1.500 9 0 8L-7 -1Z" fill="#dcebf8" stroke="#154a7a" stroke-width="1.100" stroke-linejoin="round"/><ellipse cx="3" cy="-4" rx="5.500" ry="3" fill="none" stroke="#154a7a" stroke-width="1" transform="rotate(-35 3 -4)"/><path d="M-2.500 -8Q-10 -6 -10.500 4Q-10 8 -8.500 6.500Q-8 -3 0.500 -6.500Z" fill="#1e9cd8"/></g>
<g transform="translate(50,176.5)"><path d="M-10 3L2 -9L10 -3L-2 9L-6 9Z" fill="#dcebf8" stroke="#154a7a" stroke-width="1.100" stroke-linejoin="round"/><path d="M-5.500 -1.500L-0.500 -6.500L7 -0.500L2 4.500Z" fill="#1e9cd8"/><path d="M-8.500 10.500H9.500" stroke="#58b8e8" stroke-width="1.400"/></g>
<g transform="translate(18,209.5)"><g fill="none" stroke="#154a7a" stroke-width="1" stroke-linejoin="round"><path d="M-3.500 -8L0.200 -10L4 -8V-4L0.200 -2L-3.500 -4Z M-3.500 -8L0.200 -6L4 -8M0.200 -6V-2"/><path d="M-7.500 -1L-3.800 -3L0 -1V3.500L-3.800 5.500L-7.500 3.500Z M-7.500 -1L-3.800 1L0 -1M-3.800 1V5.500"/><path d="M0.500 -1L4.200 -3L8 -1V3.500L4.200 5.500L0.500 3.500Z M0.500 -1L4.200 1L8 -1M4.200 1V5.500"/></g></g>
<g transform="translate(50,209.5)"><path d="M-9 0L1.500 -9L9 -2L0 8H-9Z" fill="#dcebf8" stroke="#154a7a" stroke-width="1.200" stroke-linejoin="round"/><circle cx="-5" cy="4" r="1.300" fill="none" stroke="#1e9cd8" stroke-width="0.900"/></g>
<g transform="translate(18,246)"><path d="M-5 4L7.500 -9L9.500 -7L-3 6Z" fill="#fff" stroke="#ff0000" stroke-width="1.200"/><path d="M-5 4L-3 6L-9.500 9Z" fill="#154a7a"/></g>
<g transform="translate(50,246)"><path d="M-5 8Q-6 2 -1 2Q5 3 5.500 8Q8 10 8.500 5Q7 -1 1 -2Q-5 -3 -3.500 -6Q-1 -8 3 -6L8 -8.500" fill="none" stroke="#1e9cd8" stroke-width="1.200"/><circle cx="9" cy="-9" r="2" fill="#ff0000"/><circle cx="-6.500" cy="9" r="1.700" fill="#154a7a"/></g>
<g transform="translate(18,278)"><rect x="-8" y="-9" width="15.500" height="17.500" fill="#dcebf8" stroke="#1e9cd8" stroke-width="1.200"/><path d="M-7.500 8L7 -8" stroke="#154a7a" stroke-width="1"/><circle cx="7" cy="-8" r="2.300" fill="#ff0000"/><circle cx="-7.500" cy="8" r="1.800" fill="#154a7a"/></g>
<g transform="translate(50,278)"><path d="M-6 -4V-11H8.500V6" fill="#dcebf8" stroke="#1e9cd8" stroke-width="1.200"/><path d="M-6.500 -4V7H8.500" fill="#dcebf8" stroke="#1e9cd8" stroke-width="1.200" stroke-dasharray="3.500 1.500"/><path d="M-2 -4Q6 -4 8.500 6" fill="none" stroke="#154a7a" stroke-width="1.100"/><circle cx="-6.500" cy="-4" r="2.800" fill="#ff0000"/><circle cx="-6.500" cy="7.500" r="1.800" fill="#154a7a"/><circle cx="8.500" cy="7.500" r="1.800" fill="#154a7a"/></g>
<g transform="translate(18,310)"><circle r="9.300" fill="#dcebf8" stroke="#1e9cd8" stroke-width="1.200"/><circle r="4" fill="#f4f8fc"/><path d="M0 0L7 -7" stroke="#154a7a" stroke-width="1"/><circle cx="7.200" cy="-7.200" r="2.300" fill="#ff0000"/><circle r="1.800" fill="#154a7a"/></g>
<g transform="translate(50,310)"><path d="M-10.500 0L-5.500 -9H5.500L10.500 0L5.500 9H-5.500Z" fill="#dcebf8" stroke="#1e9cd8" stroke-width="1.200"/><path d="M0 0L4.500 -7.500" stroke="#154a7a" stroke-width="1"/><circle cx="4.500" cy="-7.500" r="2.300" fill="#ff0000"/><circle r="1.800" fill="#154a7a"/></g>
<g transform="translate(18,342.5)"><path d="M-8 8Q6 7 7.500 -7" fill="none" stroke="#1e9cd8" stroke-width="1.300"/><path d="M-8 -7.500V8L7.500 -7" fill="none" stroke="#154a7a" stroke-width="1"/><circle cx="7.500" cy="-7" r="2.300" fill="#ff0000"/><circle cx="-8" cy="-7.500" r="1.800" fill="#154a7a"/><circle cx="-8" cy="8" r="1.800" fill="#154a7a"/></g>
<g transform="translate(50,342.5)"><path d="M-6.500 -7Q2 -11 7.500 -6.500M-6.500 -7Q-10 0 -6 7.500" fill="none" stroke="#1e9cd8" stroke-width="1.300"/><path d="M-6 7.500L7.500 -6.500M-6.500 -7L1 0.500" fill="none" stroke="#154a7a" stroke-width="1"/><circle cx="-6.500" cy="-7" r="2.300" fill="#ff0000"/><circle cx="7.500" cy="-6.500" r="1.800" fill="#154a7a"/><circle cx="-6" cy="7.500" r="1.800" fill="#154a7a"/></g>
<g transform="translate(18,374.5)"><path d="M-2 -9Q8 -9 10 0Q11 5 7 6M-7 4.500Q-2 11 7 6" fill="none" stroke="#1e9cd8" stroke-width="1.300"/><path d="M-2 -9L7 6L-7.500 2.500" fill="none" stroke="#154a7a" stroke-width="1"/><circle cx="-2" cy="-9" r="2.300" fill="#ff0000"/><circle cx="-7.500" cy="2.500" r="1.800" fill="#154a7a"/><circle cx="7" cy="6" r="1.800" fill="#154a7a"/></g>
<g transform="translate(50,374.5)"><path d="M-8 -8H7.500Q7 5 -8 7.500Z" fill="#dcebf8" stroke="#1e9cd8" stroke-width="1.300"/><path d="M-8 -8V7.500L7.500 -7.500" fill="none" stroke="#154a7a" stroke-width="1.300"/><circle cx="7.500" cy="-7.500" r="2.300" fill="#ff0000"/><circle cx="-8" cy="-8" r="1.800" fill="#154a7a"/><circle cx="-8" cy="7.500" r="1.800" fill="#154a7a"/></g>
<g transform="translate(18,412)"><path d="M0 -7V-3M0 3V7M-7 0H-3M3 0H7" stroke="#ff0000" stroke-width="1.800"/><path d="M0 -11L-3 -6.500H3ZM0 11L-3 6.500H3ZM-11 0L-6.500 -3V3ZM11 0L6.500 -3V3Z" fill="#ff0000"/></g>
<g transform="translate(50,412)"><path d="M-10.500 0.500L-1 -4.500L11 0L1 6Z" fill="#dcebf8" stroke="#1e9cd8" stroke-width="1.200" stroke-linejoin="round"/><path d="M-10.500 0.500V3L1 9V6M1 9L11 2.500V0" fill="#dcebf8" stroke="#1e9cd8" stroke-width="1.200" stroke-linejoin="round"/><path d="M-1.500 1.500V-4.500H-4.500L0.500 -10.500L5.500 -4.500H2.500V1.500Z" fill="#ff0000"/></g>
<g transform="translate(18,444.5)"><path d="M-7 2A7.500 7.500 0 0 1 2 -7" fill="none" stroke="#ff0000" stroke-width="1.500"/><path d="M7.500 -1.500A7.500 7.500 0 0 1 -2 7" fill="none" stroke="#ff0000" stroke-width="1.500"/><path d="M6 -7L0.500 -10.500V-3.500Z M-6.500 7L-1 10.500V3.500Z" fill="#ff0000"/></g>
<g transform="translate(50,444.5)"><path d="M-5.500 -9Q-11 -4 -8 2L-1 8.500L3.500 4.500Q-2 0 -0.500 -4.500Q-1 -9 -5.500 -9Z" fill="#dcebf8" stroke="#1e9cd8" stroke-width="1.200"/><ellipse cx="1.200" cy="6.500" rx="3.200" ry="1.700" fill="#dcebf8" stroke="#1e9cd8" stroke-width="1.100" transform="rotate(-40 1.200 6.500)"/><path d="M-3.500 -9.500Q2 -12 6 -7.500" fill="none" stroke="#154a7a" stroke-width="1"/><circle cx="9" cy="-6" r="2.300" fill="#ff0000"/></g>
<g transform="translate(18,476)"><rect x="-10" y="-9" width="20.500" height="18.500" fill="#dcebf8" stroke="#1e9cd8" stroke-width="1.200"/><path d="M-10 -3H3.500V9.500H-10Z" fill="#dcebf8" stroke="#154a7a" stroke-width="1.500"/><path d="M-0.500 1L4 -3.500L1.500 -5.500L9 -8L7.500 -0.500L5.500 -2.500L1.500 2.500Z" fill="#ff0000"/></g>
<g transform="translate(50,476)"><path d="M-8 -7Q4 -13 9 -1Q10 5 8 9" fill="none" stroke="#1e9cd8" stroke-width="1.200"/><path d="M-7 1Q-4 -4 2 -2.500Q6 0 4.500 5Q3 8 -0.500 8.500" fill="none" stroke="#154a7a" stroke-width="1.200"/><path d="M2.500 -2L6 -6L4 -8L11 -9.500L9.500 -2.500L7.500 -4.500L4 -0.500Z" fill="#ff0000"/></g>
<g transform="translate(18,508.5)"><path d="M0 0V9" stroke="#1e9cd8" stroke-width="1" stroke-dasharray="1.500 1.200"/><path d="M0 0L-8 5" stroke="#3a9a3a" stroke-width="1" stroke-dasharray="1.500 1.200"/><path d="M0 0L-8 -5.500" stroke="#ff0000" stroke-width="1" stroke-dasharray="1.500 1.200"/><path d="M0 0V-8" stroke="#1e9cd8" stroke-width="1.300"/><path d="M0 -12L-2 -7H2Z" fill="#1e9cd8"/><path d="M0 0L7 -5" stroke="#3a9a3a" stroke-width="1.300"/><path d="M11 -7.500L5 -6.500L7.500 -3Z" fill="#3a9a3a"/><path d="M0 0L7 5" stroke="#ff0000" stroke-width="1.300"/><path d="M11 7.500L7.500 3L5 6.500Z" fill="#ff0000"/><circle r="2.800" fill="#154a7a"/></g>
<g transform="translate(50,508.5)"><path d="M-0.500 -8.500V8H-10.500Z" fill="#fff" stroke="#154a7a" stroke-width="1.200"/><path d="M2 -8.500V8H11Z" fill="#dcebf8" stroke="#1e9cd8" stroke-width="1.200"/><path d="M0.800 -12V10" stroke="#f06a6a" stroke-width="2"/><path d="M0.800 -12V10" stroke="#fff" stroke-width="0.700" stroke-dasharray="2 1.500"/></g>
<g transform="translate(18,545.5)"><path d="M-8 -5L2 -10.500L8 -1L-2 5Z" fill="#dcebf8" stroke="#154a7a" stroke-width="1.200" stroke-linejoin="round"/><path d="M-8 -5V-1L-3 5.500L-10 8.500" fill="none" stroke="#154a7a" stroke-width="1.200"/><circle cx="0" cy="-3.500" r="3.200" fill="#ff0000"/></g>
<g transform="translate(50,545.5)"><path d="M-9 -3L2 -10M-7.500 -6L-4 0.500M0 -11L3.500 -5" stroke="#154a7a" stroke-width="1.200"/><path d="M3 -5.500L7.500 -2.500M-4.500 0L-1.500 3.500" stroke="#154a7a" stroke-width="0.900"/><text x="-6" y="-4" font-size="5.500" fill="#154a7a" font-family="Liberation Sans,sans-serif" transform="rotate(-32 -6 -4)">5</text><circle cx="7.500" cy="-2.500" r="2.400" fill="#ff0000"/><circle cx="-0.500" cy="4.800" r="2.400" fill="#ff0000"/></g>
<g transform="translate(18,577.5)"><path d="M-7.500 8Q-11 -2 -4 -6Q3 -10 10 -6.500Z" fill="#dcebf8" stroke="#154a7a" stroke-width="1.300" stroke-linejoin="round"/><path d="M-5 4.500Q-7 -1 -2.500 -4Q2 -6.500 5.500 -5Z" fill="#f0f0f6" stroke="#154a7a" stroke-width="1"/><path d="M-8.500 2L-6.500 1.500M-8 -2L-6 -1.500M-5 -5.500L-4 -4M-0.500 -8L0 -6.200M4 -8.500V-6.800" stroke="#154a7a" stroke-width="0.700"/></g>
<g transform="translate(50,577.5)"><rect x="-5" y="-10.500" width="16" height="14" rx="1" fill="#f4f8fc" stroke="#154a7a" stroke-width="1.200"/><text x="-2.500" y="0.500" font-size="8.500" font-family="Liberation Serif,serif" font-weight="bold" fill="#154a7a" letter-spacing="0.5">A1</text><path d="M-5 -4H-8.500V7" fill="none" stroke="#154a7a" stroke-width="1.200"/><path d="M-8.500 10.500L-10.800 6.500H-6.200Z" fill="#154a7a"/></g>
<g transform="translate(18,610)"><circle r="7.500" fill="#f4f8fc" stroke="#154a7a" stroke-width="1.200"/><path d="M-11 0H9" stroke="#154a7a" stroke-width="1.200"/><path d="M0 -9.500L10.500 0L0 9.500" fill="none" stroke="#154a7a" stroke-width="1.200"/><text x="-2" y="-1.800" font-size="5" fill="#154a7a" font-family="Liberation Sans,sans-serif">C</text><text x="-4" y="5.500" font-size="4.500" fill="#154a7a" font-family="Liberation Sans,sans-serif">A·B</text></g>
<g transform="translate(50,610)"><path d="M-6 7L-1.500 -9.500H1.500L7 9L4 7.500L2.500 3H-2L-3.500 7.500Z M-1.200 0.500H1.800L0.200 -5.500Z" fill="#1e9cd8" fill-rule="evenodd"/><path d="M-7 6.500L-2.500 -9.500H-1.500L-6 7.500Z M-3 2.500H2.500L2.800 3.500H-3.300Z" fill="#dcebf8" stroke="#1e9cd8" stroke-width="0.500"/></g>
<g transform="translate(18,647.5)"><ellipse cx="0" cy="0.500" rx="9" ry="4.500" fill="none" stroke="#ff0000" stroke-width="2.400"/><path d="M-4 4V9L3 4.500Z" fill="#f0f0f6"/><path d="M-9.500 0L-5 5.500L-10 6Z M2 1.500L7.500 5L2.500 8Z" fill="#ff0000"/><path d="M-0.500 -10V10" stroke="#154a7a" stroke-width="1.100"/></g>
<g transform="translate(50,647.5)"><path d="M-3.500 3V-5.500Q-2.500 -7 -1.500 -5.500V-1Q1 -2.500 2 -1Q4.500 -2 5 0Q7.500 -0.500 7.500 2V6Q7 10 3.500 11H0Q-2 10 -4 6L-6.500 2.500Q-5.500 1 -3.500 3Z" fill="#dcebf8" stroke="#154a7a" stroke-width="1.100" stroke-linejoin="round"/><path d="M-6 -8H6" stroke="#ff0000" stroke-width="1.800"/><path d="M-9.500 -8L-5.500 -10.500V-5.500Z M9.500 -8L5.500 -10.500V-5.500Z" fill="#ff0000"/></g>
<g transform="translate(18,680)"><circle cx="3.500" cy="-3.500" r="6" fill="none" stroke="#154a7a" stroke-width="1.400"/><path d="M-0.500 1L-8.500 8.500" stroke="#154a7a" stroke-width="2" stroke-linecap="round"/></g>
<g transform="translate(50,680)"><rect x="-10.500" y="-10.500" width="21" height="21" fill="none" stroke="#1e9cd8" stroke-width="1.400" stroke-dasharray="1.300 1.100"/><circle cx="2.500" cy="-2.500" r="5.200" fill="none" stroke="#154a7a" stroke-width="1.300"/><path d="M-1 1L-7.500 7.500" stroke="#154a7a" stroke-width="2" stroke-linecap="round"/></g>
<g transform="translate(18,712)"><circle cx="-0.500" cy="0" r="4.500" fill="none" stroke="#154a7a" stroke-width="1.200"/><path d="M-4 3.500L-9.500 9" stroke="#154a7a" stroke-width="1.700" stroke-linecap="round"/><path d="M-7 -7L-10.500 -10.500M6 -7L9.500 -10.500M6 6L9.500 9.500" stroke="#ff0000" stroke-width="1.800"/><path d="M-11 -11L-5.500 -9.500L-9.500 -5.500Z M10.500 -11L9 -5.500L5 -9.500Z M10.500 10L5 8.500L9 4.500Z" fill="#ff0000"/></g>
<g transform="translate(50,712)"><path d="M-9 -5H-6L-4.500 -7.500H0.500L2 -5H5.500V2.500H-9Z" fill="none" stroke="#154a7a" stroke-width="1.300" stroke-linejoin="round"/><path d="M2.500 -2.500H6A4.300 4.300 0 0 1 6 6.500H1" fill="none" stroke="#ff0000" stroke-width="1.300"/><path d="M-1.500 -2.500L3 -5V0Z" fill="#ff0000"/></g>
<g transform="translate(18,749.5)"><rect x="-5.500" y="-7.500" width="12" height="8" rx="1.200" fill="#dcebf8" stroke="#154a7a" stroke-width="1.100"/><path d="M-3.500 -7.500L-2.500 -9.500H1L2 -7.500" fill="none" stroke="#154a7a" stroke-width="1"/><circle cx="0.500" cy="-3.500" r="2.500" fill="#ff0000"/><path d="M-2.500 1L-5 8.500M0.500 1V6M3.500 1L6 8.500" stroke="#154a7a" stroke-width="1.100"/><ellipse cx="0.500" cy="10" rx="4.500" ry="0.800" fill="#c0c8d0"/></g>
<g transform="translate(50,749.5)"><circle cx="0.500" cy="-8.500" r="1.700" fill="#888"/><path d="M-1.500 -6H2L3 0.500L5 9.500H3L0.500 3L-3 9.500H-5L-1.500 1Z" fill="#888"/><path d="M-3.500 -5.500H-2V1H-3.500Z" fill="#aaa"/><path d="M2 -4L5.500 -1.500M6.500 -4V10" stroke="#999" stroke-width="0.800"/><path d="M-6.500 10.500H8.500" stroke="#999" stroke-width="0.900"/></g>
<g transform="translate(18,782)"><path d="M-9.500 1Q-6 -6.500 1 -7Q8 -6.500 10 0Q8 -2.500 1 -2.500Q-6 -2.500 -9.500 1Z" fill="#154a7a"/><path d="M-10 -3.500L-6 -2M-9.500 -5.500L-5 -3.500M-8 -7.500L-4 -5" stroke="#154a7a" stroke-width="1"/><circle cx="1.500" cy="1.500" r="6.500" fill="#fff" stroke="#154a7a" stroke-width="1.700"/><circle cx="1.500" cy="1.500" r="4" fill="#1e9cd8"/><circle cx="2.500" cy="0.500" r="1.400" fill="#fff"/></g>
<g transform="translate(50,782)"><path d="M-12 1L2 -6.500V8.500Z" fill="none" stroke="#999" stroke-width="1"/><ellipse cx="1.500" cy="1" rx="1.800" ry="5" fill="none" stroke="#999" stroke-width="0.900"/><path d="M2 -7L8 -10.500M2 8.500L8 12" stroke="#999" stroke-width="0.900" stroke-dasharray="2 1.300"/><path d="M7 -7Q9.500 1 7 9" fill="none" stroke="#aaa" stroke-width="1.300"/><path d="M7 -8L8.500 -5H5.800Z M7 10L8.500 7H5.800Z" fill="#aaa"/></g>
<g transform="translate(18,821)"><path d="M-10 -6L-2 -10.500L7 -6V4L-2 9.500L-10 4Z" fill="none" stroke="#0a64a4" stroke-width="1.900" stroke-linejoin="round"/><path d="M-6.500 -4L-2 -6.500L3.500 -4V2.500L-2 5.500L-6.500 2.500Z" fill="none" stroke="#0a64a4" stroke-width="1.600" stroke-linejoin="round"/><path d="M-4 -1.500L-2 -0.500L0.500 -1.500M-2 -0.500V2" stroke="#0a64a4" stroke-width="1.200" fill="none"/><path d="M5 1V7H2L7 12L12 7H9V1Z" fill="#f0f0f6" stroke="#0a64a4" stroke-width="1.300" stroke-linejoin="round"/></g>
<g transform="translate(50,821)"><path d="M-11 -7L-1 -1.500L9 -7V-3.500L-1 2L-11 -3.500Z M-11 7L-1 1.500L9 7V10.500L-1 5L-11 10.500Z" fill="#0a64a4"/><path d="M-10 -10.500L-1 -5.500L8 -10.500" fill="none" stroke="#0a64a4" stroke-width="1.700"/><path d="M6.500 -11L10.500 -9M9.500 -6.500V-3" stroke="#0a64a4" stroke-width="1.600"/><circle cx="7" cy="7" r="5.300" fill="#f0f0f6" stroke="#0a64a4" stroke-width="1.300"/><path d="M4.500 6A2.700 2.700 0 0 1 9.300 5.500M9.500 8A2.700 2.700 0 0 1 4.700 8.500" fill="none" stroke="#0a64a4" stroke-width="1.100"/></g>
<g transform="translate(18,853)"><g fill="none" stroke="#0a64a4" stroke-width="1.700" stroke-linejoin="round"><path d="M-9 -5L-2 -9L5.500 -5L-2 -1Z"/><path d="M-5 -5L-2 -6.800L1.500 -5L-2 -3.200Z" stroke-width="1.200"/><path d="M-10 -1.500L-2 3L5 -1"/><path d="M-10 2L-2 6.500L1 5"/><path d="M-10 5.500L-2 10L1 8.500"/></g><path d="M1.500 3.500H7.500V0.500L13 6L7.500 11.500V8.500H1.500Z" fill="#fff" stroke="#0a64a4" stroke-width="1.300" stroke-linejoin="round"/></g>
<g transform="translate(50,853)"><path d="M-11 -7L-1 -1.500L9 -7V-3.500L-1 2L-11 -3.500Z M-11 7L-1 1.500L9 7V10.500L-1 5L-11 10.500Z" fill="#0a64a4"/><path d="M-10 -10.500L-1 -5.500L8 -10.500" fill="none" stroke="#0a64a4" stroke-width="1.700"/><path d="M6.500 -11L10.500 -9M9.500 -6.500V-3" stroke="#0a64a4" stroke-width="1.600"/><path d="M12.7 6.5L12.7 8.5L11.0 8.7L10.7 9.5L11.7 10.8L10.3 12.2L9.0 11.2L8.2 11.5L8.0 13.2L6.0 13.2L5.8 11.5L5.0 11.2L3.7 12.2L2.3 10.8L3.3 9.5L3.0 8.7L1.3 8.5L1.3 6.5L3.0 6.3L3.3 5.5L2.3 4.2L3.7 2.8L5.0 3.8L5.8 3.5L6.0 1.8L8.0 1.8L8.2 3.5L9.0 3.8L10.3 2.8L11.7 4.2L10.7 5.5L11.0 6.3Z" fill="#f0f0f6" stroke="#0a64a4" stroke-width="1.100" stroke-dasharray="1.200 0.600"/><circle cx="7" cy="7.5" r="1.800" fill="none" stroke="#0a64a4" stroke-width="1"/></g>
<rect x="8" y="227.2" width="52" height="1.600" fill="#8a8a8a"/>
<rect x="8" y="393.2" width="52" height="1.600" fill="#8a8a8a"/>
<rect x="8" y="527.2" width="52" height="1.600" fill="#8a8a8a"/>
<rect x="8" y="629.2" width="52" height="1.600" fill="#8a8a8a"/>
<rect x="8" y="731.2" width="52" height="1.600" fill="#8a8a8a"/>
<rect x="8" y="801.2" width="52" height="1.600" fill="#8a8a8a"/>
</svg>
<div class="abs" style="left:257px;top:198px;width:229px;height:59px;background:#f0f0f6;border:1px solid #dcdce6"></div><div class="abs" style="left:259px;top:201px;width:225px;height:20px;background:#9db7d5;border-top:1px solid #b0b0b0"></div>
<div class="abs" style="left:263px;top:204px;font-size:13px;font-weight:bold;color:#444;letter-spacing:-0.18px;white-space:nowrap">Keyframe Animation</div>
<svg width="12" height="12" style="left:469px;top:204px"><path d="M2.500 3L8.500 9M8.500 3L2.500 9" stroke="#333" stroke-width="1"/></svg>
<svg width="229" height="36" viewBox="257 222 229 36" style="left:257px;top:222px">
<defs><linearGradient id="gp" x1="0" y1="0" x2="1" y2="1"><stop offset="0" stop-color="#2a5ae0"/><stop offset="1" stop-color="#5a90f0"/></linearGradient><radialGradient id="gq" cx="0.4" cy="0.35" r="0.7"><stop offset="0" stop-color="#4aa0f0"/><stop offset="1" stop-color="#0a4ab0"/></radialGradient><linearGradient id="gf" x1="0" y1="0" x2="0" y2="1"><stop offset="0" stop-color="#6ac0f0"/><stop offset="1" stop-color="#1070c0"/></linearGradient></defs>
<path d="M265 227V251L285 239Z" fill="url(#gp)"/>
<circle cx="307" cy="239" r="10.500" fill="#fff" stroke="#333" stroke-width="2.200"/><circle cx="307" cy="239" r="11.800" fill="none" stroke="#aaa" stroke-width="0.800"/><circle cx="307" cy="239" r="4.600" fill="#e0101c"/>
<rect x="329" y="229.500" width="19.500" height="19.500" fill="none" stroke="#3a48c0" stroke-width="1.400" stroke-dasharray="3 3.500" stroke-dashoffset="-3.500"/><g fill="#3a48c0"><rect x="327" y="227" width="4.200" height="4.200"/><rect x="346.500" y="227" width="4.200" height="4.200"/><rect x="327" y="246.500" width="4.200" height="4.200"/><rect x="346.500" y="246.500" width="4.200" height="4.200"/></g>
<circle cx="371" cy="239" r="10.500" fill="#999" stroke="#777" stroke-width="1"/><path d="M366.500 234.500L375.500 243.500M375.500 234.500L366.500 243.500" stroke="#fff" stroke-width="2.400"/>
<circle cx="402.500" cy="240.500" r="8.500" fill="none" stroke="#3a48c0" stroke-width="2.600"/><path d="M399 228.500H406M402.500 229V232M409.500 231.500L412 234" stroke="#3a48c0" stroke-width="2.400"/><path d="M402 241L406 237" stroke="#3a48c0" stroke-width="2.200"/>
<path d="M423 228L447 230V250L423 248Z" fill="#111"/><path d="M424 231L434.500 232V246.500L424 245.500Z M435.500 232L446 233V247.500L435.500 246.500Z" fill="url(#gf)"/><path d="M424 229.200L446 231M424 247L446 248.800" stroke="#ddd" stroke-width="1.200" stroke-dasharray="1.500 1.300"/>
<circle cx="467" cy="239" r="10.500" fill="#f4f4f8" stroke="#bbb" stroke-width="1"/><circle cx="467" cy="239" r="8" fill="url(#gq)"/><text x="463.500" y="244" font-size="13" font-weight="bold" fill="#fff" font-family="Liberation Sans,sans-serif">?</text>
</svg>
<div class="abs" style="left:1414px;top:224px;width:37px;height:59px;background:#f0f0f6;border:1px solid #dcdce6"></div><div class="abs" style="left:1416px;top:227px;width:33px;height:20px;background:#9db7d5;border-top:1px solid #b0b0b0;border-bottom:1px solid #b0b0b0"></div><div class="abs" style="left:1420px;top:230.5px;font-size:12px;font-weight:bold;color:#444;letter-spacing:0.3px">...</div><svg width="12" height="12" style="left:1434px;top:230px"><path d="M2.500 3L8.500 9M8.500 3L2.500 9" stroke="#333" stroke-width="1"/></svg><svg width="36" height="32" viewBox="-18 -16 36 32" style="left:1414px;top:249px"><path d="M-11.500 -4.500L1 -11L11.500 10H-11.500Z" fill="#8c78f8" stroke="#f02040" stroke-width="1.300" stroke-linejoin="round"/></svg>
<div class="abs" style="left:1493px;top:298px;width:37px;height:59px;background:#f0f0f6;border:1px solid #dcdce6"></div><div class="abs" style="left:1495px;top:301px;width:33px;height:20px;background:#9db7d5;border-top:1px solid #b0b0b0;border-bottom:1px solid #b0b0b0"></div><div class="abs" style="left:1499px;top:304.5px;font-size:12px;font-weight:bold;color:#444;letter-spacing:0.3px">...</div><svg width="12" height="12" style="left:1513px;top:304px"><path d="M2.500 3L8.500 9M8.500 3L2.500 9" stroke="#333" stroke-width="1"/></svg><svg width="36" height="32" viewBox="-18 -16 36 32" style="left:1493px;top:323px"><circle cx="-2.500" cy="0" r="7.700" fill="none" stroke="#154a7a" stroke-width="1.700"/><path d="M-10 -12.500L-5.500 -10.500L-10 -8Z M8 -2.500L12.500 0L8 2.500Z M-10 8L-5.500 10.500L-10 13Z" fill="#154a7a"/></svg>
<div class="abs" style="left:1548px;top:909px;width:37px;height:59px;background:#f0f0f6;border:1px solid #dcdce6"></div><div class="abs" style="left:1550px;top:912px;width:33px;height:20px;background:#9db7d5;border-top:1px solid #b0b0b0;border-bottom:1px solid #b0b0b0"></div><div class="abs" style="left:1554px;top:915.5px;font-size:12px;font-weight:bold;color:#444;letter-spacing:0.3px">...</div><svg width="12" height="12" style="left:1568px;top:915px"><path d="M2.500 3L8.500 9M8.500 3L2.500 9" stroke="#333" stroke-width="1"/></svg><svg width="36" height="32" viewBox="-18 -16 36 32" style="left:1548px;top:934px"><rect x="-9.500" y="-9" width="9.500" height="13" rx="1" fill="#f4f0f0" stroke="#e83030" stroke-width="1"/><circle cx="-5" cy="-2" r="1.700" fill="#e83030"/><path d="M-5 -1L2 -3L6 0L6.500 7L-0.500 10L-3.500 6Z" fill="#c8a878" stroke="#000" stroke-width="1.100"/><path d="M-5 -1L-1 2.500L6 0M-1 2.500L-0.500 10" fill="none" stroke="#000" stroke-width="0.900"/><path d="M6.500 7L10 8L2 11Z" fill="#666"/></svg>
<svg width="1724" height="6" viewBox="0 982 1724 6" style="left:0;top:982px">
<rect x="0" y="982" width="1724" height="1" fill="#dcdce6"/>
<rect x="2" y="984" width="1" height="4" fill="#d4d4de"/>
<rect x="298" y="984" width="1" height="4" fill="#d4d4de"/>
<rect x="383" y="984" width="1" height="4" fill="#d4d4de"/>
<rect x="727" y="984" width="1" height="4" fill="#d4d4de"/>
<rect x="939" y="984" width="1" height="4" fill="#d4d4de"/>
<rect x="1145" y="984" width="1" height="4" fill="#d4d4de"/>
<rect x="1190" y="984" width="1" height="4" fill="#d4d4de"/>
<rect x="2" y="983" width="296" height="1" fill="#d4d4de"/><rect x="383" y="983" width="344" height="1" fill="#d4d4de"/><rect x="727" y="983" width="212" height="1" fill="#d4d4de"/><rect x="939" y="983" width="206" height="1" fill="#d4d4de"/>
<circle cx="326" cy="993" r="9" fill="#fce8dc" stroke="#f09060" stroke-width="1"/><rect x="320" y="987" width="12" height="2" fill="#f07030"/><path d="M360 988L366 985V988Z" fill="#333"/>
<circle cx="1217" cy="993" r="9" fill="#fce8dc" stroke="#f09060" stroke-width="1"/><path d="M1243 988l3 -2l3 2" stroke="#f0a020" stroke-width="1.500" fill="none"/><rect x="1274" y="986" width="26" height="2" fill="#333"/><circle cx="1320" cy="988" r="3.500" fill="#222"/><rect x="1343" y="985.500" width="30" height="6" rx="3" fill="#fff" stroke="#2a80d0" stroke-width="1"/><rect x="1381" y="986" width="1" height="2" fill="#222"/><rect x="1400" y="986" width="1" height="2" fill="#222"/><rect x="1431" y="985" width="2" height="3" fill="#222"/><rect x="1442" y="986" width="24" height="2" fill="#bbb"/><rect x="1490" y="987" width="2" height="1" fill="#666"/><rect x="1500" y="987" width="2" height="1" fill="#666"/><rect x="1565" y="986" width="1" height="2" fill="#222"/><rect x="1622" y="987" width="1" height="1" fill="#222"/><circle cx="1660" cy="990" r="3.500" fill="#f0a020"/><path d="M1682 985l4 3l4 -3" stroke="#f0a020" stroke-width="1.500" fill="none"/>
</svg>
</body></html>
